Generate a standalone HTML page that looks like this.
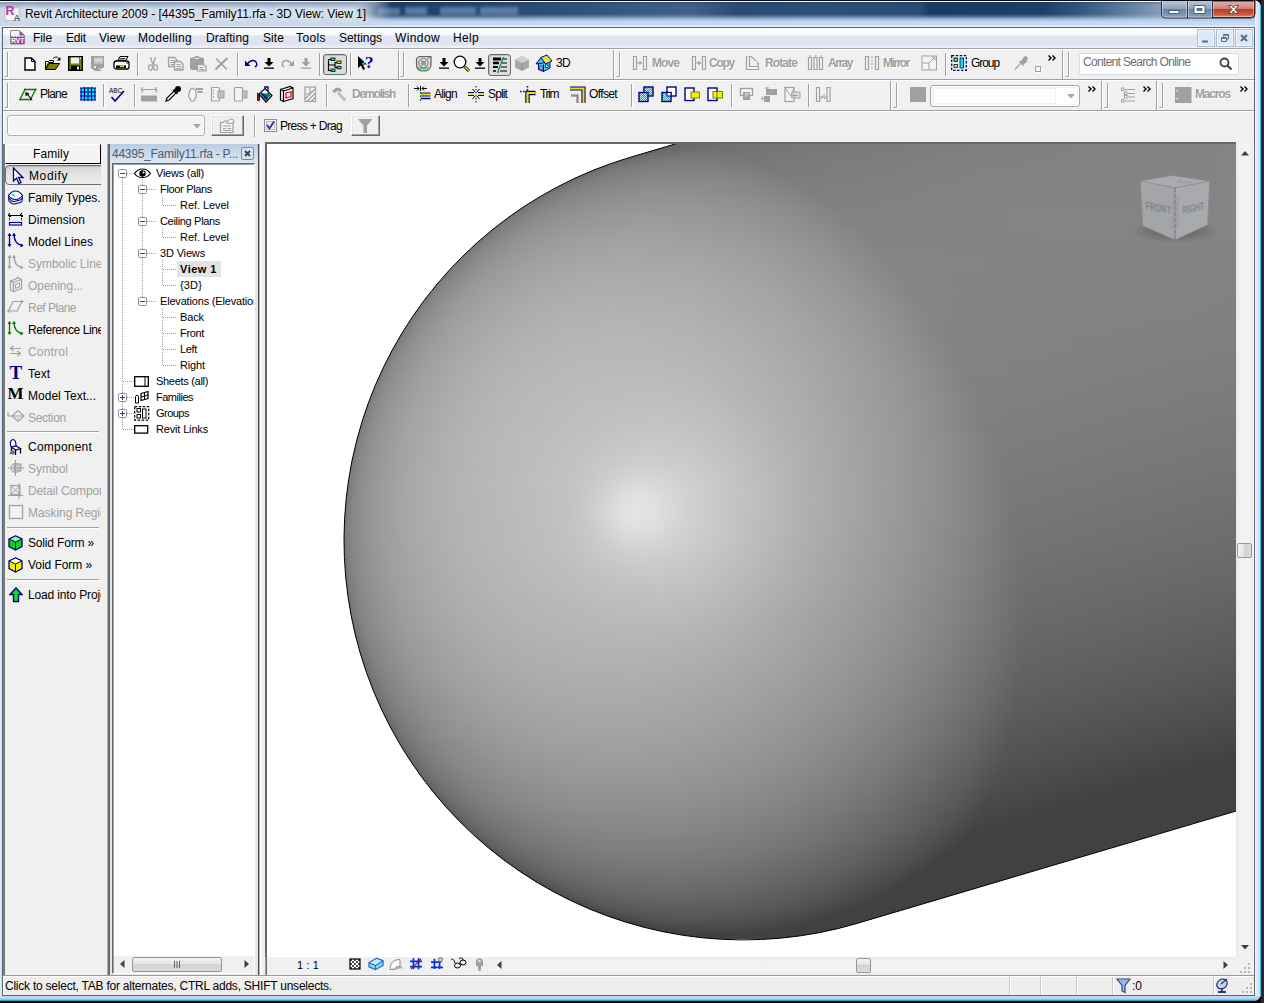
<!DOCTYPE html>
<html><head><meta charset="utf-8"><title>Revit Architecture 2009</title>
<style>
*{box-sizing:border-box;margin:0;padding:0}
html,body{width:1264px;height:1003px;overflow:hidden;background:#000}
body{font-family:"Liberation Sans",sans-serif;font-size:12px;color:#000;position:relative}
.a{position:absolute}
.t{white-space:nowrap}
#win{left:0;top:0;width:1261px;height:1001px;background:#c3d7f1;border-radius:0 8px 8px 0;overflow:hidden}
#outside{left:1261px;top:0;width:3px;height:1003px;background:#2a2a2a}
#title{left:0;top:0;width:1261px;height:27px;background:linear-gradient(180deg,#060a12 0,#060a12 1px,#fff 1px,#f0f4fa 2px,rgba(20,40,70,.25) 2px,rgba(20,40,70,0) 5px,rgba(195,217,243,0) 14px,rgba(170,195,225,.45) 17px,rgba(185,208,236,.8) 19px,rgba(195,217,243,1) 22px,#c5dbf5 25px,#e6effb 26px,#e6effb 27px),linear-gradient(90deg,#1e3e68 0,#1e3e68 373px,#22436c 450px,#2a4a74 520px,#33557d 600px,#41618a 690px,#2a4a74 738px,#2c4e78 814px,#2a4c76 920px,#163c66 930px,#1c4069 1042px,#34567e 1080px,#6a86a6 1137px,#8aa0ba 1162px,#9fb4cc 1261px)}
#titleglow{left:0;top:2px;width:400px;height:24px;background:linear-gradient(90deg,rgba(203,216,232,1) 0,rgba(203,216,232,1) 355px,rgba(203,216,232,.6) 372px,rgba(203,216,232,0) 392px)}
#titleglow2{left:0;top:2px;width:392px;height:7px;background:linear-gradient(180deg,rgba(120,140,172,.85),rgba(120,140,172,0));-webkit-mask-image:linear-gradient(90deg,#000 350px,transparent 390px)}
#titletext{left:25px;top:7px;font-size:12px;line-height:14px;white-space:nowrap;letter-spacing:-0.05px;text-shadow:0 0 6px #fff,0 0 10px #fff}
#client{left:2px;top:27px;width:1253px;height:969px;background:#f0f0f0;border:1px solid #5a6674;box-shadow:inset 1px 1px 0 #fff}
#canvasbox{left:265px;top:142px;width:971px;height:815px;background:#fff;border-top:2px solid #696969;border-left:2px solid #696969;overflow:hidden}
#shape{left:0;top:0;width:969px;height:813px}
#shape i{position:absolute;left:0;width:969px;height:3px;display:block}
</style></head><body>
<div id="win" class="a">
<div id="title" class="a"></div>
<div class="a" style="left:374px;top:6px;width:150px;height:10px;filter:blur(1.6px);opacity:.55"><div class="a" style="left:4px;top:2px;width:22px;height:7px;background:#86a6cc"></div><div class="a" style="left:31px;top:1px;width:22px;height:8px;background:#86a6cc"></div><div class="a" style="left:66px;top:1px;width:36px;height:8px;background:#86a6cc"></div><div class="a" style="left:106px;top:1px;width:38px;height:8px;background:#86a6cc"></div></div>
<div id="titleglow" class="a"></div>
<div id="titleglow2" class="a"></div>
<svg class="a" style="left:4px;top:4px" width="18" height="18" viewBox="0 0 18 18"><path d="M1 4h14v12.5H1z" fill="#f4f4f4" stroke="#b0b0b0" stroke-width=".6"/><text x="1.5" y="11" font-family="Liberation Sans,sans-serif" font-weight="bold" font-size="12.5" fill="#b43ca4">R</text><text x="10" y="17" font-family="Liberation Sans,sans-serif" font-size="8.5" fill="#000">A</text></svg>
<div id="titletext" class="a">Revit Architecture 2009 - [44395_Family11.rfa - 3D View: View 1]</div>
<div class="a" style="left:0;top:27px;width:3px;height:974px;background:linear-gradient(90deg,#e4eefb,#bdd3ef)"></div>
<div class="a" style="left:1255px;top:2px;width:6px;height:999px;background:linear-gradient(90deg,#fff 0,#e4eefb 1px,#d3e3f8 4px,#c9ddf5 5px,#3cc6ee 5px,#35b8e4 6px)"></div>
<div class="a" style="left:0;top:995px;width:1261px;height:6px;background:linear-gradient(180deg,#fff 0,#c3d8f2 1px,#b9d0ee 4px,#35c4ee 5px,#1d86b8 6px)"></div>
<div id="client" class="a"></div>
<div class="a" style="left:3px;top:28px;width:1251px;height:20px;background:linear-gradient(180deg,#fff 0,#f6f7fb 7px,#e1e5f2 8px,#dfe3f1 16px,#eef0f8 19px)"></div>
<div class="a" style="left:3px;top:48px;width:1251px;height:1px;background:#a0a0a0"></div>
<div class="a" style="left:3px;top:49px;width:1251px;height:1px;background:#fff"></div>
<svg class="a" style="left:10px;top:29px;" width="16" height="16" viewBox="0 0 16 16"><path d="M.5 1.5h9l5 5v8.5h-14z" fill="#f4f4f4" stroke="#8a8a8a"/><path d="M9.5 1.5l5 5h-5z" fill="#b040a0"/><rect x="1" y="8" width="13.5" height="7" fill="#b03fa2"/><path d="M1 8h13" stroke="#555" stroke-dasharray="2 1"/><text x="7.7" y="14" font-family="Liberation Sans,sans-serif" font-size="6.5" font-weight="bold" fill="#fff" text-anchor="middle">RVT</text></svg>
<div class="a t " style="left:33px;top:31px;font-size:12px;line-height:14px;letter-spacing:-0.09px;">File</div>
<div class="a t " style="left:66px;top:31px;font-size:12px;line-height:14px;letter-spacing:-0.17px;">Edit</div>
<div class="a t " style="left:99px;top:31px;font-size:12px;line-height:14px;letter-spacing:0.05px;">View</div>
<div class="a t " style="left:138px;top:31px;font-size:12px;line-height:14px;letter-spacing:0.29px;">Modelling</div>
<div class="a t " style="left:206px;top:31px;font-size:12px;line-height:14px;letter-spacing:0.12px;">Drafting</div>
<div class="a t " style="left:263px;top:31px;font-size:12px;line-height:14px;letter-spacing:0.08px;">Site</div>
<div class="a t " style="left:296px;top:31px;font-size:12px;line-height:14px;letter-spacing:0.40px;">Tools</div>
<div class="a t " style="left:339px;top:31px;font-size:12px;line-height:14px;letter-spacing:-0.04px;">Settings</div>
<div class="a t " style="left:395px;top:31px;font-size:12px;line-height:14px;letter-spacing:0.39px;">Window</div>
<div class="a t " style="left:453px;top:31px;font-size:12px;line-height:14px;letter-spacing:0.33px;">Help</div>
<svg class="a" style="left:1197px;top:29px;" width="18" height="18" viewBox="0 0 18 18"><rect x=".5" y=".5" width="17" height="17" fill="#dce9f7" stroke="#aebccb"/><rect x="1.5" y="1.5" width="15" height="15" fill="none" stroke="#eef5fc"/><path d="M5 12.5h6" stroke="#5d6b7c" stroke-width="2"/></svg>
<svg class="a" style="left:1216px;top:29px;" width="18" height="18" viewBox="0 0 18 18"><rect x=".5" y=".5" width="17" height="17" fill="#dce9f7" stroke="#aebccb"/><rect x="1.5" y="1.5" width="15" height="15" fill="none" stroke="#eef5fc"/><path d="M7.5 7.5V5.5h5v4.5h-1.5M7.5 6.3h5" fill="none" stroke="#5d6b7c" stroke-width="1"/><path d="M5.5 8.5h5v4h-5zM5.5 9.3h5" fill="none" stroke="#5d6b7c" stroke-width="1"/></svg>
<svg class="a" style="left:1235px;top:29px;" width="18" height="18" viewBox="0 0 18 18"><rect x=".5" y=".5" width="17" height="17" fill="#dce9f7" stroke="#aebccb"/><rect x="1.5" y="1.5" width="15" height="15" fill="none" stroke="#eef5fc"/><path d="M6 6l6 6M12 6l-6 6" stroke="#5d6b7c" stroke-width="2"/></svg>
<svg class="a" style="left:1161px;top:1px" width="95" height="18" viewBox="0 0 95 18">
<defs><linearGradient id="cg" x1="0" y1="0" x2="0" y2="1"><stop offset="0" stop-color="#b8c6d6"/><stop offset=".45" stop-color="#8fa4bc"/><stop offset=".5" stop-color="#6c86a3"/><stop offset="1" stop-color="#8aa2bd"/></linearGradient>
<linearGradient id="cr" x1="0" y1="0" x2="0" y2="1"><stop offset="0" stop-color="#e3b0a8"/><stop offset=".45" stop-color="#d1857a"/><stop offset=".5" stop-color="#bd3a22"/><stop offset=".8" stop-color="#c9573c"/><stop offset="1" stop-color="#dc9078"/></linearGradient></defs>
<path d="M0.5 0 V13 a4 4 0 0 0 4 4 H90 a4 4 0 0 0 4 -4 V0" fill="url(#cg)" stroke="#26323f"/>
<path d="M51.5 0 V16.5 H90 a3.5 3.5 0 0 0 3.5 -3.5 V0 z" fill="url(#cr)" stroke="#4a1a10"/>
<path d="M26.5 0 v17 M51.5 0 v17" stroke="#26323f"/>
<path d="M1.5 0 V13 a3 3 0 0 0 3 3 H25.5 V0 M27.5 0 V16 H50.5 V0" fill="none" stroke="rgba(255,255,255,.45)"/>
<path d="M52.5 0 V15.5 H90 a2.5 2.5 0 0 0 2.5 -2.5 V0" fill="none" stroke="rgba(255,255,255,.4)"/>
<rect x="8" y="9.5" width="10" height="3" fill="#fff" stroke="#3a4656" stroke-width=".8"/>
<path d="M33 4.5 h11 v8 H33 z M36 7.5 h5 v2 h-5 z" fill="#fff" fill-rule="evenodd" stroke="#3a4656" stroke-width=".8"/>
<path d="M67.5 4.5 h3 l2 2.5 2 -2.5 h3 l-3.5 4 3.500 4 h-3 l-2 -2.5 -2 2.5 h-3 l3.5 -4 z" fill="#fff" stroke="#46352f" stroke-width=".8"/>
</svg>
<div class="a" style="left:3px;top:79px;width:1251px;height:1px;background:#a0a0a0"></div>
<div class="a" style="left:3px;top:80px;width:1251px;height:1px;background:#fff"></div>
<div class="a" style="left:3px;top:110px;width:1251px;height:1px;background:#a0a0a0"></div>
<div class="a" style="left:3px;top:111px;width:1251px;height:1px;background:#fff"></div>
<svg class="a" style="left:4px;top:52px;" width="5" height="26" viewBox="0 0 5 26"><path d="M3.5 0v24.5h-3" fill="none" stroke="#a0a0a0"/><path d="M4.5 0v25.5h-4" fill="none" stroke="#fff"/></svg>
<svg class="a" style="left:24px;top:57px;" width="12" height="14" viewBox="0 0 12 14"><path d="M1 1h6.5l3.5 3.5v8.5h-10z" fill="#fff" stroke="#000" stroke-width="1.4"/><path d="M7.5 1v3.5h3.5" fill="none" stroke="#000"/></svg>
<svg class="a" style="left:44px;top:55px;" width="17" height="16" viewBox="0 0 17 16"><path d="M1.5 14.5v-8h3l1-1h4v2h-5z" fill="#ffff80" stroke="#000"/><path d="M1.5 14.5l3.5-6h10.5l-4 6z" fill="#808000" stroke="#000"/><path d="M9 3.5c2-2 5-2 6 .5" fill="none" stroke="#000"/><path d="M16.5 2v3.5h-3.5z" fill="#000"/></svg>
<svg class="a" style="left:68px;top:56px;" width="15" height="15" viewBox="0 0 15 15"><rect x=".7" y=".7" width="13.6" height="13.6" fill="#808000" stroke="#000" stroke-width="1.4"/><rect x="3" y="1.5" width="8" height="6" fill="#f0f0f0"/><rect x="3" y="9.5" width="9" height="4.5" fill="#000"/><rect x="9" y="10.5" width="2" height="3" fill="#e0e0e0"/><rect x="12" y="1.5" width="1" height="1.5" fill="#fff"/></svg>
<svg class="a" style="left:90px;top:55px;" width="17" height="17" viewBox="0 0 17 17"><path d="M1 1h13v11l-3 4h-6l-4-3z" fill="#a0a0a0"/><rect x="4" y="2.5" width="9" height="6" fill="#c8c8c8"/><path d="M5 4l2 2 2-2 2 2" stroke="#f0f0f0" fill="none"/><rect x="4" y="11" width="2" height="2" fill="#f0f0f0"/><path d="M9 13l2 2 2-2" stroke="#fff" fill="none"/></svg>
<svg class="a" style="left:113px;top:55px;" width="17" height="16" viewBox="0 0 17 16"><path d="M4.5 6l2.5-4.5h8l-2.5 4.5z" fill="#fff" stroke="#000"/><path d="M6.5 3.5h6M5.800 5h6" stroke="#000" stroke-width=".8"/><path d="M1 8.5c0-1.5 1-2.5 2.5-2.5h10c1.5 0 2.5 1 2.5 2.5v3.5c0 1-1 2-2 2h-11c-1 0-2-1-2-2z" fill="#fff" stroke="#000" stroke-width="1.3"/><rect x="3" y="10.5" width="10" height="2.5" fill="#000"/><rect x="7" y="10.800" width="4" height="1.4" fill="#e8e020"/><circle cx="14" cy="8" r=".8" fill="#000"/></svg>
<div class="a" style="left:137px;top:53px;width:1px;height:23px;background:#a0a0a0"></div><div class="a" style="left:138px;top:53px;width:1px;height:23px;background:#fff"></div>
<svg class="a" style="left:147px;top:56px;" width="12" height="15" viewBox="0 0 12 15"><path d="M3.5 1l2.5 8M8.5 1l-2.5 8" stroke="#a0a0a0" stroke-width="1.2" fill="none"/><ellipse cx="3.5" cy="11.5" rx="2" ry="2.6" fill="none" stroke="#a0a0a0" stroke-width="1.2"/><ellipse cx="8.5" cy="11.5" rx="2" ry="2.6" fill="none" stroke="#a0a0a0" stroke-width="1.2"/></svg>
<svg class="a" style="left:167px;top:56px;" width="17" height="15" viewBox="0 0 17 15"><path d="M1.5 1.5h6l2.5 2.5v6.5h-8.5z" fill="#f0f0f0" stroke="#a0a0a0" stroke-width="1.3"/><path d="M3.5 4.5h4M3.5 6.5h4M3.5 8.5h4" stroke="#a0a0a0"/><path d="M7.5 5.5h6l2.5 2.5v6h-8.5z" fill="#f0f0f0" stroke="#a0a0a0" stroke-width="1.3"/><path d="M9.5 8.5h4M9.5 10.5h5M9.5 12.5h5" stroke="#a0a0a0"/></svg>
<svg class="a" style="left:189px;top:55px;" width="18" height="17" viewBox="0 0 18 17"><path d="M1 4.5c0-1 1-2 2-2h2.5c0-1 1-1.5 2.5-1.5s2.5.5 2.5 1.5h2.5c1 0 2 1 2 2v8.5c0 1-1 2-2 2h-10c-1 0-2-1-2-2z" fill="#a0a0a0"/><path d="M6 3.5h4" stroke="#f0f0f0"/><path d="M8.5 9.5h6l2.5 2v4.5h-8.5z" fill="#f0f0f0" stroke="#a0a0a0" stroke-width="1.2"/><path d="M10.5 12.5h4M10.5 14.5h5" stroke="#a0a0a0"/></svg>
<svg class="a" style="left:214px;top:57px;" width="15" height="14" viewBox="0 0 15 14"><path d="M2 1.5l11 11" stroke="#a0a0a0" stroke-width="1.6"/><path d="M13.5 1l-9 8.5-3 3" stroke="#a0a0a0" stroke-width="2.2"/></svg>
<div class="a" style="left:237px;top:53px;width:1px;height:23px;background:#a0a0a0"></div><div class="a" style="left:238px;top:53px;width:1px;height:23px;background:#fff"></div>
<svg class="a" style="left:244px;top:58px;" width="14" height="11" viewBox="0 0 14 11"><path d="M1 2.5v5.5h5.5z" fill="#00008b"/><path d="M3.5 6c2-3.5 6-4.5 8-2.5s1.5 4.5-.5 5.5" fill="none" stroke="#00008b" stroke-width="1.5"/></svg>
<svg class="a" style="left:264px;top:58px;" width="10" height="11" viewBox="0 0 10 11"><path d="M3.5 0h3v4h3l-4.5 4.5-4.5-4.5h3z" fill="#000"/><rect x="0" y="9.5" width="10" height="1.3" fill="#000"/></svg>
<svg class="a" style="left:281px;top:58px;" width="14" height="11" viewBox="0 0 14 11"><g transform="translate(14,0) scale(-1,1)"><path d="M1 2.5v5.5h5.5z" fill="#a0a0a0"/><path d="M3.5 6c2-3.5 6-4.5 8-2.5s1.5 4.5-.5 5.5" fill="none" stroke="#a0a0a0" stroke-width="1.5"/></g></svg>
<svg class="a" style="left:301px;top:58px;" width="10" height="11" viewBox="0 0 10 11"><path d="M3.5 0h3v4h3l-4.5 4.5-4.5-4.5h3z" fill="#a0a0a0"/><rect x="0" y="9.5" width="10" height="1.3" fill="#a0a0a0"/></svg>
<div class="a" style="left:319px;top:53px;width:1px;height:23px;background:#a0a0a0"></div><div class="a" style="left:320px;top:53px;width:1px;height:23px;background:#fff"></div>
<div class="a" style="left:323px;top:54px;width:24px;height:21px;background:#dcdcdc;border:1px solid #6a6a6a;border-radius:3px;box-shadow:inset 1px 1px 0 #c0c0c0"></div>
<svg class="a" style="left:327px;top:57px;" width="16" height="16" viewBox="0 0 16 16"><path d="M4 2.5h-2.5v11h2.5M1.5 8h6.5M8 5.5v5M8 5.5h2M8 10.5h2" fill="none" stroke="#000" stroke-width="1.2"/><rect x="4" y="1" width="4" height="2.5" fill="#00e0e0" stroke="#000" stroke-width=".8"/><rect x="4" y="12" width="4" height="2.5" fill="#00e0e0" stroke="#000" stroke-width=".8"/><rect x="10" y="4" width="4" height="2.5" fill="#e8e000" stroke="#000" stroke-width=".8"/><rect x="10" y="9.3" width="4" height="2.5" fill="#00e0e0" stroke="#000" stroke-width=".8"/></svg>
<div class="a" style="left:350px;top:53px;width:1px;height:23px;background:#a0a0a0"></div><div class="a" style="left:351px;top:53px;width:1px;height:23px;background:#fff"></div>
<svg class="a" style="left:357px;top:55px;" width="18" height="18" viewBox="0 0 18 18"><path d="M1 1v12l3-2.5 2 4.5 2-1-2-4.5h4z" fill="#000"/><path d="M5 9l3-1.5" stroke="#00c0c0" stroke-width="1.5"/><text x="8" y="13" font-family="Liberation Serif,serif" font-weight="bold" font-size="17" fill="#00008b">?</text></svg>
<div class="a" style="left:398px;top:50px;width:1px;height:29px;background:#a0a0a0"></div><div class="a" style="left:399px;top:50px;width:1px;height:29px;background:#fff"></div>
<svg class="a" style="left:400px;top:52px;" width="5" height="26" viewBox="0 0 5 26"><path d="M3.5 0v24.5h-3" fill="none" stroke="#a0a0a0"/><path d="M4.5 0v25.5h-4" fill="none" stroke="#fff"/></svg>
<svg class="a" style="left:415px;top:55px;" width="18" height="17" viewBox="0 0 18 17"><path d="M1.5 5c0-2 2-3.5 4-3.5h10.5v8c0 4-3 6.5-7.5 6.5s-7-2.5-7-6.5z" fill="#d8d8d8" stroke="#606060" stroke-width="1.2"/><path d="M3 12.5c3-1.5 8-1.5 11 0-1.5 2.5-9.5 2.5-11 0z" fill="#50d070"/><circle cx="8.5" cy="8" r="4.5" fill="#e8e8e8" stroke="#707070"/><circle cx="8.5" cy="8" r="2" fill="#c8c8c8" stroke="#707070" stroke-width=".8"/><path d="M5.5 5l6 6M11.5 5l-6 6" stroke="#707070" stroke-width=".8"/><path d="M12 4l3.5-2.5" stroke="#707070"/></svg>
<svg class="a" style="left:439px;top:58px;" width="10" height="11" viewBox="0 0 10 11"><path d="M3.5 0h3v4h3l-4.5 4.5-4.5-4.5h3z" fill="#000"/><rect x="0" y="9.5" width="10" height="1.3" fill="#000"/></svg>
<svg class="a" style="left:453px;top:55px;" width="18" height="17" viewBox="0 0 18 17"><circle cx="7" cy="7" r="5.8" fill="#fff" stroke="#000" stroke-width="1.3"/><path d="M11.5 11.5l4.5 4.5" stroke="#000" stroke-width="3"/><path d="M11.8 11.8l4 4" stroke="#f0e020" stroke-width="1.5"/></svg>
<svg class="a" style="left:475px;top:58px;" width="10" height="11" viewBox="0 0 10 11"><path d="M3.5 0h3v4h3l-4.5 4.5-4.5-4.5h3z" fill="#000"/><rect x="0" y="9.5" width="10" height="1.3" fill="#000"/></svg>
<div class="a" style="left:488px;top:54px;width:23px;height:22px;background:#dcdcdc;border:1px solid #6a6a6a;border-radius:3px;box-shadow:inset 1px 1px 0 #c0c0c0"></div>
<svg class="a" style="left:492px;top:57px;" width="16" height="16" viewBox="0 0 16 16"><path d="M1 2h8" stroke="#000" stroke-width="3"/><path d="M1 6h6" stroke="#000" stroke-width="2.5"/><path d="M1 10h5" stroke="#000" stroke-width="2"/><path d="M1 14h3" stroke="#000" stroke-width="1.5"/><path d="M11 2h4M10 6h5M9 10h6M8 14h7" stroke="#000" stroke-width="1"/><path d="M11.5 0l-6 16" stroke="#008080" stroke-width="1.3"/></svg>
<svg class="a" style="left:514px;top:55px;" width="16" height="17" viewBox="0 0 16 17"><path d="M8 1l7 3.5v8l-7 3.5-7-3.5v-8z" fill="#a8a8a8"/><path d="M8 1l7 3.5-7 3.5-7-3.5z" fill="#d0d0d0"/><path d="M8 8v8" stroke="#909090"/></svg>
<svg class="a" style="left:535px;top:54px;" width="18" height="18" viewBox="0 0 18 18"><path d="M3.5 9.5v6l5 2 6.5-3.5v-5.5" fill="#40d0e8" stroke="#00008b"/><path d="M8.5 17.5v-7" stroke="#00008b"/><path d="M1 10l5-6.5 4.5 5z" fill="#40d0e8" stroke="#00008b"/><path d="M6 3.5l6-2.5 5 6-6.5 3z" fill="#f0e040" stroke="#00008b"/><rect x="5" y="12" width="2" height="4" fill="#fff" stroke="#00008b" stroke-width=".7"/><rect x="10.5" y="11" width="2.5" height="2.5" fill="#fff" stroke="#00008b" stroke-width=".7"/></svg>
<div class="a t " style="left:556px;top:56px;font-size:12px;line-height:14px;letter-spacing:-0.67px;">3D</div>
<div class="a" style="left:613px;top:50px;width:1px;height:29px;background:#a0a0a0"></div><div class="a" style="left:614px;top:50px;width:1px;height:29px;background:#fff"></div>
<svg class="a" style="left:616px;top:52px;" width="5" height="26" viewBox="0 0 5 26"><path d="M3.5 0v24.5h-3" fill="none" stroke="#a0a0a0"/><path d="M4.5 0v25.5h-4" fill="none" stroke="#fff"/></svg>
<svg class="a" style="left:632px;top:55px;" width="16" height="16" viewBox="0 0 16 16"><path d="M1.5 1.5h3v13h-3zM11.5 1.5h3v13h-3z" fill="#f4f4f4" stroke="#a0a0a0" stroke-width="1.2"/><path d="M5.5 8h4" stroke="#a0a0a0" stroke-width="1.3"/><path d="M7.5 5.5l2.5 2.5-2.5 2.5z" fill="#a0a0a0"/></svg>
<div class="a t " style="left:652px;top:56px;font-size:12px;line-height:14px;letter-spacing:-0.92px;color:#a0a0a0;font-weight:bold;text-shadow:1px 1px 0 #fff;">Move</div>
<svg class="a" style="left:691px;top:55px;" width="16" height="16" viewBox="0 0 16 16"><path d="M1.5 1.5h3v13h-3zM11.5 1.5h3v13h-3z" fill="#f4f4f4" stroke="#a0a0a0" stroke-width="1.2"/><path d="M5.5 8h4" stroke="#a0a0a0" stroke-width="1.3"/><path d="M7.5 5.5l2.5 2.5-2.5 2.5z" fill="#a0a0a0"/></svg>
<div class="a t " style="left:709px;top:56px;font-size:12px;line-height:14px;letter-spacing:-1.25px;color:#a0a0a0;font-weight:bold;text-shadow:1px 1px 0 #fff;">Copy</div>
<svg class="a" style="left:745px;top:55px;" width="16" height="16" viewBox="0 0 16 16"><path d="M1.5 1.5h5l3 3v1" fill="none" stroke="#a0a0a0" stroke-width="1.2"/><path d="M1.5 1.5v13h12v-3h-9v-10" fill="#f4f4f4" stroke="#a0a0a0" stroke-width="1.2"/><path d="M10 5c2 1 3 2.5 3 4" fill="none" stroke="#a0a0a0"/><path d="M11.5 8.5l1.5 2 1.5-2z" fill="#a0a0a0"/></svg>
<div class="a t " style="left:765px;top:56px;font-size:12px;line-height:14px;letter-spacing:-0.89px;color:#a0a0a0;font-weight:bold;text-shadow:1px 1px 0 #fff;">Rotate</div>
<svg class="a" style="left:807px;top:55px;" width="17" height="16" viewBox="0 0 17 16"><path d="M1.5 2.5h3v12h-3zM7 2.5h3v12h-3zM12.5 2.5h3v12h-3z" fill="#f4f4f4" stroke="#a0a0a0" stroke-width="1.2"/><path d="M2 1h2M7.5 1h2M13 1h2" stroke="#a0a0a0"/></svg>
<div class="a t " style="left:828px;top:56px;font-size:12px;line-height:14px;letter-spacing:-1.47px;color:#a0a0a0;font-weight:bold;text-shadow:1px 1px 0 #fff;">Array</div>
<svg class="a" style="left:864px;top:55px;" width="16" height="16" viewBox="0 0 16 16"><path d="M1.5 1.5h3v13h-3zM11.5 1.5h3v13h-3z" fill="#f4f4f4" stroke="#a0a0a0" stroke-width="1.2"/><path d="M8 1v14" stroke="#a0a0a0" stroke-dasharray="2 1.5"/></svg>
<div class="a t " style="left:883px;top:56px;font-size:12px;line-height:14px;letter-spacing:-1.45px;color:#a0a0a0;font-weight:bold;text-shadow:1px 1px 0 #fff;">Mirror</div>
<svg class="a" style="left:921px;top:55px;" width="17" height="16" viewBox="0 0 17 16"><rect x="1" y="1" width="14.5" height="14" fill="#f4f4f4" stroke="#a0a0a0"/><path d="M1 8h7v7" fill="none" stroke="#a0a0a0"/><path d="M8 8l6-6M10.5 2h3.5v3.5" fill="none" stroke="#a0a0a0"/></svg>
<div class="a" style="left:945px;top:53px;width:1px;height:23px;background:#a0a0a0"></div><div class="a" style="left:946px;top:53px;width:1px;height:23px;background:#fff"></div>
<svg class="a" style="left:951px;top:55px;" width="16" height="16" viewBox="0 0 16 16"><rect x=".7" y=".7" width="14.6" height="14.6" fill="none" stroke="#00008b" stroke-width="1.3" stroke-dasharray="2.5 1.5"/><rect x="3" y="3" width="3.5" height="3.5" fill="#20c020" stroke="#00008b" stroke-width=".8"/><rect x="4" y="4" width="1.5" height="1.5" fill="#f0f000"/><rect x="3" y="9.5" width="3.5" height="3" fill="#f0e000" stroke="#00008b" stroke-width=".8"/><rect x="9" y="3" width="3.5" height="10" fill="#20e0e0" stroke="#00008b" stroke-width=".8"/></svg>
<div class="a t " style="left:971px;top:56px;font-size:12px;line-height:14px;letter-spacing:-1.07px;">Group</div>
<svg class="a" style="left:1013px;top:55px;" width="16" height="16" viewBox="0 0 16 16"><path d="M2 14.5l5-5.5" stroke="#a0a0a0" stroke-width="1.2"/><path d="M5.5 6.5l4.5 4.5 1-2 3.5-2.5-4-4-2.5 3.5z" fill="#a0a0a0"/><circle cx="12.5" cy="3.5" r="2.3" fill="#a0a0a0"/></svg>
<svg class="a" style="left:1034px;top:65px;" width="8" height="8" viewBox="0 0 8 8"><rect x="1.5" y="1.5" width="5" height="5" fill="#f8f8f8" stroke="#a0a0a0"/><path d="M7.5 2.5v5h-5" fill="none" stroke="#fff"/></svg>
<svg class="a" style="left:1048px;top:55px;" width="9" height="6" viewBox="0 0 9 6"><path d="M.5.5l2.5 2.5-2.5 2.5M4.5.5l2.5 2.5-2.5 2.5" fill="none" stroke="#000" stroke-width="1.4"/></svg>
<div class="a" style="left:1062px;top:50px;width:1px;height:29px;background:#a0a0a0"></div><div class="a" style="left:1063px;top:50px;width:1px;height:29px;background:#fff"></div>
<svg class="a" style="left:1065px;top:52px;" width="5" height="26" viewBox="0 0 5 26"><path d="M3.5 0v24.5h-3" fill="none" stroke="#a0a0a0"/><path d="M4.5 0v25.5h-4" fill="none" stroke="#fff"/></svg>
<div class="a" style="left:1079px;top:53px;width:160px;height:22px;background:#fff;border:1px solid #d5dde8;border-radius:2px"></div>
<div class="a t " style="left:1083px;top:55px;font-size:12px;line-height:14px;letter-spacing:-0.68px;color:#6e6e6e;">Content Search Online</div>
<svg class="a" style="left:1218px;top:56px;" width="16" height="16" viewBox="0 0 16 16"><circle cx="6.5" cy="6.5" r="4" fill="none" stroke="#404040" stroke-width="1.8"/><path d="M9.5 9.5l4 4" stroke="#404040" stroke-width="2.2"/></svg>
<svg class="a" style="left:4px;top:83px;" width="5" height="26" viewBox="0 0 5 26"><path d="M3.5 0v24.5h-3" fill="none" stroke="#a0a0a0"/><path d="M4.5 0v25.5h-4" fill="none" stroke="#fff"/></svg>
<svg class="a" style="left:19px;top:86px;" width="18" height="17" viewBox="0 0 18 17"><path d="M6 3.5h10.5l-5 10h-10.5z" fill="none" stroke="#008000" stroke-width="1.3"/><circle cx="6" cy="3.5" r="1" fill="#008000"/><circle cx="16.5" cy="3.5" r="1" fill="#008000"/><circle cx="1.5" cy="13.5" r="1" fill="#008000"/><circle cx="11.5" cy="13.5" r="1" fill="#008000"/><path d="M7 6.5l6 7.5" stroke="#000" stroke-width="1.2"/><path d="M6.5 6v4.5l4-3z" fill="#000"/></svg>
<div class="a t " style="left:40px;top:87px;font-size:12px;line-height:14px;letter-spacing:-0.74px;">Plane</div>
<svg class="a" style="left:80px;top:87px;" width="16" height="14" viewBox="0 0 16 14"><rect x="1" y="1" width="14" height="12" fill="#00e0ff"/><path d="M1 1v12M4.5 0v14M8 0v14M11.5 0v14M15 1v12M0 1h16M0 5h16M0 9h16M0 13h16" stroke="#00008b" stroke-width="1.1"/></svg>
<div class="a" style="left:103px;top:84px;width:1px;height:23px;background:#a0a0a0"></div><div class="a" style="left:104px;top:84px;width:1px;height:23px;background:#fff"></div>
<svg class="a" style="left:109px;top:86px;" width="17" height="17" viewBox="0 0 17 17"><text x="0" y="7" font-family="Liberation Sans,sans-serif" font-size="6.5" fill="#000">ABC</text><path d="M2.5 11l3.5 4 9-10" fill="none" stroke="#00008b" stroke-width="1.600"/></svg>
<div class="a" style="left:134px;top:84px;width:1px;height:23px;background:#a0a0a0"></div><div class="a" style="left:135px;top:84px;width:1px;height:23px;background:#fff"></div>
<svg class="a" style="left:140px;top:86px;" width="18" height="17" viewBox="0 0 18 17"><path d="M2 1v6M16 1v6M1 3.5h16M1 2l2.5 3M15 2l2.5 3" stroke="#a0a0a0" fill="none"/><rect x="1" y="9.5" width="16" height="6" fill="#a0a0a0"/></svg>
<svg class="a" style="left:164px;top:85px;" width="18" height="18" viewBox="0 0 18 18"><path d="M2 16l1-3 7-7 2 2-7 7z" fill="#fff" stroke="#000" stroke-width="1.2"/><path d="M9.5 4.5l4 4" stroke="#000" stroke-width="2.4"/><circle cx="14" cy="4" r="3" fill="#000"/></svg>
<svg class="a" style="left:187px;top:86px;" width="17" height="17" viewBox="0 0 17 17"><path d="M5 2l3.5 2 1 6-2.5 5h-3l-2.5-5 1.5-6z" fill="#f4f4f4" stroke="#a0a0a0" stroke-width="1.2"/><path d="M9 3h7M10.5 6h5" stroke="#a0a0a0" stroke-width="1.8"/></svg>
<svg class="a" style="left:210px;top:86px;" width="16" height="17" viewBox="0 0 16 17"><rect x="1.5" y="1.5" width="8" height="13.5" rx="1" fill="#f4f4f4" stroke="#a0a0a0" stroke-width="1.2"/><rect x="8" y="5" width="6" height="7" fill="#c0c0c0" stroke="#a0a0a0"/><path d="M3.5 4v8" stroke="#a0a0a0" stroke-dasharray="1.5 1.5"/></svg>
<svg class="a" style="left:233px;top:86px;" width="16" height="17" viewBox="0 0 16 17"><rect x="1.5" y="1.5" width="8" height="13.5" rx="1" fill="#f4f4f4" stroke="#a0a0a0" stroke-width="1.2"/><rect x="9.5" y="5" width="4.5" height="7" fill="#c0c0c0" stroke="#a0a0a0"/></svg>
<svg class="a" style="left:256px;top:85px;" width="17" height="18" viewBox="0 0 17 18"><path d="M1.5 8v7.5h2v-6z" fill="#a00000" stroke="#800000"/><path d="M8 2h4v4" fill="none" stroke="#00008b" stroke-width="1.3"/><path d="M9 3.5l7 7-6 6.5-7-8z" fill="#fff" stroke="#000" stroke-width="1.2"/><path d="M4 9l5.5 6.5 5.5-5.5-2-2z" fill="#008080"/><path d="M5.5 8l6 6.5" stroke="#00008b" stroke-width="1.5"/></svg>
<svg class="a" style="left:279px;top:85px;" width="16" height="18" viewBox="0 0 16 18"><path d="M1.5 4.5l3 1.5v10.5l-3-1.5z" fill="#fff" stroke="#000" stroke-width="1.2"/><path d="M4.5 6l9.5-3v10.5l-9.5 3z" fill="#fff" stroke="#000" stroke-width="1.2"/><path d="M1.5 4.5l9.5-3 3 1.5" fill="none" stroke="#000" stroke-width="1.2"/><path d="M7 8l5-1.5v5l-5 1.5z" fill="none" stroke="#e00000" stroke-width="1.3"/></svg>
<svg class="a" style="left:304px;top:86px;" width="13" height="17" viewBox="0 0 13 17"><rect x="1" y="1" width="10.5" height="14.5" fill="#f4f4f4" stroke="#a0a0a0" stroke-width="1.2"/><path d="M6 1v7h-5M1 13l10-10M3 15.5l8.5-8.5M7 15.5l4.5-4.5" fill="none" stroke="#a0a0a0" stroke-width="1.2"/></svg>
<div class="a" style="left:326px;top:84px;width:1px;height:23px;background:#a0a0a0"></div><div class="a" style="left:327px;top:84px;width:1px;height:23px;background:#fff"></div>
<svg class="a" style="left:331px;top:86px;" width="16" height="16" viewBox="0 0 16 16"><path d="M1 5l4.5-3.5 4 1 1.5 2-2 1.5-2-1.5-3.5 2.5z" fill="#a0a0a0"/><path d="M7 6.5l7 8" stroke="#a0a0a0" stroke-width="2.6"/><path d="M7.3 6.800l6.5 7.5" stroke="#f0f0f0" stroke-width=".9"/></svg>
<div class="a t " style="left:352px;top:87px;font-size:12px;line-height:14px;letter-spacing:-1.38px;color:#a0a0a0;font-weight:bold;text-shadow:1px 1px 0 #fff;">Demolish</div>
<div class="a" style="left:408px;top:84px;width:1px;height:23px;background:#a0a0a0"></div><div class="a" style="left:409px;top:84px;width:1px;height:23px;background:#fff"></div>
<svg class="a" style="left:414px;top:85px;" width="17" height="18" viewBox="0 0 17 18"><path d="M6.5 1v5" stroke="#000"/><path d="M6.5 7v10" stroke="#008000" stroke-dasharray="2 1.5"/><path d="M0 3.5h5M8 3.5h5" stroke="#000"/><path d="M3 1.5l2 2-2 2M10 1.5l-2 2 2 2" fill="none" stroke="#000"/><path d="M7 9.5h9.5" stroke="#f0e000" stroke-width="2.6"/><path d="M7 8h9.5M7 11h9.5" stroke="#00008b"/><path d="M7 13.5h9.5" stroke="#00008b" stroke-width="1.5"/></svg>
<div class="a t " style="left:434px;top:87px;font-size:12px;line-height:14px;letter-spacing:-0.74px;">Align</div>
<svg class="a" style="left:468px;top:86px;" width="16" height="17" viewBox="0 0 16 17"><path d="M0 8h6M10 8h6" stroke="#f0e000" stroke-width="2.6"/><path d="M0 6.5h6M0 9.5h6M10 6.5h6M10 9.5h6" stroke="#00008b"/><path d="M8 0v17" stroke="#00008b" stroke-dasharray="1.5 1.5"/><path d="M4.5 3l2.5 3M11.5 3l-2.5 3M4.5 13l2.5-3M11.5 13l-2.5-3" stroke="#000"/></svg>
<div class="a t " style="left:488px;top:87px;font-size:12px;line-height:14px;letter-spacing:-0.87px;">Split</div>
<svg class="a" style="left:519px;top:86px;" width="17" height="17" viewBox="0 0 17 17"><path d="M1 5.5h7M8.5 0v5" stroke="#00008b" stroke-dasharray="1.5 1.5" stroke-width="1.5"/><path d="M16.5 7h-8v10" fill="none" stroke="#00008b" stroke-width="4.5"/><path d="M16.5 7h-8v10" fill="none" stroke="#f0e000" stroke-width="2.2"/></svg>
<div class="a t " style="left:540px;top:87px;font-size:12px;line-height:14px;letter-spacing:-1.39px;">Trim</div>
<svg class="a" style="left:570px;top:86px;" width="16" height="17" viewBox="0 0 16 17"><path d="M0 2.5h13.5v14.5" fill="none" stroke="#00008b" stroke-width="4.2"/><path d="M0 2.5h13.5v14.5" fill="none" stroke="#f0e000" stroke-width="2"/><path d="M1 9.5h6.5v7.5" fill="none" stroke="#909090" stroke-width="2.4"/></svg>
<div class="a t " style="left:589px;top:87px;font-size:12px;line-height:14px;letter-spacing:-0.63px;">Offset</div>
<div class="a" style="left:631px;top:84px;width:1px;height:23px;background:#a0a0a0"></div><div class="a" style="left:632px;top:84px;width:1px;height:23px;background:#fff"></div>
<svg class="a" style="left:638px;top:86px;" width="16" height="17" viewBox="0 0 16 17"><defs><pattern id="tp" width="2" height="2" patternUnits="userSpaceOnUse"><rect width="2" height="2" fill="#30a090"/><rect width="1" height="1" fill="#c0f0e8"/><rect x="1" y="1" width="1" height="1" fill="#c0f0e8"/></pattern></defs><rect x="6" y="1" width="9" height="9" fill="url(#tp)" stroke="#00008b" stroke-width="1.4"/><rect x="1" y="6.5" width="9" height="9" fill="url(#tp)" stroke="#00008b" stroke-width="1.4"/></svg>
<svg class="a" style="left:661px;top:86px;" width="16" height="17" viewBox="0 0 16 17"><rect x="6" y="1" width="9" height="9" fill="#fff" stroke="#00008b" stroke-width="1.4"/><rect x="1" y="6.5" width="9" height="9" fill="url(#tp)" stroke="#00008b" stroke-width="1.4"/><rect x="6" y="6.5" width="4" height="3.5" fill="#fff" stroke="#00008b"/></svg>
<svg class="a" style="left:684px;top:86px;" width="17" height="17" viewBox="0 0 17 17"><rect x="1" y="2" width="9" height="12.5" fill="#fff" stroke="#00008b" stroke-width="1.4"/><rect x="7" y="6" width="8.5" height="6" fill="#f0f000" stroke="#808000" stroke-width="1"/></svg>
<svg class="a" style="left:707px;top:86px;" width="17" height="17" viewBox="0 0 17 17"><rect x="1" y="2" width="9" height="12.5" fill="#fff" stroke="#00008b" stroke-width="1.4"/><rect x="6" y="5.5" width="9.5" height="6.5" fill="#f0f000" stroke="#808000" stroke-width="1"/><path d="M10 5.5v6.5" stroke="#00008b" stroke-dasharray="1 1"/></svg>
<div class="a" style="left:731px;top:84px;width:1px;height:23px;background:#a0a0a0"></div><div class="a" style="left:732px;top:84px;width:1px;height:23px;background:#fff"></div>
<svg class="a" style="left:739px;top:86px;" width="16" height="17" viewBox="0 0 16 17"><rect x="1.5" y="2.5" width="12" height="7" fill="#f4f4f4" stroke="#a0a0a0" stroke-width="1.3"/><rect x="4" y="6" width="7" height="8" fill="#a0a0a0"/><path d="M6 8h4M6 10h2" stroke="#f0f0f0"/></svg>
<svg class="a" style="left:761px;top:86px;" width="17" height="17" viewBox="0 0 17 17"><rect x="5" y="3" width="11" height="6" fill="#a0a0a0"/><rect x="3" y="10" width="6" height="6" fill="#a0a0a0"/><path d="M1 12.5h4M6 1v3M4 2h4M1 10.5v4" stroke="#a0a0a0"/></svg>
<svg class="a" style="left:784px;top:86px;" width="17" height="17" viewBox="0 0 17 17"><rect x="1" y="1.5" width="9" height="14" fill="#f4f4f4" stroke="#a0a0a0" stroke-width="1.2"/><path d="M1 1.5l6 9M10 1.5l-3 9" stroke="#a0a0a0"/><rect x="8" y="6" width="8" height="6" fill="#e0e0e0" stroke="#a0a0a0"/><path d="M9 9.5h5M9 9.5l2-2M9 9.5l2 2" stroke="#a0a0a0" fill="none"/></svg>
<div class="a" style="left:808px;top:84px;width:1px;height:23px;background:#a0a0a0"></div><div class="a" style="left:809px;top:84px;width:1px;height:23px;background:#fff"></div>
<svg class="a" style="left:815px;top:86px;" width="17" height="17" viewBox="0 0 17 17"><path d="M1.5 1.5h3v14h-3zM12 1.5h3v14h-3z" fill="#f4f4f4" stroke="#a0a0a0" stroke-width="1.2"/><path d="M5 11h7M6 13l4-5M9 13l2-2" stroke="#a0a0a0"/></svg>
<div class="a" style="left:890px;top:81px;width:1px;height:29px;background:#a0a0a0"></div><div class="a" style="left:891px;top:81px;width:1px;height:29px;background:#fff"></div>
<svg class="a" style="left:893px;top:83px;" width="5" height="26" viewBox="0 0 5 26"><path d="M3.5 0v24.5h-3" fill="none" stroke="#a0a0a0"/><path d="M4.5 0v25.5h-4" fill="none" stroke="#fff"/></svg>
<div class="a" style="left:910px;top:87px;width:16px;height:15px;background:#a0a0a0"></div>
<div class="a" style="left:930px;top:85px;width:150px;height:22px;background:#fff;border:1px solid #a7a7a7;border-radius:3px;box-shadow:inset 0 0 0 1px #fff, inset 0 0 0 2px #f4f4f4"></div>
<div class="a" style="left:933px;top:88px;width:123px;height:16px;background:#fff;border:1px solid #f0f0f0"></div>
<svg class="a" style="left:1067px;top:94px;" width="9" height="5" viewBox="0 0 9 5"><path d="M0 0h8l-4 4.5z" fill="#a8a8a8"/></svg>
<svg class="a" style="left:1088px;top:86px;" width="9" height="6" viewBox="0 0 9 6"><path d="M.5.5l2.5 2.5-2.5 2.5M4.5.5l2.5 2.5-2.5 2.5" fill="none" stroke="#000" stroke-width="1.4"/></svg>
<div class="a" style="left:1101px;top:81px;width:1px;height:29px;background:#a0a0a0"></div><div class="a" style="left:1102px;top:81px;width:1px;height:29px;background:#fff"></div>
<svg class="a" style="left:1104px;top:83px;" width="5" height="26" viewBox="0 0 5 26"><path d="M3.5 0v24.5h-3" fill="none" stroke="#a0a0a0"/><path d="M4.5 0v25.5h-4" fill="none" stroke="#fff"/></svg>
<svg class="a" style="left:1120px;top:86px;" width="16" height="17" viewBox="0 0 16 17"><path d="M5 3.5h10M8 7.5h7M8 11h7M5 15h10" stroke="#a0a0a0" stroke-width="1.2"/><rect x="1.5" y="2" width="2.5" height="2.5" fill="#fff" stroke="#a0a0a0"/><rect x="4.5" y="6" width="2.5" height="2.5" fill="#fff" stroke="#a0a0a0"/><rect x="4.5" y="9.5" width="2.5" height="2.5" fill="#fff" stroke="#a0a0a0"/><rect x="1.5" y="13.5" width="2.5" height="2.5" fill="#fff" stroke="#a0a0a0"/></svg>
<svg class="a" style="left:1143px;top:86px;" width="9" height="6" viewBox="0 0 9 6"><path d="M.5.5l2.5 2.5-2.5 2.5M4.5.5l2.5 2.5-2.5 2.5" fill="none" stroke="#000" stroke-width="1.4"/></svg>
<div class="a" style="left:1156px;top:81px;width:1px;height:29px;background:#a0a0a0"></div><div class="a" style="left:1157px;top:81px;width:1px;height:29px;background:#fff"></div>
<svg class="a" style="left:1159px;top:83px;" width="5" height="26" viewBox="0 0 5 26"><path d="M3.5 0v24.5h-3" fill="none" stroke="#a0a0a0"/><path d="M4.5 0v25.5h-4" fill="none" stroke="#fff"/></svg>
<svg class="a" style="left:1175px;top:87px;" width="17" height="16" viewBox="0 0 17 16"><rect x="0" y="0" width="16.5" height="16" fill="#a0a0a0"/><rect x="1.5" y="3" width="1.5" height="1.5" fill="#f0f0f0"/><rect x="1.5" y="11" width="1.5" height="1.5" fill="#f0f0f0"/></svg>
<div class="a t " style="left:1195px;top:87px;font-size:12px;line-height:14px;letter-spacing:-1.17px;color:#a0a0a0;font-weight:bold;text-shadow:1px 1px 0 #fff;">Macros</div>
<svg class="a" style="left:1240px;top:86px;" width="9" height="6" viewBox="0 0 9 6"><path d="M.5.5l2.5 2.5-2.5 2.5M4.5.5l2.5 2.5-2.5 2.5" fill="none" stroke="#000" stroke-width="1.4"/></svg>
<div class="a" style="left:7px;top:115px;width:198px;height:21px;background:#f4f4f4;border:1px solid #abb2b9;border-radius:3px;box-shadow:inset 0 0 0 1px #fff"></div>
<svg class="a" style="left:193px;top:124px;" width="9" height="5" viewBox="0 0 9 5"><path d="M0 0h8l-4 4.5z" fill="#a8a8a8"/></svg>
<div class="a" style="left:211px;top:115px;width:33px;height:21px;background:#f0f0f0;border-top:1px solid #fff;border-left:1px solid #fff;border-right:1px solid #696969;border-bottom:1px solid #696969;box-shadow:inset -1px -1px 0 #a0a0a0,inset 1px 1px 0 #e3e3e3"></div>
<svg class="a" style="left:219px;top:117px;" width="17" height="17" viewBox="0 0 17 17"><path d="M1.5 5.5h3l1-1.5h4l1 1.5h3.5v10h-12.5z" fill="#f4f4f4" stroke="#a0a0a0" stroke-width="1.2"/><path d="M4 9h8M4 11.5h3M8.5 11.5h3.5M4 13.5h8" stroke="#a0a0a0"/><path d="M7 6l4-4 3 .5 1 2.5-3 1.5z" fill="#f4f4f4" stroke="#a0a0a0"/></svg>
<div class="a" style="left:254px;top:115px;width:1px;height:22px;background:#a0a0a0"></div><div class="a" style="left:255px;top:115px;width:1px;height:22px;background:#fff"></div>
<div class="a" style="left:264px;top:119px;width:13px;height:13px;background:linear-gradient(135deg,#dcdcd8,#fff);border:1px solid #8e8f8f;box-shadow:inset 0 0 0 1px #f4f4f4, inset 0 0 0 2px #b8bcc0"></div>
<svg class="a" style="left:266px;top:121px;" width="9" height="9" viewBox="0 0 9 9"><path d="M1 4l2.5 3.5 4.5-7" fill="none" stroke="#2a3a9a" stroke-width="1.8"/></svg>
<div class="a t " style="left:280px;top:119px;font-size:12px;line-height:14px;letter-spacing:-0.70px;">Press + Drag</div>
<div class="a" style="left:351px;top:115px;width:29px;height:21px;background:#f0f0f0;border-top:1px solid #fff;border-left:1px solid #fff;border-right:1px solid #696969;border-bottom:1px solid #696969;box-shadow:inset -1px -1px 0 #a0a0a0,inset 1px 1px 0 #e3e3e3"></div>
<svg class="a" style="left:357px;top:118px;" width="17" height="16" viewBox="0 0 17 16"><path d="M1 1h14.5l-5.5 6.5v7.5h-3.5v-7.5z" fill="#a0a0a0"/></svg>
<div class="a" style="left:3px;top:144px;width:2px;height:832px;background:#7a7a7a"></div>
<div class="a" style="left:5px;top:144px;width:96px;height:830px;overflow:hidden">
<div class="a" style="left:0px;top:0px;width:96px;height:20px;background:#f4f4f4;border-top:1px solid #fff;border-left:1px solid #fff;border-right:1px solid #000;border-bottom:1px solid #000"></div>
<div class="a t " style="left:28px;top:3px;font-size:12px;line-height:14px;letter-spacing:0.11px;">Family</div>
<div class="a" style="left:0px;top:21px;width:100px;height:20px;background:linear-gradient(180deg,#d4d4d4,#e2e2e2 40%,#ececec);border:1px solid #6e6e6e;border-radius:4px 0 0 4px;box-shadow:inset 0 1px 0 #bdbdbd"></div>
<svg class="a" style="left:7px;top:23px;" width="13" height="18" viewBox="0 0 13 18"><path d="M1.5 1v13l3-3 2.5 5.5 2-1-2.5-5h4.5z" fill="#fff" stroke="#00008b" stroke-width="1.3"/></svg>
<div class="a t " style="left:24px;top:25px;font-size:12px;line-height:14px;letter-spacing:0.61px;">Modify</div>
<svg class="a" style="left:2px;top:46px;" width="17" height="16" viewBox="0 0 17 16"><path d="M1.5 5.5c2-3 4-4.5 7-4.5s5 1.5 7 4.5c-2 3-4 4-7 4s-5-1-7-4z" fill="#fff" stroke="#00008b" stroke-width="1.2"/><path d="M4.5 4l3.5 2" stroke="#00e0e0" stroke-width="1.5"/><path d="M1.5 8c2 1.5 3 3.5 5 3.5s3-1 4.5-1 2.5.5 4.5-2.5M1.5 10.5c2 1.5 3 3.5 5 3.5s3-1 4.5-1 2.5.5 4.5-2.5" fill="none" stroke="#00008b" stroke-width="1.2"/><path d="M1.5 5.5v5M15.5 5.5v5" stroke="#00008b" stroke-width=".8"/></svg>
<div class="a t " style="left:23px;top:47px;font-size:12px;line-height:14px;letter-spacing:-0.10px;">Family Types...</div>
<svg class="a" style="left:2px;top:68px;" width="18" height="15" viewBox="0 0 18 15"><path d="M2.5 1v8M14.5 1v8" stroke="#000" stroke-dasharray="1.5 1"/><path d="M1 3.5h15M1 2l3 3M13 2l3 3" stroke="#000" fill="none"/><rect x="2.5" y="10.5" width="12" height="2.5" fill="#fff" stroke="#00008b" stroke-width="1.2"/></svg>
<div class="a t " style="left:23px;top:69px;font-size:12px;line-height:14px;letter-spacing:0.03px;">Dimension</div>
<svg class="a" style="left:2px;top:88px;" width="18" height="17" viewBox="0 0 18 17"><path d="M2.5 1.5v13" stroke="#00008b" stroke-width="1.3"/><path d="M.5 4l2-3 2 3zM.5 12l2 3 2-3z" fill="#00008b"/><path d="M7 1.5c0 7 3 11.5 9 12" fill="none" stroke="#00008b" stroke-width="1.3"/><path d="M5 4l2-3 2 3zM13.5 11.5l3 2-3 2z" fill="#00008b"/></svg>
<div class="a t " style="left:23px;top:91px;font-size:12px;line-height:14px;letter-spacing:0.03px;">Model Lines</div>
<svg class="a" style="left:2px;top:110px;" width="18" height="17" viewBox="0 0 18 17"><path d="M2.5 1.5v13" stroke="#a0a0a0" stroke-width="1.3"/><path d="M.5 4l2-3 2 3zM.5 12l2 3 2-3z" fill="#a0a0a0"/><path d="M7 1.5c0 7 3 11.5 9 12" fill="none" stroke="#a0a0a0" stroke-width="1.3"/><path d="M5 4l2-3 2 3zM13.5 11.5l3 2-3 2z" fill="#a0a0a0"/></svg>
<div class="a t " style="left:23px;top:113px;font-size:12px;line-height:14px;letter-spacing:-0.02px;color:#a0a0a0;">Symbolic Lines</div>
<svg class="a" style="left:4px;top:132px;" width="14" height="17" viewBox="0 0 14 17"><path d="M1.5 5l3 1.5v9l-3-1.5z" fill="#f4f4f4" stroke="#a0a0a0" stroke-width="1.2"/><path d="M4.5 6.5l8-3v9l-8 3zM1.5 5l8-3 3 1.5" fill="#f4f4f4" stroke="#a0a0a0" stroke-width="1.2"/><path d="M6.5 8.5l4-1.5v4l-4 1.5z" fill="none" stroke="#a0a0a0"/><path d="M8 2l1-1.5" stroke="#a0a0a0"/></svg>
<div class="a t " style="left:23px;top:135px;font-size:12px;line-height:14px;letter-spacing:-0.03px;color:#a0a0a0;">Opening...</div>
<svg class="a" style="left:2px;top:155px;" width="18" height="14" viewBox="0 0 18 14"><path d="M6 2.5h9l-5 9.5h-8.5z" fill="none" stroke="#a0a0a0" stroke-width="1.2"/><path d="M14 1l2.5 1.5-2.5 1.5M3 10.5l-2.5 1.5 2.5 1.5" fill="none" stroke="#a0a0a0"/></svg>
<div class="a t " style="left:23px;top:157px;font-size:12px;line-height:14px;letter-spacing:-0.52px;color:#a0a0a0;">Ref Plane</div>
<svg class="a" style="left:2px;top:176px;" width="18" height="17" viewBox="0 0 18 17"><path d="M2.5 1.5v13" stroke="#008000" stroke-width="1.3"/><path d="M.5 4l2-3 2 3zM.5 12l2 3 2-3z" fill="#008000"/><path d="M7 1.5c0 7 3 11.5 9 12" fill="none" stroke="#008000" stroke-width="1.3"/><path d="M5 4l2-3 2 3zM13.5 11.5l3 2-3 2z" fill="#008000"/></svg>
<div class="a t " style="left:23px;top:179px;font-size:12px;line-height:14px;letter-spacing:-0.40px;">Reference Lines</div>
<svg class="a" style="left:4px;top:201px;" width="13" height="12" viewBox="0 0 13 12"><path d="M2 3.5h10M1 8.5h10" stroke="#a0a0a0" stroke-width="1.2"/><path d="M4.5 1l-3 2.5 3 2.5M8.5 6l3 2.5-3 2.5" fill="none" stroke="#a0a0a0" stroke-width="1.2"/></svg>
<div class="a t " style="left:23px;top:201px;font-size:12px;line-height:14px;letter-spacing:0.19px;color:#a0a0a0;">Control</div>
<div class="a t" style="left:4.5px;top:219px;font-family:'Liberation Serif',serif;font-weight:bold;font-size:19px;line-height:20px;color:#00008b">T</div>
<div class="a t " style="left:23px;top:223px;font-size:12px;line-height:14px;letter-spacing:0.00px;">Text</div>
<div class="a t" style="left:2.5px;top:240px;font-family:'Liberation Serif',serif;font-weight:bold;font-size:17px;line-height:20px;color:#000">M</div>
<div class="a t " style="left:23px;top:245px;font-size:12px;line-height:14px;letter-spacing:0.02px;">Model Text...</div>
<svg class="a" style="left:2px;top:265px;" width="18" height="14" viewBox="0 0 18 14"><path d="M1 3.5v3.5h4" fill="none" stroke="#a0a0a0" stroke-width="1.2"/><path d="M5 7l6-5.5 6 5.5-6 5.5z" fill="none" stroke="#a0a0a0" stroke-width="1.2"/><path d="M5 7h12" stroke="#a0a0a0"/><circle cx="11" cy="9.5" r=".8" fill="#a0a0a0"/></svg>
<div class="a t " style="left:23px;top:267px;font-size:12px;line-height:14px;letter-spacing:-0.29px;color:#a0a0a0;">Section</div>
<div class="a" style="left:2px;top:287px;width:92px;height:1px;background:#a0a0a0"></div><div class="a" style="left:2px;top:288px;width:92px;height:1px;background:#fff"></div>
<svg class="a" style="left:3px;top:294px;" width="14" height="18" viewBox="0 0 14 18"><path d="M3.5 9c-2-3-1.5-7 1.5-7.5 2.5 0 3 3 3 6.5z" fill="#fff" stroke="#00008b" stroke-width="1.2"/><path d="M3.5 9l4.5-1 4.5 2.5-5 1.5z" fill="#fff" stroke="#00008b" stroke-width="1.2"/><path d="M3.5 9.5v6M7.5 12v5M12.5 10.5v5" stroke="#000" stroke-width="1.3"/><path d="M1 16l3-4 3 1.5-1 3z" fill="#707070"/></svg>
<div class="a t " style="left:23px;top:296px;font-size:12px;line-height:14px;letter-spacing:0.22px;">Component</div>
<svg class="a" style="left:3px;top:316px;" width="16" height="17" viewBox="0 0 16 17"><circle cx="7.5" cy="8" r="4.5" fill="none" stroke="#a0a0a0" stroke-width="1.2"/><rect x="6" y="4" width="7" height="7" fill="#c8c8c8" stroke="#a0a0a0"/><path d="M7.5 0v16M0 8h16" stroke="#a0a0a0"/></svg>
<div class="a t " style="left:23px;top:318px;font-size:12px;line-height:14px;letter-spacing:-0.00px;color:#a0a0a0;">Symbol</div>
<svg class="a" style="left:2px;top:338px;" width="18" height="18" viewBox="0 0 18 18"><rect x="4" y="3.5" width="9" height="9" fill="none" stroke="#a0a0a0" stroke-width="1.2"/><path d="M4 3.5l9 9M13 3.5l-9 9M1 13.5h15M12 1v16" stroke="#a0a0a0"/></svg>
<div class="a t " style="left:23px;top:340px;font-size:12px;line-height:14px;letter-spacing:-0.14px;color:#a0a0a0;">Detail Component</div>
<svg class="a" style="left:3px;top:360px;" width="16" height="16" viewBox="0 0 16 16"><rect x="1.5" y="1.5" width="13" height="13" fill="#f4f4f4" stroke="#a0a0a0" stroke-width="1.3"/></svg>
<div class="a t " style="left:23px;top:362px;font-size:12px;line-height:14px;letter-spacing:-0.06px;color:#a0a0a0;">Masking Region</div>
<div class="a" style="left:2px;top:383px;width:92px;height:1px;background:#a0a0a0"></div><div class="a" style="left:2px;top:384px;width:92px;height:1px;background:#fff"></div>
<svg class="a" style="left:3px;top:391px;" width="16" height="16" viewBox="0 0 16 16"><path d="M1 4l6.5-3 6.5 3v7.5l-6.5 3.5-6.5-3.5z" fill="#10d020" stroke="#00008b" stroke-width="1.3"/><path d="M1 4l6.5 3 6.5-3-6.5-3z" fill="#a0f0a0" stroke="#00008b"/><path d="M7.5 7v8" stroke="#00008b"/></svg>
<div class="a t " style="left:23px;top:392px;font-size:12px;line-height:14px;letter-spacing:-0.17px;">Solid Form »</div>
<svg class="a" style="left:3px;top:413px;" width="16" height="16" viewBox="0 0 16 16"><path d="M1 4l6.5-3 6.5 3v7.5l-6.5 3.5-6.5-3.5z" fill="#f0f000" stroke="#00008b" stroke-width="1.3"/><path d="M1 4l6.5 3 6.5-3-6.5-3z" fill="#ffff90" stroke="#00008b"/><path d="M7.5 7v8" stroke="#00008b"/></svg>
<div class="a t " style="left:23px;top:414px;font-size:12px;line-height:14px;letter-spacing:-0.06px;">Void Form »</div>
<div class="a" style="left:2px;top:435px;width:92px;height:1px;background:#a0a0a0"></div><div class="a" style="left:2px;top:436px;width:92px;height:1px;background:#fff"></div>
<svg class="a" style="left:4px;top:443px;" width="14" height="16" viewBox="0 0 14 16"><path d="M7 1l6 6.5h-3.5v7h-5v-7h-3.5z" fill="#10e020" stroke="#00008b" stroke-width="1.4"/></svg>
<div class="a t " style="left:23px;top:444px;font-size:12px;line-height:14px;letter-spacing:-0.15px;">Load into Projects</div>
</div>
<div class="a" style="left:107px;top:144px;width:1px;height:832px;background:#b0b0b0"></div>
<div class="a" style="left:108px;top:144px;width:2px;height:832px;background:#6a6a6a"></div>
<div class="a" style="left:110px;top:144px;width:148px;height:20px;background:linear-gradient(180deg,#b9cbe2,#cfdcec 50%,#dfe8f3)"></div>
<div class="a t " style="left:112px;top:147px;font-size:12px;line-height:14px;letter-spacing:-0.25px;color:#4d5b6e;">44395_Family11.rfa - P...</div>
<svg class="a" style="left:241px;top:147px;" width="14" height="14" viewBox="0 0 14 14"><rect x=".5" y=".5" width="12" height="12" rx="1.5" fill="#d8e2f0" stroke="#7c88a4"/><path d="M4 4l5 5M9 4l-5 5" stroke="#3c4456" stroke-width="2"/></svg>
<div class="a" style="left:258px;top:144px;width:1px;height:832px;background:#4a4a4a"></div>
<div class="a" style="left:259px;top:144px;width:1px;height:832px;background:#b8b8b8"></div>
<div class="a" style="left:260px;top:144px;width:2px;height:832px;background:#fff"></div>
<div class="a" style="left:110px;top:164px;width:148px;height:812px;background:#dfe8f3"></div>
<div class="a" style="left:112px;top:163px;width:143px;height:811px;background:#fff;border-top:1px solid #696969;border-left:1px solid #696969;border-right:1px solid #fff;border-bottom:1px solid #fff"></div>
<div class="a" style="left:113px;top:164px;width:1px;height:809px;background:#a0a0a0"></div>
<div class="a" style="left:113px;top:164px;width:141px;height:1px;background:#a0a0a0"></div>
<div class="a" style="left:122px;top:178px;width:1px;height:252px;background:repeating-linear-gradient(180deg,#a0a0a0 0 1px,transparent 1px 2px)"></div>
<div class="a" style="left:123px;top:381px;width:11px;height:1px;background:repeating-linear-gradient(90deg,#a0a0a0 0 1px,transparent 1px 2px)"></div>
<div class="a" style="left:123px;top:429px;width:11px;height:1px;background:repeating-linear-gradient(90deg,#a0a0a0 0 1px,transparent 1px 2px)"></div>
<div class="a" style="left:127px;top:173px;width:7px;height:1px;background:repeating-linear-gradient(90deg,#a0a0a0 0 1px,transparent 1px 2px)"></div>
<div class="a" style="left:127px;top:397px;width:7px;height:1px;background:repeating-linear-gradient(90deg,#a0a0a0 0 1px,transparent 1px 2px)"></div>
<div class="a" style="left:127px;top:413px;width:7px;height:1px;background:repeating-linear-gradient(90deg,#a0a0a0 0 1px,transparent 1px 2px)"></div>
<div class="a" style="left:142px;top:180px;width:1px;height:121px;background:repeating-linear-gradient(180deg,#a0a0a0 0 1px,transparent 1px 2px)"></div>
<div class="a" style="left:147px;top:189px;width:10px;height:1px;background:repeating-linear-gradient(90deg,#a0a0a0 0 1px,transparent 1px 2px)"></div>
<div class="a" style="left:147px;top:221px;width:10px;height:1px;background:repeating-linear-gradient(90deg,#a0a0a0 0 1px,transparent 1px 2px)"></div>
<div class="a" style="left:147px;top:253px;width:10px;height:1px;background:repeating-linear-gradient(90deg,#a0a0a0 0 1px,transparent 1px 2px)"></div>
<div class="a" style="left:147px;top:301px;width:10px;height:1px;background:repeating-linear-gradient(90deg,#a0a0a0 0 1px,transparent 1px 2px)"></div>
<div class="a" style="left:162px;top:196px;width:1px;height:10px;background:repeating-linear-gradient(180deg,#a0a0a0 0 1px,transparent 1px 2px)"></div>
<div class="a" style="left:162px;top:228px;width:1px;height:10px;background:repeating-linear-gradient(180deg,#a0a0a0 0 1px,transparent 1px 2px)"></div>
<div class="a" style="left:162px;top:260px;width:1px;height:26px;background:repeating-linear-gradient(180deg,#a0a0a0 0 1px,transparent 1px 2px)"></div>
<div class="a" style="left:162px;top:308px;width:1px;height:58px;background:repeating-linear-gradient(180deg,#a0a0a0 0 1px,transparent 1px 2px)"></div>
<div class="a" style="left:163px;top:205px;width:13px;height:1px;background:repeating-linear-gradient(90deg,#a0a0a0 0 1px,transparent 1px 2px)"></div>
<div class="a" style="left:163px;top:237px;width:13px;height:1px;background:repeating-linear-gradient(90deg,#a0a0a0 0 1px,transparent 1px 2px)"></div>
<div class="a" style="left:163px;top:269px;width:13px;height:1px;background:repeating-linear-gradient(90deg,#a0a0a0 0 1px,transparent 1px 2px)"></div>
<div class="a" style="left:163px;top:285px;width:13px;height:1px;background:repeating-linear-gradient(90deg,#a0a0a0 0 1px,transparent 1px 2px)"></div>
<div class="a" style="left:163px;top:317px;width:13px;height:1px;background:repeating-linear-gradient(90deg,#a0a0a0 0 1px,transparent 1px 2px)"></div>
<div class="a" style="left:163px;top:333px;width:13px;height:1px;background:repeating-linear-gradient(90deg,#a0a0a0 0 1px,transparent 1px 2px)"></div>
<div class="a" style="left:163px;top:349px;width:13px;height:1px;background:repeating-linear-gradient(90deg,#a0a0a0 0 1px,transparent 1px 2px)"></div>
<div class="a" style="left:163px;top:365px;width:13px;height:1px;background:repeating-linear-gradient(90deg,#a0a0a0 0 1px,transparent 1px 2px)"></div>
<svg class="a" style="left:118px;top:169px;" width="9" height="9" viewBox="0 0 9 9"><rect x=".5" y=".5" width="8" height="8" rx="1" fill="#fcfcfc" stroke="#919191"/><path d="M2 4.5h5" stroke="#304090"/></svg>
<svg class="a" style="left:118px;top:393px;" width="9" height="9" viewBox="0 0 9 9"><rect x=".5" y=".5" width="8" height="8" rx="1" fill="#fcfcfc" stroke="#919191"/><path d="M2 4.5h5" stroke="#304090"/><path d="M4.5 2v5" stroke="#304090"/></svg>
<svg class="a" style="left:118px;top:409px;" width="9" height="9" viewBox="0 0 9 9"><rect x=".5" y=".5" width="8" height="8" rx="1" fill="#fcfcfc" stroke="#919191"/><path d="M2 4.5h5" stroke="#304090"/><path d="M4.5 2v5" stroke="#304090"/></svg>
<svg class="a" style="left:138px;top:185px;" width="9" height="9" viewBox="0 0 9 9"><rect x=".5" y=".5" width="8" height="8" rx="1" fill="#fcfcfc" stroke="#919191"/><path d="M2 4.5h5" stroke="#304090"/></svg>
<svg class="a" style="left:138px;top:217px;" width="9" height="9" viewBox="0 0 9 9"><rect x=".5" y=".5" width="8" height="8" rx="1" fill="#fcfcfc" stroke="#919191"/><path d="M2 4.5h5" stroke="#304090"/></svg>
<svg class="a" style="left:138px;top:249px;" width="9" height="9" viewBox="0 0 9 9"><rect x=".5" y=".5" width="8" height="8" rx="1" fill="#fcfcfc" stroke="#919191"/><path d="M2 4.5h5" stroke="#304090"/></svg>
<svg class="a" style="left:138px;top:297px;" width="9" height="9" viewBox="0 0 9 9"><rect x=".5" y=".5" width="8" height="8" rx="1" fill="#fcfcfc" stroke="#919191"/><path d="M2 4.5h5" stroke="#304090"/></svg>
<svg class="a" style="left:134px;top:168px;" width="17" height="11" viewBox="0 0 17 11"><path d="M.5 5.5c4-6 12-6 16 0-4 5.5-12 5.5-16 0z" fill="#fff" stroke="#000" stroke-width="1.2"/><circle cx="8.5" cy="5.5" r="3.2" fill="#000"/><circle cx="9.5" cy="4.5" r="1" fill="#fff"/></svg>
<svg class="a" style="left:134px;top:376px;" width="16" height="11" viewBox="0 0 16 11"><rect x=".7" y=".7" width="13.6" height="9.6" fill="#fff" stroke="#000" stroke-width="1.3"/><path d="M11 .7v9.6" stroke="#000"/></svg>
<svg class="a" style="left:134px;top:390px;" width="16" height="14" viewBox="0 0 16 14"><path d="M1.5 6.5c0-1.5 3-1.5 3 0v6.5h-3z" fill="#fff" stroke="#000"/><path d="M7 3.5l7-2v7l-7 2z" fill="#fff" stroke="#000" stroke-width="1.2"/><path d="M10.5 2.5v7M7 7l7-2" stroke="#000"/></svg>
<svg class="a" style="left:134px;top:406px;" width="16" height="15" viewBox="0 0 16 15"><rect x=".7" y=".7" width="14" height="13.4" fill="#fff" stroke="#000" stroke-width="1.2" stroke-dasharray="2.5 1.5"/><rect x="3" y="2.5" width="3.5" height="3.5" fill="#fff" stroke="#000"/><rect x="3" y="8.5" width="3.5" height="3.5" fill="#fff" stroke="#000"/><rect x="8.5" y="3" width="3.5" height="9" fill="#fff" stroke="#000"/></svg>
<svg class="a" style="left:134px;top:425px;" width="15" height="9" viewBox="0 0 15 9"><rect x=".7" y=".7" width="13" height="7.4" fill="#fff" stroke="#000" stroke-width="1.3"/></svg>
<div class="a t " style="left:156px;top:167px;font-size:11px;line-height:13px;letter-spacing:-0.23px;">Views (all)</div>
<div class="a t " style="left:160px;top:183px;font-size:11px;line-height:13px;letter-spacing:-0.33px;">Floor Plans</div>
<div class="a t " style="left:180px;top:199px;font-size:11px;line-height:13px;letter-spacing:-0.06px;">Ref. Level</div>
<div class="a t " style="left:160px;top:215px;font-size:11px;line-height:13px;letter-spacing:-0.32px;">Ceiling Plans</div>
<div class="a t " style="left:180px;top:231px;font-size:11px;line-height:13px;letter-spacing:-0.06px;">Ref. Level</div>
<div class="a t " style="left:160px;top:247px;font-size:11px;line-height:13px;letter-spacing:-0.16px;">3D Views</div>
<div class="a" style="left:177px;top:261px;width:44px;height:16px;background:#e3e3e3"></div>
<div class="a t " style="left:180px;top:263px;font-size:11px;line-height:13px;letter-spacing:0.49px;font-weight:bold;">View 1</div>
<div class="a t " style="left:180px;top:279px;font-size:11px;line-height:13px;letter-spacing:0.15px;">{3D}</div>
<div class="a" style="left:160px;top:293px;width:94px;height:16px;overflow:hidden"><div class="a t " style="left:0px;top:2px;font-size:11px;line-height:13px;letter-spacing:-0.18px;">Elevations (Elevation 1)</div></div>
<div class="a t " style="left:180px;top:311px;font-size:11px;line-height:13px;letter-spacing:-0.12px;">Back</div>
<div class="a t " style="left:180px;top:327px;font-size:11px;line-height:13px;letter-spacing:-0.34px;">Front</div>
<div class="a t " style="left:180px;top:343px;font-size:11px;line-height:13px;letter-spacing:-0.34px;">Left</div>
<div class="a t " style="left:180px;top:359px;font-size:11px;line-height:13px;letter-spacing:-0.14px;">Right</div>
<div class="a t " style="left:156px;top:375px;font-size:11px;line-height:13px;letter-spacing:-0.30px;">Sheets (all)</div>
<div class="a t " style="left:156px;top:391px;font-size:11px;line-height:13px;letter-spacing:-0.49px;">Families</div>
<div class="a t " style="left:156px;top:407px;font-size:11px;line-height:13px;letter-spacing:-0.52px;">Groups</div>
<div class="a t " style="left:156px;top:423px;font-size:11px;line-height:13px;letter-spacing:-0.16px;">Revit Links</div>
<div class="a" style="left:114px;top:956px;width:140px;height:17px;background:#f0f0f0"></div>
<svg class="a" style="left:120px;top:960px;" width="5" height="9" viewBox="0 0 5 9"><path d="M4.5 0v8l-4.5-4z" fill="#404040"/></svg>
<svg class="a" style="left:244px;top:960px;" width="5" height="9" viewBox="0 0 5 9"><path d="M.5 0v8l4.5-4z" fill="#404040"/></svg>
<div class="a" style="left:132px;top:957px;width:90px;height:15px;background:linear-gradient(180deg,#f2f2f2,#e6e6e6 45%,#d4d4d4 50%,#dadada);border:1px solid #989898;border-radius:2px"></div>
<svg class="a" style="left:173px;top:961px;" width="8" height="7" viewBox="0 0 8 7"><path d="M1.5 0v7M4 0v7M6.5 0v7" stroke="#606060"/></svg>
<div id="canvasbox" class="a">
<div id="shape" class="a" style="clip-path:path('M1513.43 -327.74 L362.93 13.38 A399.5 399.5 0 0 0 93.48 509.97 A399.5 399.5 0 0 0 590.07 779.42 L1740.56 438.30 Z')">
<i style="top:0px;background:linear-gradient(90deg,#646464 404px,#676767 409px,#6a6a6a 419px,#707070 451px,#757575 500px,#797979 565px,#808080 741px,#848484 969px)"></i>
<i style="top:3px;background:linear-gradient(90deg,#636363 393px,#666666 397px,#696969 405px,#6f6f6f 435px,#747474 483px,#797979 549px,#808080 730px,#848484 969px)"></i>
<i style="top:6px;background:linear-gradient(90deg,#636363 383px,#666666 386px,#6b6b6b 397px,#707070 416px,#797979 544px,#808080 728px,#848484 969px)"></i>
<i style="top:9px;background:linear-gradient(90deg,#636363 373px,#676767 376px,#6a6a6a 379px,#6f6f6f 389px,#727272 404px,#747474 423px,#747474 458px,#7a7a7a 554px,#7f7f7f 683px,#848484 969px)"></i>
<i style="top:12px;background:linear-gradient(90deg,#656565 363px,#686868 365px,#6c6c6c 369px,#717171 380px,#757575 397px,#777777 419px,#787878 443px,#767676 471px,#7b7b7b 561px,#7f7f7f 676px,#828282 813px,#848484 969px)"></i>
<i style="top:15px;background:linear-gradient(90deg,#646464 353px,#696969 355px,#6c6c6c 358px,#737373 371px,#787878 390px,#7a7a7a 414px,#7a7a7a 446px,#777777 481px,#7c7c7c 573px,#808080 686px,#848484 969px)"></i>
<i style="top:18px;background:linear-gradient(90deg,#686868 345px,#6d6d6d 348px,#707070 352px,#767676 366px,#7b7b7b 386px,#7d7d7d 411px,#7d7d7d 449px,#797979 489px,#7d7d7d 582px,#808080 694px,#848484 969px)"></i>
<i style="top:21px;background:linear-gradient(90deg,#676767 336px,#6b6b6b 338px,#707070 342px,#747474 348px,#777777 357px,#7d7d7d 379px,#7f7f7f 407px,#7f7f7f 451px,#7a7a7a 497px,#818181 700px,#848484 969px)"></i>
<i style="top:24px;background:linear-gradient(90deg,#6a6a6a 329px,#6f6f6f 332px,#737373 337px,#7a7a7a 353px,#7f7f7f 376px,#828282 405px,#818181 453px,#7a7a7a 504px,#818181 707px,#848484 969px)"></i>
<i style="top:27px;background:linear-gradient(90deg,#686868 321px,#6d6d6d 323px,#737373 328px,#777777 335px,#7b7b7b 344px,#818181 369px,#848484 401px,#828282 454px,#7b7b7b 511px,#818181 712px,#848484 969px)"></i>
<i style="top:30px;background:linear-gradient(90deg,#696969 314px,#6e6e6e 316px,#737373 321px,#787878 328px,#7c7c7c 338px,#828282 364px,#858585 397px,#868686 425px,#848484 455px,#818181 486px,#7c7c7c 517px,#828282 717px,#848484 969px)"></i>
<i style="top:33px;background:linear-gradient(90deg,#6c6c6c 308px,#717171 311px,#767676 317px,#7f7f7f 335px,#848484 362px,#878787 396px,#888888 426px,#868686 458px,#828282 490px,#7d7d7d 523px,#828282 722px,#848484 969px)"></i>
<i style="top:36px;background:linear-gradient(90deg,#6d6d6d 302px,#737373 306px,#787878 312px,#808080 331px,#868686 359px,#898989 394px,#898989 426px,#878787 459px,#838383 493px,#7d7d7d 529px,#828282 727px,#848484 969px)"></i>
<i style="top:39px;background:linear-gradient(90deg,#6e6e6e 296px,#747474 300px,#797979 306px,#7e7e7e 315px,#828282 326px,#888888 355px,#8b8b8b 392px,#8b8b8b 425px,#898989 461px,#848484 497px,#7e7e7e 534px,#828282 731px,#848484 969px)"></i>
<i style="top:42px;background:linear-gradient(90deg,#6e6e6e 290px,#747474 294px,#7a7a7a 300px,#7f7f7f 309px,#838383 321px,#898989 351px,#8d8d8d 389px,#8d8d8d 424px,#8a8a8a 462px,#858585 500px,#7e7e7e 539px,#838383 734px,#848484 969px)"></i>
<i style="top:45px;background:linear-gradient(90deg,#6d6d6d 284px,#707070 285px,#737373 287px,#797979 293px,#7f7f7f 302px,#848484 314px,#8b8b8b 346px,#8e8e8e 386px,#8e8e8e 423px,#8b8b8b 463px,#868686 503px,#7f7f7f 544px,#838383 738px,#848484 969px)"></i>
<i style="top:48px;background:linear-gradient(90deg,#6e6e6e 279px,#737373 281px,#767676 283px,#7b7b7b 289px,#818181 299px,#858585 311px,#8c8c8c 344px,#909090 385px,#8f8f8f 424px,#8c8c8c 466px,#878787 508px,#7f7f7f 548px,#838383 741px,#848484 969px)"></i>
<i style="top:51px;background:linear-gradient(90deg,#6f6f6f 274px,#767676 278px,#7c7c7c 285px,#828282 295px,#878787 308px,#8e8e8e 342px,#919191 384px,#919191 424px,#8e8e8e 467px,#888888 510px,#808080 553px,#838383 744px,#848484 969px)"></i>
<i style="top:54px;background:linear-gradient(90deg,#707070 269px,#777777 273px,#7d7d7d 280px,#838383 290px,#888888 304px,#8f8f8f 339px,#929292 382px,#929292 424px,#8f8f8f 469px,#898989 513px,#808080 557px,#838383 747px,#848484 969px)"></i>
<i style="top:57px;background:linear-gradient(90deg,#707070 264px,#747474 266px,#777777 268px,#7e7e7e 275px,#838383 285px,#898989 299px,#909090 335px,#949494 380px,#939393 424px,#909090 470px,#898989 516px,#808080 561px,#838383 750px,#848484 969px)"></i>
<i style="top:60px;background:linear-gradient(90deg,#6f6f6f 259px,#727272 260px,#767676 262px,#7d7d7d 269px,#848484 280px,#898989 294px,#8e8e8e 311px,#919191 331px,#959595 377px,#959595 422px,#919191 470px,#8a8a8a 519px,#818181 565px,#838383 753px,#848484 969px)"></i>
<i style="top:63px;background:linear-gradient(90deg,#717171 255px,#797979 259px,#808080 267px,#868686 278px,#8b8b8b 293px,#939393 330px,#969696 377px,#969696 424px,#929292 473px,#8b8b8b 522px,#818181 569px,#848484 756px,#848484 969px)"></i>
<i style="top:66px;background:linear-gradient(90deg,#707070 250px,#737373 251px,#787878 254px,#7f7f7f 261px,#868686 272px,#8b8b8b 286px,#909090 304px,#949494 325px,#989898 374px,#979797 422px,#939393 473px,#8c8c8c 524px,#818181 573px,#848484 758px,#848484 969px)"></i>
<i style="top:69px;background:linear-gradient(90deg,#717171 246px,#767676 248px,#797979 250px,#818181 258px,#878787 269px,#8d8d8d 284px,#919191 302px,#959595 323px,#999999 373px,#989898 422px,#949494 474px,#8c8c8c 526px,#828282 577px,#848484 761px,#848484 969px)"></i>
<i style="top:72px;background:linear-gradient(90deg,#727272 242px,#777777 244px,#7b7b7b 247px,#828282 255px,#898989 267px,#8e8e8e 282px,#939393 301px,#969696 322px,#9a9a9a 372px,#999999 423px,#959595 476px,#8d8d8d 529px,#828282 580px,#848484 764px,#848484 969px)"></i>
<i style="top:75px;background:linear-gradient(90deg,#737373 238px,#777777 240px,#7c7c7c 243px,#838383 251px,#898989 263px,#8f8f8f 279px,#949494 298px,#979797 320px,#9b9b9b 371px,#9a9a9a 423px,#969696 477px,#8e8e8e 531px,#828282 584px,#848484 766px,#848484 969px)"></i>
<i style="top:78px;background:linear-gradient(90deg,#737373 234px,#787878 236px,#7c7c7c 239px,#838383 247px,#8a8a8a 259px,#909090 275px,#949494 294px,#989898 317px,#9c9c9c 370px,#9b9b9b 423px,#969696 479px,#8e8e8e 535px,#828282 587px,#848484 768px,#848484 969px)"></i>
<i style="top:81px;background:linear-gradient(90deg,#737373 230px,#787878 232px,#7b7b7b 234px,#838383 243px,#8b8b8b 256px,#919191 272px,#969696 292px,#999999 315px,#9d9d9d 368px,#9c9c9c 422px,#979797 479px,#8f8f8f 535px,#828282 591px,#848484 770px,#848484 969px)"></i>
<i style="top:84px;background:linear-gradient(90deg,#727272 226px,#767676 227px,#7b7b7b 230px,#838383 238px,#8a8a8a 250px,#919191 267px,#969696 287px,#9a9a9a 311px,#9e9e9e 366px,#9d9d9d 421px,#989898 480px,#8f8f8f 538px,#838383 594px,#848484 772px,#848484 969px)"></i>
<i style="top:87px;background:linear-gradient(90deg,#707070 222px,#757575 223px,#797979 225px,#828282 233px,#8a8a8a 245px,#919191 261px,#969696 281px,#9a9a9a 305px,#9d9d9d 332px,#9f9f9f 362px,#9e9e9e 419px,#999999 480px,#909090 540px,#838383 597px,#848484 774px,#848484 969px)"></i>
<i style="top:90px;background:linear-gradient(90deg,#747474 219px,#797979 221px,#7d7d7d 224px,#868686 233px,#8d8d8d 246px,#939393 263px,#989898 284px,#9c9c9c 308px,#a0a0a0 364px,#9f9f9f 422px,#9a9a9a 483px,#909090 543px,#838383 600px,#848484 776px,#848484 969px)"></i>
<i style="top:93px;background:linear-gradient(90deg,#727272 215px,#767676 216px,#7c7c7c 219px,#848484 227px,#8c8c8c 240px,#939393 257px,#989898 278px,#9d9d9d 303px,#a0a0a0 331px,#a1a1a1 361px,#a0a0a0 420px,#9a9a9a 483px,#919191 545px,#838383 603px,#848484 969px)"></i>
<i style="top:96px;background:linear-gradient(90deg,#747474 212px,#797979 214px,#7e7e7e 217px,#868686 226px,#8e8e8e 239px,#949494 257px,#9a9a9a 278px,#9e9e9e 303px,#a1a1a1 331px,#a2a2a2 362px,#a1a1a1 422px,#9b9b9b 485px,#919191 548px,#838383 606px,#838383 969px)"></i>
<i style="top:99px;background:linear-gradient(90deg,#767676 209px,#7a7a7a 211px,#7f7f7f 214px,#888888 224px,#8f8f8f 238px,#969696 256px,#9b9b9b 278px,#9f9f9f 303px,#a3a3a3 362px,#a1a1a1 423px,#9b9b9b 487px,#919191 550px,#838383 609px,#838383 969px)"></i>
<i style="top:102px;background:linear-gradient(90deg,#737373 205px,#777777 206px,#7d7d7d 209px,#868686 218px,#8e8e8e 231px,#959595 249px,#9b9b9b 271px,#9f9f9f 297px,#a2a2a2 326px,#a4a4a4 358px,#a2a2a2 420px,#9c9c9c 486px,#929292 551px,#838383 612px,#838383 969px)"></i>
<i style="top:105px;background:linear-gradient(90deg,#747474 202px,#7a7a7a 204px,#7f7f7f 207px,#878787 216px,#8f8f8f 230px,#969696 248px,#9c9c9c 271px,#a0a0a0 297px,#a3a3a3 326px,#a4a4a4 358px,#a3a3a3 421px,#9d9d9d 488px,#929292 553px,#848484 615px,#838383 969px)"></i>
<i style="top:108px;background:linear-gradient(90deg,#757575 199px,#7b7b7b 201px,#7f7f7f 204px,#888888 213px,#909090 227px,#979797 246px,#9d9d9d 269px,#a1a1a1 295px,#a4a4a4 325px,#a5a5a5 357px,#a4a4a4 421px,#9e9e9e 488px,#939393 554px,#848484 618px,#838383 969px)"></i>
<i style="top:111px;background:linear-gradient(90deg,#757575 196px,#7b7b7b 198px,#808080 201px,#898989 211px,#919191 225px,#989898 244px,#9d9d9d 267px,#a2a2a2 294px,#a5a5a5 324px,#a6a6a6 357px,#a5a5a5 422px,#9e9e9e 490px,#939393 556px,#848484 621px,#838383 969px)"></i>
<i style="top:114px;background:linear-gradient(90deg,#767676 193px,#7b7b7b 195px,#808080 198px,#898989 208px,#929292 223px,#999999 242px,#9e9e9e 266px,#a3a3a3 293px,#a6a6a6 323px,#a7a7a7 356px,#a5a5a5 422px,#9f9f9f 491px,#939393 559px,#848484 623px,#838383 969px)"></i>
<i style="top:117px;background:linear-gradient(90deg,#767676 190px,#7b7b7b 192px,#808080 195px,#8a8a8a 205px,#929292 220px,#999999 239px,#9f9f9f 263px,#a3a3a3 290px,#a6a6a6 321px,#a8a8a8 355px,#a6a6a6 422px,#9f9f9f 492px,#949494 561px,#848484 626px,#838383 969px)"></i>
<i style="top:120px;background:linear-gradient(90deg,#757575 187px,#7b7b7b 189px,#808080 192px,#898989 201px,#929292 216px,#999999 236px,#9f9f9f 260px,#a4a4a4 288px,#a7a7a7 319px,#a8a8a8 353px,#a7a7a7 421px,#a0a0a0 492px,#949494 563px,#848484 628px,#838383 969px)"></i>
<i style="top:123px;background:linear-gradient(90deg,#747474 184px,#797979 185px,#7f7f7f 188px,#848484 192px,#898989 198px,#929292 213px,#999999 232px,#a0a0a0 256px,#a4a4a4 284px,#a8a8a8 316px,#a9a9a9 351px,#a7a7a7 420px,#a0a0a0 493px,#949494 564px,#848484 631px,#838383 969px)"></i>
<i style="top:126px;background:linear-gradient(90deg,#787878 182px,#7d7d7d 184px,#838383 188px,#8c8c8c 199px,#959595 215px,#9c9c9c 235px,#a1a1a1 260px,#a6a6a6 288px,#a9a9a9 320px,#aaaaaa 354px,#a8a8a8 423px,#a1a1a1 496px,#949494 567px,#848484 633px,#838383 969px)"></i>
<i style="top:129px;background:linear-gradient(90deg,#777777 179px,#7c7c7c 181px,#818181 184px,#878787 189px,#8c8c8c 195px,#949494 211px,#9c9c9c 231px,#a2a2a2 256px,#a6a6a6 285px,#a9a9a9 317px,#aaaaaa 352px,#a9a9a9 422px,#a1a1a1 496px,#959595 568px,#848484 636px,#828282 969px)"></i>
<i style="top:132px;background:linear-gradient(90deg,#757575 176px,#7c7c7c 178px,#818181 181px,#8b8b8b 191px,#949494 206px,#9b9b9b 226px,#a2a2a2 251px,#a6a6a6 280px,#aaaaaa 313px,#ababab 349px,#a9a9a9 421px,#a2a2a2 496px,#959595 570px,#848484 638px,#828282 969px)"></i>
<i style="top:135px;background:linear-gradient(90deg,#787878 174px,#7d7d7d 176px,#838383 180px,#8d8d8d 191px,#969696 207px,#9d9d9d 228px,#a3a3a3 253px,#a8a8a8 283px,#ababab 316px,#acacac 351px,#aaaaaa 423px,#a2a2a2 498px,#969696 571px,#848484 641px,#828282 969px)"></i>
<i style="top:138px;background:linear-gradient(90deg,#777777 171px,#7d7d7d 173px,#828282 176px,#878787 181px,#8c8c8c 187px,#959595 203px,#9d9d9d 224px,#a3a3a3 249px,#a8a8a8 279px,#ababab 312px,#acacac 349px,#aaaaaa 422px,#a3a3a3 498px,#969696 573px,#848484 643px,#828282 969px)"></i>
<i style="top:141px;background:linear-gradient(90deg,#797979 169px,#7e7e7e 171px,#848484 175px,#8e8e8e 186px,#979797 203px,#9e9e9e 224px,#a4a4a4 250px,#a9a9a9 280px,#acacac 314px,#adadad 350px,#ababab 423px,#a3a3a3 500px,#969696 576px,#848484 645px,#828282 969px)"></i>
<i style="top:144px;background:linear-gradient(90deg,#777777 166px,#7d7d7d 168px,#828282 171px,#888888 176px,#8d8d8d 182px,#969696 198px,#9e9e9e 219px,#a4a4a4 245px,#a9a9a9 276px,#acacac 310px,#aeaeae 347px,#acacac 421px,#a4a4a4 499px,#979797 575px,#848484 648px,#828282 969px)"></i>
<i style="top:147px;background:linear-gradient(90deg,#797979 164px,#7e7e7e 166px,#848484 170px,#8e8e8e 181px,#979797 198px,#9f9f9f 220px,#a5a5a5 246px,#aaaaaa 277px,#adadad 311px,#aeaeae 348px,#acacac 423px,#a4a4a4 501px,#969696 578px,#848484 650px,#828282 969px)"></i>
<i style="top:150px;background:linear-gradient(90deg,#757575 161px,#7a7a7a 162px,#808080 165px,#878787 170px,#8c8c8c 176px,#969696 192px,#9e9e9e 213px,#a5a5a5 240px,#aaaaaa 271px,#adadad 306px,#afafaf 344px,#adadad 420px,#a5a5a5 500px,#979797 579px,#848484 652px,#828282 969px)"></i>
<i style="top:153px;background:linear-gradient(90deg,#777777 159px,#7d7d7d 161px,#838383 164px,#888888 169px,#8d8d8d 175px,#979797 192px,#9f9f9f 214px,#a6a6a6 241px,#ababab 272px,#aeaeae 307px,#afafaf 346px,#adadad 423px,#a5a5a5 503px,#979797 582px,#848484 654px,#818181 969px)"></i>
<i style="top:156px;background:linear-gradient(90deg,#797979 157px,#7e7e7e 159px,#848484 163px,#8f8f8f 174px,#989898 191px,#a0a0a0 214px,#a7a7a7 241px,#acacac 273px,#afafaf 308px,#b0b0b0 346px,#aeaeae 423px,#a5a5a5 504px,#979797 583px,#8e8e8e 620px,#848484 656px,#818181 969px)"></i>
<i style="top:159px;background:linear-gradient(90deg,#7a7a7a 155px,#7f7f7f 157px,#858585 161px,#909090 173px,#999999 190px,#a1a1a1 213px,#a7a7a7 240px,#acacac 272px,#afafaf 308px,#b0b0b0 347px,#aeaeae 425px,#a5a5a5 506px,#979797 586px,#8e8e8e 623px,#848484 658px,#818181 969px)"></i>
<i style="top:162px;background:linear-gradient(90deg,#757575 152px,#7a7a7a 153px,#818181 156px,#888888 161px,#8d8d8d 167px,#979797 183px,#9f9f9f 205px,#a7a7a7 233px,#acacac 265px,#afafaf 301px,#b1b1b1 341px,#afafaf 420px,#a6a6a6 503px,#989898 585px,#8e8e8e 624px,#848484 660px,#818181 969px)"></i>
<i style="top:165px;background:linear-gradient(90deg,#767676 150px,#7b7b7b 151px,#7e7e7e 152px,#838383 155px,#898989 160px,#8e8e8e 166px,#989898 183px,#a0a0a0 205px,#a7a7a7 233px,#adadad 265px,#b0b0b0 302px,#b1b1b1 342px,#b1b1b1 381px,#afafaf 422px,#a6a6a6 505px,#989898 587px,#8e8e8e 626px,#848484 662px,#818181 969px)"></i>
<i style="top:168px;background:linear-gradient(90deg,#777777 148px,#7e7e7e 150px,#838383 153px,#898989 158px,#8e8e8e 164px,#989898 181px,#a1a1a1 204px,#a8a8a8 232px,#adadad 265px,#b1b1b1 302px,#b2b2b2 342px,#b2b2b2 381px,#b0b0b0 422px,#a7a7a7 506px,#989898 589px,#8e8e8e 628px,#848484 664px,#818181 969px)"></i>
<i style="top:171px;background:linear-gradient(90deg,#787878 146px,#7e7e7e 148px,#838383 151px,#898989 156px,#8f8f8f 163px,#999999 180px,#a2a2a2 203px,#a8a8a8 231px,#aeaeae 264px,#b1b1b1 301px,#b2b2b2 342px,#b2b2b2 382px,#b0b0b0 423px,#a7a7a7 507px,#a0a0a0 550px,#989898 591px,#8e8e8e 630px,#848484 666px,#818181 969px)"></i>
<i style="top:174px;background:linear-gradient(90deg,#787878 144px,#7e7e7e 146px,#848484 149px,#8a8a8a 154px,#8f8f8f 161px,#9a9a9a 179px,#a2a2a2 202px,#a9a9a9 231px,#aeaeae 264px,#b2b2b2 301px,#b3b3b3 342px,#b3b3b3 382px,#b0b0b0 423px,#a7a7a7 508px,#a0a0a0 551px,#989898 592px,#8e8e8e 631px,#848484 668px,#808080 969px)"></i>
<i style="top:177px;background:linear-gradient(90deg,#787878 142px,#7e7e7e 144px,#848484 147px,#8a8a8a 152px,#909090 159px,#9a9a9a 177px,#a2a2a2 200px,#a9a9a9 229px,#afafaf 263px,#b2b2b2 301px,#b3b3b3 342px,#b3b3b3 382px,#b1b1b1 423px,#a8a8a8 508px,#a1a1a1 551px,#989898 593px,#8f8f8f 632px,#848484 670px,#808080 969px)"></i>
<i style="top:180px;background:linear-gradient(90deg,#777777 140px,#7c7c7c 141px,#7e7e7e 142px,#848484 145px,#8a8a8a 150px,#909090 157px,#9a9a9a 175px,#a3a3a3 198px,#aaaaaa 227px,#afafaf 261px,#b2b2b2 299px,#b4b4b4 341px,#b3b3b3 382px,#b1b1b1 423px,#a8a8a8 508px,#a1a1a1 552px,#989898 594px,#8f8f8f 633px,#848484 672px,#808080 969px)"></i>
<i style="top:183px;background:linear-gradient(90deg,#767676 138px,#7b7b7b 139px,#7e7e7e 140px,#848484 143px,#8a8a8a 148px,#8f8f8f 154px,#9a9a9a 172px,#a3a3a3 196px,#aaaaaa 225px,#afafaf 259px,#b3b3b3 298px,#b4b4b4 340px,#b4b4b4 381px,#b2b2b2 423px,#aeaeae 465px,#a8a8a8 509px,#a1a1a1 553px,#999999 595px,#8f8f8f 634px,#838383 674px,#808080 969px)"></i>
<i style="top:186px;background:linear-gradient(90deg,#757575 136px,#7b7b7b 137px,#828282 140px,#898989 145px,#8e8e8e 151px,#999999 168px,#a2a2a2 192px,#aaaaaa 221px,#afafaf 256px,#b3b3b3 295px,#b5b5b5 338px,#b4b4b4 379px,#b2b2b2 421px,#afafaf 464px,#a9a9a9 508px,#a1a1a1 553px,#999999 596px,#8f8f8f 635px,#838383 676px,#808080 969px)"></i>
<i style="top:189px;background:linear-gradient(90deg,#7a7a7a 135px,#808080 137px,#868686 141px,#8d8d8d 147px,#929292 154px,#9c9c9c 173px,#a5a5a5 198px,#acacac 228px,#b1b1b1 263px,#b4b4b4 302px,#b5b5b5 345px,#b5b5b5 386px,#b2b2b2 427px,#aeaeae 469px,#a9a9a9 513px,#a1a1a1 557px,#989898 600px,#8e8e8e 640px,#838383 677px,#808080 969px)"></i>
<i style="top:192px;background:linear-gradient(90deg,#7a7a7a 133px,#7f7f7f 135px,#868686 139px,#8c8c8c 145px,#929292 152px,#9c9c9c 171px,#a5a5a5 196px,#acacac 226px,#b1b1b1 261px,#b4b4b4 301px,#b6b6b6 344px,#b5b5b5 386px,#b3b3b3 427px,#afafaf 469px,#a9a9a9 513px,#a1a1a1 558px,#989898 601px,#8e8e8e 641px,#838383 679px,#7f7f7f 969px)"></i>
<i style="top:195px;background:linear-gradient(90deg,#787878 131px,#7f7f7f 133px,#868686 137px,#8b8b8b 142px,#919191 149px,#9c9c9c 168px,#a5a5a5 193px,#acacac 223px,#b1b1b1 259px,#b5b5b5 299px,#b6b6b6 343px,#b6b6b6 385px,#b3b3b3 426px,#afafaf 468px,#a9a9a9 512px,#a2a2a2 558px,#999999 601px,#8f8f8f 641px,#838383 681px,#7f7f7f 969px)"></i>
<i style="top:198px;background:linear-gradient(90deg,#767676 129px,#7b7b7b 130px,#7e7e7e 131px,#848484 134px,#8a8a8a 139px,#909090 146px,#9b9b9b 164px,#a4a4a4 189px,#acacac 219px,#b1b1b1 255px,#b5b5b5 295px,#b6b6b6 340px,#b6b6b6 382px,#b4b4b4 424px,#b0b0b0 466px,#aaaaaa 511px,#a2a2a2 557px,#999999 601px,#8f8f8f 642px,#838383 683px,#7f7f7f 969px)"></i>
<i style="top:201px;background:linear-gradient(90deg,#7a7a7a 128px,#828282 131px,#888888 135px,#8e8e8e 141px,#939393 148px,#9e9e9e 168px,#a6a6a6 193px,#adadad 224px,#b2b2b2 260px,#b6b6b6 301px,#b7b7b7 346px,#b6b6b6 387px,#b4b4b4 428px,#b0b0b0 470px,#aaaaaa 515px,#a2a2a2 561px,#999999 605px,#8e8e8e 646px,#838383 684px,#7f7f7f 969px)"></i>
<i style="top:204px;background:linear-gradient(90deg,#797979 126px,#7f7f7f 128px,#868686 132px,#8d8d8d 138px,#929292 145px,#9d9d9d 164px,#a6a6a6 190px,#adadad 221px,#b3b3b3 258px,#b6b6b6 299px,#b7b7b7 345px,#b7b7b7 387px,#b4b4b4 428px,#b0b0b0 470px,#aaaaaa 515px,#a2a2a2 562px,#999999 606px,#8e8e8e 647px,#838383 686px,#7f7f7f 969px)"></i>
<i style="top:207px;background:linear-gradient(90deg,#767676 124px,#7b7b7b 125px,#838383 128px,#898989 133px,#909090 140px,#9b9b9b 159px,#a5a5a5 185px,#adadad 216px,#b3b3b3 253px,#b6b6b6 295px,#b8b8b8 341px,#b7b7b7 383px,#b5b5b5 424px,#b1b1b1 466px,#ababab 512px,#a3a3a3 560px,#999999 605px,#8f8f8f 646px,#838383 688px,#7f7f7f 969px)"></i>
<i style="top:210px;background:linear-gradient(90deg,#7a7a7a 123px,#7d7d7d 124px,#828282 126px,#888888 130px,#8e8e8e 136px,#939393 143px,#9e9e9e 163px,#a7a7a7 190px,#aeaeae 222px,#b4b4b4 259px,#b7b7b7 301px,#b8b8b8 348px,#b7b7b7 390px,#b5b5b5 430px,#b1b1b1 471px,#aaaaaa 517px,#a2a2a2 565px,#999999 609px,#8e8e8e 650px,#838383 689px,#7e7e7e 969px)"></i>
<i style="top:213px;background:linear-gradient(90deg,#777777 121px,#7c7c7c 122px,#7f7f7f 123px,#858585 126px,#8c8c8c 132px,#929292 139px,#9d9d9d 159px,#a7a7a7 185px,#aeaeae 217px,#b3b3b3 254px,#b7b7b7 297px,#b8b8b8 345px,#b8b8b8 387px,#b6b6b6 427px,#b2b2b2 468px,#ababab 514px,#a3a3a3 563px,#999999 608px,#8f8f8f 650px,#828282 691px,#7e7e7e 969px)"></i>
<i style="top:216px;background:linear-gradient(90deg,#7a7a7a 120px,#828282 123px,#888888 127px,#8e8e8e 133px,#949494 141px,#9f9f9f 162px,#a8a8a8 189px,#afafaf 221px,#b4b4b4 259px,#b8b8b8 303px,#b9b9b9 351px,#b8b8b8 392px,#b6b6b6 431px,#b2b2b2 472px,#ababab 518px,#a2a2a2 566px,#999999 611px,#8e8e8e 653px,#828282 692px,#7e7e7e 969px)"></i>
<i style="top:219px;background:linear-gradient(90deg,#777777 118px,#7c7c7c 119px,#7f7f7f 120px,#868686 124px,#8d8d8d 130px,#939393 137px,#9e9e9e 157px,#a7a7a7 184px,#afafaf 217px,#b4b4b4 255px,#b8b8b8 299px,#b9b9b9 349px,#b9b9b9 390px,#b6b6b6 429px,#b2b2b2 470px,#acacac 516px,#a3a3a3 565px,#999999 611px,#8f8f8f 653px,#828282 694px,#7e7e7e 969px)"></i>
<i style="top:222px;background:linear-gradient(90deg,#7a7a7a 117px,#7e7e7e 118px,#828282 120px,#888888 124px,#8e8e8e 130px,#949494 138px,#9f9f9f 159px,#a9a9a9 187px,#b0b0b0 220px,#b5b5b5 259px,#b8b8b8 304px,#bababa 354px,#b9b9b9 395px,#b7b7b7 433px,#b2b2b2 473px,#ababab 520px,#a2a2a2 569px,#999999 614px,#8e8e8e 656px,#828282 695px,#7d7d7d 969px)"></i>
<i style="top:225px;background:linear-gradient(90deg,#767676 115px,#7c7c7c 116px,#7f7f7f 117px,#858585 120px,#8c8c8c 126px,#929292 133px,#9e9e9e 153px,#a8a8a8 181px,#afafaf 214px,#b5b5b5 253px,#b9b9b9 299px,#bababa 351px,#bababa 391px,#b7b7b7 429px,#b3b3b3 469px,#acacac 516px,#a3a3a3 567px,#999999 614px,#8e8e8e 656px,#828282 697px,#7d7d7d 969px)"></i>
<i style="top:228px;background:linear-gradient(90deg,#797979 114px,#808080 116px,#888888 121px,#8e8e8e 127px,#959595 135px,#a0a0a0 157px,#a9a9a9 185px,#b1b1b1 219px,#b6b6b6 258px,#b9b9b9 305px,#bbbbbb 357px,#bababa 397px,#b7b7b7 434px,#b3b3b3 474px,#acacac 521px,#a2a2a2 572px,#999999 617px,#8e8e8e 659px,#828282 698px,#7d7d7d 969px)"></i>
<i style="top:231px;background:linear-gradient(90deg,#7b7b7b 113px,#838383 116px,#888888 120px,#909090 127px,#959595 135px,#a1a1a1 157px,#aaaaaa 186px,#b1b1b1 220px,#b6b6b6 260px,#bababa 308px,#bbbbbb 361px,#bababa 399px,#b8b8b8 436px,#acacac 523px,#a2a2a2 573px,#999999 618px,#8e8e8e 659px,#828282 700px,#7d7d7d 969px)"></i>
<i style="top:234px;background:linear-gradient(90deg,#777777 111px,#7c7c7c 112px,#7f7f7f 113px,#868686 117px,#8d8d8d 123px,#949494 131px,#9f9f9f 152px,#a9a9a9 181px,#b1b1b1 216px,#b6b6b6 256px,#bababa 305px,#bbbbbb 359px,#bbbbbb 398px,#b8b8b8 434px,#b4b4b4 473px,#acacac 520px,#a3a3a3 573px,#999999 619px,#8e8e8e 662px,#818181 701px,#7d7d7d 969px)"></i>
<i style="top:237px;background:linear-gradient(90deg,#797979 110px,#808080 112px,#888888 117px,#8e8e8e 123px,#959595 131px,#a0a0a0 153px,#aaaaaa 183px,#b2b2b2 218px,#b7b7b7 258px,#bababa 309px,#bcbcbc 364px,#bbbbbb 401px,#b9b9b9 437px,#acacac 524px,#a2a2a2 576px,#999999 621px,#8e8e8e 662px,#818181 703px,#7c7c7c 969px)"></i>
<i style="top:240px;background:linear-gradient(90deg,#7b7b7b 109px,#828282 112px,#8a8a8a 117px,#919191 124px,#969696 132px,#a2a2a2 155px,#ababab 185px,#b2b2b2 220px,#b7b7b7 261px,#bbbbbb 313px,#bcbcbc 368px,#bbbbbb 404px,#b9b9b9 439px,#acacac 527px,#989898 624px,#8d8d8d 665px,#818181 704px,#7c7c7c 969px)"></i>
<i style="top:243px;background:linear-gradient(90deg,#7c7c7c 108px,#838383 111px,#8a8a8a 116px,#919191 123px,#979797 132px,#a2a2a2 155px,#acacac 185px,#b3b3b3 220px,#b8b8b8 262px,#bbbbbb 316px,#bdbdbd 371px,#bcbcbc 407px,#b9b9b9 441px,#acacac 530px,#989898 626px,#8d8d8d 667px,#818181 705px,#7c7c7c 969px)"></i>
<i style="top:246px;background:linear-gradient(90deg,#787878 106px,#7c7c7c 107px,#7f7f7f 108px,#868686 112px,#8d8d8d 118px,#959595 127px,#a1a1a1 150px,#ababab 180px,#b2b2b2 215px,#b8b8b8 257px,#bbbbbb 312px,#bdbdbd 369px,#bdbdbd 404px,#bababa 438px,#adadad 525px,#989898 625px,#8d8d8d 666px,#818181 707px,#7c7c7c 969px)"></i>
<i style="top:249px;background:linear-gradient(90deg,#797979 105px,#808080 107px,#888888 112px,#8f8f8f 119px,#969696 127px,#a1a1a1 150px,#ababab 181px,#b3b3b3 216px,#b8b8b8 258px,#bcbcbc 316px,#bebebe 373px,#bdbdbd 407px,#bababa 441px,#acacac 529px,#989898 628px,#8d8d8d 669px,#818181 708px,#7b7b7b 969px)"></i>
<i style="top:252px;background:linear-gradient(90deg,#7a7a7a 104px,#7d7d7d 105px,#828282 107px,#888888 111px,#909090 118px,#969696 127px,#a2a2a2 150px,#acacac 181px,#b3b3b3 217px,#b8b8b8 259px,#bcbcbc 320px,#bebebe 376px,#bdbdbd 410px,#bababa 443px,#acacac 532px,#979797 630px,#8c8c8c 671px,#808080 709px,#7b7b7b 969px)"></i>
<i style="top:255px;background:linear-gradient(90deg,#7a7a7a 103px,#7e7e7e 104px,#828282 106px,#8a8a8a 111px,#919191 118px,#979797 127px,#a3a3a3 151px,#acacac 182px,#b4b4b4 218px,#b9b9b9 260px,#bdbdbd 324px,#bfbfbf 378px,#bebebe 411px,#bbbbbb 444px,#acacac 533px,#979797 631px,#8d8d8d 671px,#808080 711px,#7b7b7b 969px)"></i>
<i style="top:258px;background:linear-gradient(90deg,#7b7b7b 102px,#838383 105px,#8a8a8a 110px,#919191 117px,#979797 126px,#a3a3a3 150px,#adadad 181px,#b4b4b4 217px,#b9b9b9 259px,#bebebe 327px,#bfbfbf 380px,#bebebe 413px,#bbbbbb 445px,#acacac 535px,#979797 633px,#8c8c8c 673px,#808080 712px,#7b7b7b 969px)"></i>
<i style="top:261px;background:linear-gradient(90deg,#7b7b7b 101px,#838383 104px,#8a8a8a 109px,#919191 116px,#979797 125px,#a3a3a3 149px,#adadad 181px,#b4b4b4 217px,#b9b9b9 259px,#bebebe 331px,#c0c0c0 382px,#bfbfbf 414px,#bcbcbc 446px,#acacac 538px,#979797 635px,#8c8c8c 676px,#808080 713px,#7b7b7b 969px)"></i>
<i style="top:264px;background:linear-gradient(90deg,#7b7b7b 100px,#838383 103px,#8a8a8a 108px,#919191 115px,#989898 125px,#a3a3a3 149px,#adadad 181px,#b4b4b4 216px,#b9b9b9 258px,#bfbfbf 334px,#c0c0c0 384px,#bfbfbf 415px,#bcbcbc 447px,#ababab 541px,#969696 637px,#8c8c8c 677px,#808080 714px,#7a7a7a 969px)"></i>
<i style="top:267px;background:linear-gradient(90deg,#7b7b7b 99px,#838383 102px,#8a8a8a 107px,#919191 114px,#989898 124px,#a4a4a4 148px,#adadad 180px,#b4b4b4 215px,#b9b9b9 257px,#bfbfbf 337px,#c1c1c1 385px,#c0c0c0 416px,#bdbdbd 447px,#ababab 541px,#969696 638px,#8c8c8c 677px,#7f7f7f 716px,#7a7a7a 969px)"></i>
<i style="top:270px;background:linear-gradient(90deg,#7b7b7b 98px,#838383 101px,#8a8a8a 106px,#919191 113px,#989898 123px,#a4a4a4 147px,#adadad 179px,#b4b4b4 214px,#b9b9b9 256px,#c0c0c0 341px,#c2c2c2 387px,#c0c0c0 418px,#bdbdbd 450px,#aaaaaa 550px,#969696 642px,#8b8b8b 680px,#7f7f7f 717px,#7a7a7a 969px)"></i>
<i style="top:273px;background:linear-gradient(90deg,#7b7b7b 97px,#838383 100px,#8a8a8a 105px,#919191 112px,#989898 122px,#a4a4a4 146px,#adadad 178px,#b4b4b4 213px,#b9b9b9 254px,#c0c0c0 344px,#c2c2c2 388px,#c1c1c1 419px,#bdbdbd 451px,#a9a9a9 556px,#959595 645px,#8b8b8b 682px,#7f7f7f 718px,#797979 969px)"></i>
<i style="top:276px;background:linear-gradient(90deg,#7b7b7b 96px,#838383 99px,#8a8a8a 104px,#919191 111px,#989898 121px,#a4a4a4 145px,#adadad 177px,#b4b4b4 211px,#b9b9b9 252px,#c1c1c1 347px,#c3c3c3 389px,#c1c1c1 420px,#bebebe 452px,#a8a8a8 563px,#949494 649px,#7f7f7f 719px,#797979 969px)"></i>
<i style="top:279px;background:linear-gradient(90deg,#7b7b7b 95px,#838383 98px,#8a8a8a 103px,#919191 110px,#989898 120px,#a4a4a4 144px,#adadad 176px,#b4b4b4 210px,#b9b9b9 250px,#c2c2c2 349px,#c3c3c3 389px,#c0c0c0 437px,#b6b6b6 495px,#989898 633px,#8c8c8c 678px,#7f7f7f 720px,#797979 969px)"></i>
<i style="top:282px;background:linear-gradient(90deg,#7a7a7a 94px,#7e7e7e 95px,#828282 97px,#8a8a8a 102px,#919191 109px,#979797 118px,#a3a3a3 142px,#adadad 174px,#b4b4b4 207px,#b9b9b9 247px,#c2c2c2 352px,#c4c4c4 390px,#c1c1c1 435px,#b7b7b7 490px,#989898 634px,#8c8c8c 679px,#7e7e7e 721px,#797979 969px)"></i>
<i style="top:285px;background:linear-gradient(90deg,#797979 93px,#7d7d7d 94px,#828282 96px,#888888 100px,#909090 107px,#979797 116px,#a3a3a3 140px,#adadad 172px,#b4b4b4 205px,#b9b9b9 244px,#c3c3c3 354px,#c5c5c5 390px,#c2c2c2 434px,#b9b9b9 485px,#989898 634px,#8c8c8c 679px,#7e7e7e 723px,#787878 969px)"></i>
<i style="top:288px;background:linear-gradient(90deg,#797979 92px,#7f7f7f 94px,#888888 99px,#909090 106px,#969696 115px,#a3a3a3 139px,#adadad 170px,#b4b4b4 203px,#b9b9b9 241px,#c4c4c4 356px,#c5c5c5 390px,#c3c3c3 432px,#bababa 481px,#989898 636px,#8c8c8c 680px,#7e7e7e 724px,#787878 969px)"></i>
<i style="top:291px;background:linear-gradient(90deg,#777777 91px,#7c7c7c 92px,#7f7f7f 93px,#888888 98px,#8e8e8e 104px,#969696 113px,#a2a2a2 137px,#acacac 168px,#b3b3b3 200px,#b9b9b9 237px,#c5c5c5 357px,#c6c6c6 389px,#c4c4c4 430px,#bbbbbb 477px,#989898 637px,#8c8c8c 681px,#7e7e7e 725px,#787878 969px)"></i>
<i style="top:294px;background:linear-gradient(90deg,#757575 90px,#7b7b7b 91px,#7e7e7e 92px,#868686 96px,#8d8d8d 102px,#949494 110px,#9a9a9a 120px,#a1a1a1 133px,#acacac 164px,#b3b3b3 195px,#b8b8b8 232px,#c5c5c5 358px,#c7c7c7 388px,#c4c4c4 429px,#bcbcbc 474px,#979797 639px,#8b8b8b 683px,#7d7d7d 726px,#787878 969px)"></i>
<i style="top:297px;background:linear-gradient(90deg,#7a7a7a 90px,#828282 93px,#8a8a8a 98px,#919191 105px,#979797 114px,#a3a3a3 137px,#adadad 168px,#b3b3b3 198px,#b8b8b8 232px,#c6c6c6 360px,#c8c8c8 389px,#c5c5c5 429px,#bdbdbd 472px,#979797 641px,#8b8b8b 685px,#7d7d7d 727px,#777777 969px)"></i>
<i style="top:300px;background:linear-gradient(90deg,#797979 89px,#7d7d7d 90px,#828282 92px,#888888 96px,#909090 103px,#969696 111px,#a2a2a2 134px,#acacac 165px,#b3b3b3 194px,#b8b8b8 228px,#c7c7c7 361px,#c9c9c9 388px,#c6c6c6 427px,#bebebe 470px,#969696 643px,#8b8b8b 686px,#7d7d7d 728px,#777777 969px)"></i>
<i style="top:303px;background:linear-gradient(90deg,#777777 88px,#7c7c7c 89px,#7f7f7f 90px,#868686 94px,#8d8d8d 100px,#959595 109px,#a1a1a1 132px,#acacac 162px,#b2b2b2 190px,#b7b7b7 223px,#c1c1c1 308px,#c8c8c8 361px,#c9c9c9 386px,#c7c7c7 425px,#bfbfbf 467px,#969696 644px,#8a8a8a 687px,#7d7d7d 729px,#777777 969px)"></i>
<i style="top:306px;background:linear-gradient(90deg,#7b7b7b 88px,#828282 91px,#8a8a8a 96px,#919191 103px,#979797 111px,#a2a2a2 134px,#acacac 164px,#b2b2b2 191px,#b7b7b7 221px,#c1c1c1 307px,#c9c9c9 362px,#cacaca 386px,#c8c8c8 425px,#c0c0c0 466px,#969696 646px,#8a8a8a 688px,#7d7d7d 730px,#767676 969px)"></i>
<i style="top:309px;background:linear-gradient(90deg,#797979 87px,#7d7d7d 88px,#828282 90px,#888888 94px,#8f8f8f 101px,#969696 109px,#a1a1a1 131px,#acacac 161px,#b2b2b2 187px,#b7b7b7 216px,#c1c1c1 307px,#cacaca 363px,#cbcbcb 384px,#c8c8c8 423px,#c1c1c1 464px,#959595 648px,#8a8a8a 690px,#7c7c7c 731px,#767676 969px)"></i>
<i style="top:312px;background:linear-gradient(90deg,#777777 86px,#7c7c7c 87px,#7f7f7f 88px,#868686 92px,#8d8d8d 98px,#949494 106px,#a0a0a0 128px,#ababab 157px,#b1b1b1 182px,#b6b6b6 211px,#c1c1c1 303px,#cbcbcb 360px,#cdcdcd 382px,#c9c9c9 421px,#c2c2c2 463px,#afafaf 537px,#959595 650px,#898989 691px,#7c7c7c 732px,#767676 969px)"></i>
<i style="top:315px;background:linear-gradient(90deg,#7a7a7a 86px,#828282 89px,#888888 93px,#909090 100px,#969696 108px,#a2a2a2 130px,#ababab 158px,#b6b6b6 208px,#c1c1c1 303px,#cccccc 360px,#cecece 382px,#cacaca 420px,#c2c2c2 462px,#afafaf 537px,#949494 652px,#898989 694px,#7c7c7c 732px,#767676 969px)"></i>
<i style="top:318px;background:linear-gradient(90deg,#787878 85px,#7c7c7c 86px,#818181 88px,#888888 92px,#8e8e8e 98px,#959595 106px,#a0a0a0 127px,#aaaaaa 155px,#b5b5b5 203px,#c1c1c1 303px,#cdcdcd 359px,#cfcfcf 380px,#cbcbcb 417px,#c3c3c3 461px,#afafaf 538px,#949494 654px,#888888 695px,#7c7c7c 733px,#757575 969px)"></i>
<i style="top:321px;background:linear-gradient(90deg,#757575 84px,#7b7b7b 85px,#7e7e7e 86px,#848484 89px,#8c8c8c 95px,#929292 102px,#9e9e9e 122px,#a9a9a9 150px,#b4b4b4 197px,#c2c2c2 304px,#c5c5c5 324px,#cecece 359px,#d0d0d0 378px,#cdcdcd 411px,#c4c4c4 460px,#afafaf 538px,#939393 656px,#888888 697px,#7b7b7b 734px,#757575 969px)"></i>
<i style="top:324px;background:linear-gradient(90deg,#797979 84px,#7d7d7d 85px,#818181 87px,#888888 91px,#8e8e8e 97px,#949494 104px,#9f9f9f 124px,#aaaaaa 151px,#b0b0b0 176px,#b5b5b5 205px,#c2c2c2 307px,#d0d0d0 359px,#d2d2d2 378px,#cfcfcf 405px,#c4c4c4 460px,#afafaf 539px,#939393 658px,#878787 698px,#7b7b7b 735px,#757575 969px)"></i>
<i style="top:327px;background:linear-gradient(90deg,#767676 83px,#7b7b7b 84px,#7e7e7e 85px,#848484 88px,#8c8c8c 94px,#929292 101px,#9e9e9e 121px,#a8a8a8 147px,#afafaf 173px,#b5b5b5 202px,#c2c2c2 307px,#c7c7c7 325px,#d1d1d1 358px,#d4d4d4 376px,#d1d1d1 398px,#c5c5c5 460px,#afafaf 539px,#929292 660px,#878787 699px,#7b7b7b 736px,#747474 969px)"></i>
<i style="top:330px;background:linear-gradient(90deg,#797979 83px,#7d7d7d 84px,#818181 86px,#888888 90px,#8e8e8e 96px,#949494 103px,#9f9f9f 123px,#a9a9a9 148px,#b0b0b0 173px,#b5b5b5 202px,#c3c3c3 306px,#c7c7c7 325px,#d3d3d3 358px,#d5d5d5 376px,#d3d3d3 395px,#c5c5c5 460px,#afafaf 540px,#929292 661px,#878787 699px,#7a7a7a 737px,#747474 969px)"></i>
<i style="top:333px;background:linear-gradient(90deg,#767676 82px,#7b7b7b 83px,#7e7e7e 84px,#848484 87px,#8a8a8a 92px,#919191 99px,#9d9d9d 118px,#a7a7a7 143px,#afafaf 169px,#b4b4b4 198px,#c3c3c3 306px,#c8c8c8 325px,#d4d4d4 358px,#d7d7d7 375px,#d5d5d5 391px,#c7c7c7 452px,#afafaf 541px,#969696 647px,#898989 693px,#7a7a7a 738px,#747474 969px)"></i>
<i style="top:336px;background:linear-gradient(90deg,#797979 82px,#7f7f7f 84px,#868686 88px,#8d8d8d 94px,#939393 101px,#9e9e9e 120px,#a8a8a8 144px,#afafaf 169px,#b5b5b5 198px,#c3c3c3 305px,#c8c8c8 324px,#d6d6d6 357px,#d9d9d9 374px,#d7d7d7 389px,#c7c7c7 452px,#afafaf 541px,#949494 653px,#888888 697px,#7a7a7a 738px,#737373 969px)"></i>
<i style="top:339px;background:linear-gradient(90deg,#747474 81px,#7a7a7a 82px,#7d7d7d 83px,#838383 86px,#8a8a8a 91px,#909090 97px,#9c9c9c 115px,#a6a6a6 139px,#aeaeae 165px,#b4b4b4 195px,#c3c3c3 305px,#c9c9c9 324px,#d7d7d7 357px,#dadada 374px,#d8d8d8 390px,#c4c4c4 465px,#afafaf 540px,#939393 658px,#878787 700px,#7a7a7a 739px,#737373 969px)"></i>
<i style="top:342px;background:linear-gradient(90deg,#787878 81px,#7e7e7e 83px,#848484 86px,#8b8b8b 91px,#919191 98px,#9d9d9d 116px,#a7a7a7 140px,#aeaeae 165px,#b4b4b4 195px,#c3c3c3 304px,#c9c9c9 324px,#d9d9d9 357px,#dcdcdc 373px,#dadada 388px,#d0d0d0 418px,#c5c5c5 464px,#afafaf 542px,#929292 662px,#868686 702px,#797979 740px,#737373 969px)"></i>
<i style="top:345px;background:linear-gradient(90deg,#797979 81px,#7f7f7f 83px,#868686 87px,#8c8c8c 92px,#929292 99px,#9d9d9d 117px,#a7a7a7 140px,#aeaeae 165px,#b4b4b4 194px,#bfbfbf 283px,#c3c3c3 304px,#cacaca 324px,#dbdbdb 357px,#dddddd 365px,#dedede 373px,#dbdbdb 387px,#d0d0d0 420px,#c5c5c5 465px,#b0b0b0 538px,#919191 667px,#868686 704px,#797979 741px,#727272 969px)"></i>
<i style="top:348px;background:linear-gradient(90deg,#767676 80px,#7b7b7b 81px,#7e7e7e 82px,#838383 85px,#8a8a8a 90px,#909090 96px,#9b9b9b 113px,#a5a5a5 136px,#adadad 162px,#b4b4b4 192px,#bfbfbf 283px,#c3c3c3 304px,#cacaca 324px,#dcdcdc 357px,#dfdfdf 372px,#dddddd 385px,#d1d1d1 421px,#b0b0b0 536px,#8f8f8f 671px,#858585 707px,#797979 741px,#727272 969px)"></i>
<i style="top:351px;background:linear-gradient(90deg,#787878 80px,#7e7e7e 82px,#858585 86px,#8b8b8b 91px,#919191 97px,#9c9c9c 114px,#a5a5a5 136px,#adadad 161px,#b3b3b3 191px,#bfbfbf 282px,#c3c3c3 304px,#cbcbcb 324px,#dddddd 356px,#e0e0e0 364px,#e1e1e1 372px,#dfdfdf 384px,#d1d1d1 422px,#b1b1b1 533px,#8e8e8e 675px,#797979 742px,#727272 969px)"></i>
<i style="top:354px;background:linear-gradient(90deg,#797979 80px,#7f7f7f 82px,#868686 86px,#919191 97px,#9c9c9c 114px,#a5a5a5 136px,#adadad 161px,#b3b3b3 191px,#bfbfbf 282px,#c3c3c3 303px,#cacaca 323px,#dedede 357px,#e1e1e1 365px,#e2e2e2 372px,#dfdfdf 386px,#d0d0d0 424px,#b4b4b4 524px,#919191 665px,#858585 705px,#787878 743px,#717171 969px)"></i>
<i style="top:357px;background:linear-gradient(90deg,#757575 79px,#7a7a7a 80px,#7d7d7d 81px,#838383 84px,#898989 88px,#8f8f8f 94px,#9a9a9a 111px,#a4a4a4 133px,#acacac 159px,#b3b3b3 189px,#bfbfbf 282px,#c3c3c3 303px,#cbcbcb 323px,#dfdfdf 356px,#e2e2e2 364px,#e3e3e3 372px,#e0e0e0 385px,#d0d0d0 424px,#b4b4b4 522px,#919191 666px,#858585 706px,#787878 743px,#717171 969px)"></i>
<i style="top:360px;background:linear-gradient(90deg,#777777 79px,#7e7e7e 81px,#838383 84px,#8a8a8a 89px,#909090 95px,#9a9a9a 111px,#a4a4a4 133px,#acacac 159px,#b3b3b3 189px,#bfbfbf 281px,#c3c3c3 303px,#cbcbcb 323px,#e0e0e0 356px,#e2e2e2 364px,#e3e3e3 372px,#e1e1e1 385px,#d1d1d1 424px,#b4b4b4 521px,#919191 666px,#848484 707px,#787878 744px,#717171 969px)"></i>
<i style="top:363px;background:linear-gradient(90deg,#787878 79px,#7e7e7e 81px,#858585 85px,#919191 96px,#9b9b9b 112px,#a4a4a4 133px,#acacac 159px,#b3b3b3 189px,#bfbfbf 281px,#c3c3c3 303px,#cbcbcb 323px,#e0e0e0 356px,#e3e3e3 364px,#e4e4e4 371px,#e1e1e1 385px,#d0d0d0 425px,#b4b4b4 521px,#909090 667px,#848484 707px,#777777 745px,#707070 969px)"></i>
<i style="top:366px;background:linear-gradient(90deg,#797979 79px,#7f7f7f 81px,#858585 85px,#919191 96px,#9b9b9b 112px,#a4a4a4 133px,#acacac 159px,#b3b3b3 189px,#bfbfbf 281px,#c3c3c3 303px,#cbcbcb 323px,#e0e0e0 356px,#e3e3e3 364px,#e4e4e4 371px,#e1e1e1 385px,#d0d0d0 425px,#b4b4b4 521px,#909090 667px,#848484 708px,#777777 745px,#707070 969px)"></i>
<i style="top:369px;background:linear-gradient(90deg,#747474 78px,#797979 79px,#818181 82px,#888888 87px,#8e8e8e 93px,#999999 109px,#a3a3a3 131px,#acacac 157px,#b3b3b3 188px,#bfbfbf 281px,#c3c3c3 303px,#cbcbcb 323px,#e0e0e0 356px,#e3e3e3 364px,#e4e4e4 371px,#e1e1e1 385px,#d0d0d0 425px,#b4b4b4 521px,#909090 668px,#848484 709px,#777777 746px,#707070 969px)"></i>
<i style="top:372px;background:linear-gradient(90deg,#757575 78px,#7a7a7a 79px,#7d7d7d 80px,#838383 83px,#898989 88px,#8f8f8f 94px,#9a9a9a 110px,#a4a4a4 132px,#acacac 158px,#b2b2b2 188px,#bfbfbf 281px,#c3c3c3 303px,#cbcbcb 323px,#e0e0e0 356px,#e2e2e2 364px,#e3e3e3 371px,#e0e0e0 385px,#d0d0d0 424px,#b4b4b4 521px,#909090 667px,#848484 708px,#767676 747px,#6f6f6f 969px)"></i>
<i style="top:375px;background:linear-gradient(90deg,#767676 78px,#7d7d7d 80px,#838383 83px,#898989 88px,#8f8f8f 94px,#9a9a9a 110px,#a4a4a4 132px,#acacac 158px,#b2b2b2 188px,#bfbfbf 281px,#c3c3c3 303px,#cbcbcb 323px,#dfdfdf 356px,#e2e2e2 364px,#e2e2e2 371px,#e0e0e0 385px,#d0d0d0 424px,#b4b4b4 522px,#909090 668px,#838383 709px,#767676 747px,#6f6f6f 969px)"></i>
<i style="top:378px;background:linear-gradient(90deg,#777777 78px,#7d7d7d 80px,#848484 84px,#909090 95px,#9a9a9a 111px,#a4a4a4 133px,#acacac 159px,#b2b2b2 189px,#bebebe 281px,#c3c3c3 303px,#cacaca 323px,#dedede 356px,#e1e1e1 364px,#e1e1e1 372px,#dfdfdf 385px,#d0d0d0 424px,#b3b3b3 523px,#8f8f8f 668px,#838383 709px,#767676 748px,#6e6e6e 969px)"></i>
<i style="top:381px;background:linear-gradient(90deg,#777777 78px,#7d7d7d 80px,#848484 84px,#909090 95px,#9b9b9b 112px,#a4a4a4 134px,#acacac 160px,#b3b3b3 190px,#bebebe 281px,#c2c2c2 303px,#cacaca 323px,#dddddd 356px,#dfdfdf 364px,#e0e0e0 372px,#dedede 384px,#d0d0d0 421px,#b0b0b0 532px,#8d8d8d 678px,#828282 714px,#767676 748px,#6e6e6e 969px)"></i>
<i style="top:384px;background:linear-gradient(90deg,#787878 78px,#7d7d7d 80px,#848484 84px,#8a8a8a 89px,#919191 96px,#9b9b9b 113px,#a4a4a4 135px,#acacac 161px,#b3b3b3 191px,#bebebe 281px,#c2c2c2 303px,#c9c9c9 323px,#dbdbdb 356px,#dedede 364px,#dfdfdf 372px,#dddddd 385px,#d0d0d0 420px,#b0b0b0 535px,#8d8d8d 675px,#828282 713px,#757575 749px,#6e6e6e 969px)"></i>
<i style="top:387px;background:linear-gradient(90deg,#787878 78px,#7d7d7d 80px,#848484 84px,#8a8a8a 89px,#919191 96px,#9c9c9c 114px,#a5a5a5 137px,#acacac 162px,#b3b3b3 192px,#bebebe 281px,#c2c2c2 303px,#c9c9c9 323px,#dadada 356px,#dcdcdc 364px,#dddddd 372px,#dbdbdb 386px,#d0d0d0 419px,#c4c4c4 464px,#afafaf 538px,#8e8e8e 672px,#828282 712px,#757575 749px,#6d6d6d 969px)"></i>
<i style="top:390px;background:linear-gradient(90deg,#787878 78px,#7f7f7f 81px,#868686 85px,#919191 97px,#9c9c9c 115px,#a5a5a5 138px,#adadad 164px,#b3b3b3 193px,#bebebe 282px,#c2c2c2 303px,#c8c8c8 323px,#d8d8d8 356px,#dbdbdb 365px,#dbdbdb 373px,#d9d9d9 387px,#d0d0d0 417px,#c4c4c4 463px,#aeaeae 541px,#8f8f8f 668px,#828282 711px,#757575 750px,#6d6d6d 969px)"></i>
<i style="top:393px;background:linear-gradient(90deg,#787878 78px,#7f7f7f 81px,#868686 85px,#919191 97px,#9c9c9c 115px,#a5a5a5 139px,#adadad 165px,#b3b3b3 194px,#c1c1c1 303px,#c8c8c8 323px,#d7d7d7 356px,#dadada 373px,#d7d7d7 389px,#acacac 545px,#909090 664px,#838383 709px,#747474 750px,#6d6d6d 969px)"></i>
<i style="top:396px;background:linear-gradient(90deg,#787878 78px,#7f7f7f 81px,#858585 85px,#8c8c8c 91px,#929292 98px,#9d9d9d 117px,#a6a6a6 141px,#adadad 166px,#b3b3b3 195px,#c1c1c1 303px,#c7c7c7 323px,#d5d5d5 356px,#d7d7d7 365px,#d8d8d8 374px,#d5d5d5 391px,#c4c4c4 462px,#adadad 543px,#919191 660px,#838383 707px,#747474 751px,#6c6c6c 969px)"></i>
<i style="top:399px;background:linear-gradient(90deg,#777777 78px,#7f7f7f 81px,#858585 85px,#8c8c8c 91px,#919191 98px,#9c9c9c 117px,#a6a6a6 142px,#adadad 167px,#b3b3b3 196px,#c1c1c1 303px,#c6c6c6 323px,#d3d3d3 356px,#d6d6d6 374px,#d4d4d4 390px,#c6c6c6 451px,#adadad 541px,#929292 656px,#838383 706px,#747474 751px,#6c6c6c 969px)"></i>
<i style="top:402px;background:linear-gradient(90deg,#777777 78px,#7f7f7f 81px,#858585 85px,#8c8c8c 91px,#919191 98px,#9d9d9d 118px,#a7a7a7 144px,#adadad 169px,#b3b3b3 198px,#c1c1c1 304px,#c6c6c6 323px,#d2d2d2 357px,#d4d4d4 375px,#d2d2d2 392px,#c6c6c6 450px,#adadad 541px,#939393 652px,#848484 704px,#737373 752px,#6b6b6b 969px)"></i>
<i style="top:405px;background:linear-gradient(90deg,#777777 78px,#7f7f7f 81px,#858585 85px,#8b8b8b 91px,#929292 99px,#9d9d9d 119px,#a7a7a7 145px,#adadad 170px,#b3b3b3 199px,#c0c0c0 304px,#c5c5c5 323px,#d0d0d0 357px,#d2d2d2 376px,#d0d0d0 395px,#c5c5c5 450px,#acacac 541px,#939393 648px,#848484 703px,#737373 752px,#6b6b6b 969px)"></i>
<i style="top:408px;background:linear-gradient(90deg,#767676 78px,#7e7e7e 81px,#848484 85px,#8b8b8b 91px,#929292 99px,#9d9d9d 119px,#a7a7a7 146px,#adadad 171px,#b3b3b3 200px,#c0c0c0 304px,#c4c4c4 323px,#cecece 357px,#d1d1d1 377px,#cecece 398px,#c5c5c5 449px,#acacac 541px,#949494 644px,#848484 701px,#727272 753px,#6b6b6b 969px)"></i>
<i style="top:411px;background:linear-gradient(90deg,#757575 78px,#797979 79px,#7e7e7e 81px,#848484 85px,#8b8b8b 91px,#919191 99px,#9d9d9d 120px,#a7a7a7 147px,#adadad 172px,#b3b3b3 201px,#c0c0c0 305px,#cdcdcd 357px,#cfcfcf 378px,#cccccc 403px,#c4c4c4 449px,#acacac 541px,#959595 641px,#848484 700px,#727272 753px,#6a6a6a 969px)"></i>
<i style="top:414px;background:linear-gradient(90deg,#757575 78px,#787878 79px,#7d7d7d 81px,#848484 85px,#8a8a8a 91px,#919191 99px,#9d9d9d 120px,#a7a7a7 148px,#b2b2b2 196px,#bfbfbf 301px,#cccccc 358px,#cdcdcd 379px,#c9c9c9 418px,#c0c0c0 462px,#acacac 538px,#8e8e8e 665px,#818181 711px,#727272 753px,#6a6a6a 969px)"></i>
<i style="top:417px;background:linear-gradient(90deg,#737373 78px,#7b7b7b 80px,#838383 85px,#8a8a8a 91px,#919191 99px,#9d9d9d 121px,#a7a7a7 149px,#adadad 173px,#b2b2b2 200px,#bebebe 300px,#cacaca 358px,#cccccc 380px,#c8c8c8 420px,#c0c0c0 463px,#acacac 537px,#8e8e8e 664px,#818181 710px,#717171 754px,#696969 969px)"></i>
<i style="top:420px;background:linear-gradient(90deg,#727272 78px,#777777 79px,#7a7a7a 80px,#828282 84px,#898989 90px,#909090 98px,#9c9c9c 120px,#a7a7a7 150px,#adadad 175px,#b3b3b3 204px,#bebebe 299px,#c9c9c9 359px,#cbcbcb 382px,#c7c7c7 422px,#bfbfbf 464px,#acacac 536px,#8f8f8f 663px,#808080 711px,#717171 754px,#696969 969px)"></i>
<i style="top:423px;background:linear-gradient(90deg,#6f6f6f 78px,#767676 79px,#7c7c7c 81px,#808080 83px,#878787 89px,#8f8f8f 97px,#959595 107px,#9c9c9c 119px,#a7a7a7 149px,#adadad 176px,#b3b3b3 207px,#bebebe 304px,#c8c8c8 361px,#c9c9c9 383px,#c7c7c7 415px,#c1c1c1 449px,#ababab 541px,#979797 629px,#858585 696px,#717171 754px,#686868 969px)"></i>
<i style="top:426px;background:linear-gradient(90deg,#757575 79px,#7d7d7d 82px,#858585 87px,#8c8c8c 94px,#929292 102px,#9e9e9e 125px,#a8a8a8 156px,#aeaeae 183px,#b3b3b3 213px,#bebebe 304px,#c7c7c7 361px,#c8c8c8 386px,#c6c6c6 418px,#c0c0c0 451px,#ababab 540px,#979797 628px,#858585 695px,#707070 755px,#686868 969px)"></i>
<i style="top:429px;background:linear-gradient(90deg,#747474 79px,#787878 80px,#7c7c7c 82px,#838383 86px,#8a8a8a 93px,#919191 102px,#9e9e9e 125px,#a8a8a8 156px,#aeaeae 184px,#b4b4b4 216px,#bdbdbd 304px,#c6c6c6 361px,#c7c7c7 387px,#c5c5c5 418px,#c0c0c0 451px,#979797 626px,#858585 695px,#707070 755px,#686868 969px)"></i>
<i style="top:432px;background:linear-gradient(90deg,#727272 79px,#777777 80px,#797979 81px,#828282 86px,#898989 92px,#909090 101px,#979797 112px,#9d9d9d 125px,#a8a8a8 156px,#afafaf 186px,#b4b4b4 220px,#bdbdbd 304px,#c4c4c4 360px,#c6c6c6 389px,#c4c4c4 420px,#bfbfbf 452px,#979797 625px,#848484 695px,#707070 755px,#676767 969px)"></i>
<i style="top:435px;background:linear-gradient(90deg,#757575 80px,#7d7d7d 83px,#848484 88px,#8b8b8b 95px,#939393 105px,#9f9f9f 129px,#a9a9a9 161px,#afafaf 191px,#b4b4b4 225px,#c3c3c3 360px,#c5c5c5 391px,#c3c3c3 421px,#bebebe 453px,#979797 624px,#858585 694px,#6f6f6f 756px,#676767 969px)"></i>
<i style="top:438px;background:linear-gradient(90deg,#747474 80px,#777777 81px,#7c7c7c 83px,#848484 88px,#8b8b8b 95px,#929292 104px,#9e9e9e 129px,#a8a8a8 161px,#afafaf 192px,#b4b4b4 228px,#c2c2c2 359px,#c4c4c4 392px,#c2c2c2 422px,#bdbdbd 454px,#979797 623px,#848484 694px,#6f6f6f 756px,#666666 969px)"></i>
<i style="top:441px;background:linear-gradient(90deg,#727272 80px,#767676 81px,#797979 82px,#828282 87px,#898989 94px,#919191 103px,#979797 114px,#9d9d9d 128px,#a8a8a8 160px,#afafaf 192px,#b4b4b4 230px,#c1c1c1 358px,#c3c3c3 392px,#c1c1c1 422px,#bcbcbc 454px,#979797 621px,#848484 693px,#6e6e6e 756px,#666666 969px)"></i>
<i style="top:444px;background:linear-gradient(90deg,#757575 81px,#7c7c7c 84px,#858585 90px,#8c8c8c 97px,#939393 107px,#9f9f9f 132px,#a9a9a9 165px,#b0b0b0 198px,#b5b5b5 236px,#c1c1c1 357px,#c2c2c2 394px,#c0c0c0 424px,#bbbbbb 456px,#979797 620px,#848484 693px,#6e6e6e 756px,#656565 969px)"></i>
<i style="top:447px;background:linear-gradient(90deg,#737373 81px,#777777 82px,#7b7b7b 84px,#838383 89px,#8a8a8a 96px,#919191 105px,#9e9e9e 130px,#a8a8a8 163px,#afafaf 197px,#b4b4b4 237px,#c0c0c0 356px,#c1c1c1 393px,#bfbfbf 424px,#bababa 456px,#989898 617px,#848484 691px,#6e6e6e 757px,#656565 969px)"></i>
<i style="top:450px;background:linear-gradient(90deg,#707070 81px,#757575 82px,#787878 83px,#808080 87px,#888888 94px,#8f8f8f 103px,#969696 114px,#9c9c9c 128px,#a7a7a7 161px,#afafaf 196px,#b4b4b4 237px,#bfbfbf 353px,#c0c0c0 392px,#bebebe 423px,#bababa 456px,#989898 614px,#848484 690px,#6d6d6d 757px,#646464 969px)"></i>
<i style="top:453px;background:linear-gradient(90deg,#737373 82px,#777777 83px,#7b7b7b 85px,#838383 90px,#8a8a8a 97px,#919191 107px,#9e9e9e 133px,#a8a8a8 166px,#afafaf 201px,#b4b4b4 243px,#bebebe 353px,#bfbfbf 394px,#bdbdbd 425px,#b9b9b9 458px,#989898 614px,#848484 690px,#797979 724px,#6d6d6d 757px,#646464 969px)"></i>
<i style="top:456px;background:linear-gradient(90deg,#707070 82px,#757575 83px,#787878 84px,#818181 89px,#888888 96px,#8f8f8f 105px,#969696 116px,#9c9c9c 130px,#a7a7a7 164px,#afafaf 200px,#b4b4b4 242px,#bdbdbd 350px,#bfbfbf 392px,#bdbdbd 424px,#b8b8b8 458px,#989898 611px,#848484 689px,#797979 724px,#6d6d6d 757px,#636363 969px)"></i>
<i style="top:459px;background:linear-gradient(90deg,#737373 83px,#7b7b7b 86px,#828282 91px,#8a8a8a 99px,#919191 109px,#9e9e9e 135px,#a8a8a8 168px,#afafaf 204px,#b4b4b4 248px,#bcbcbc 350px,#bebebe 393px,#bcbcbc 425px,#b7b7b7 459px,#989898 611px,#838383 690px,#787878 725px,#6c6c6c 757px,#636363 969px)"></i>
<i style="top:462px;background:linear-gradient(90deg,#707070 83px,#757575 84px,#787878 85px,#808080 90px,#888888 97px,#909090 107px,#9c9c9c 132px,#a7a7a7 166px,#aeaeae 203px,#b4b4b4 247px,#bcbcbc 347px,#bdbdbd 392px,#bbbbbb 424px,#b6b6b6 459px,#989898 608px,#848484 688px,#787878 724px,#6c6c6c 757px,#626262 969px)"></i>
<i style="top:465px;background:linear-gradient(90deg,#727272 84px,#7a7a7a 87px,#828282 92px,#8a8a8a 100px,#919191 110px,#9d9d9d 136px,#a8a8a8 170px,#afafaf 207px,#b4b4b4 252px,#bbbbbb 346px,#bcbcbc 392px,#bababa 425px,#b5b5b5 460px,#989898 607px,#838383 688px,#787878 724px,#6b6b6b 757px,#626262 969px)"></i>
<i style="top:468px;background:linear-gradient(90deg,#6f6f6f 84px,#747474 85px,#777777 86px,#808080 91px,#878787 98px,#8f8f8f 108px,#9c9c9c 133px,#a6a6a6 167px,#aeaeae 205px,#b3b3b3 250px,#bababa 342px,#bbbbbb 390px,#bababa 424px,#b5b5b5 460px,#989898 604px,#8e8e8e 647px,#838383 687px,#777777 724px,#6b6b6b 757px,#626262 969px)"></i>
<i style="top:471px;background:linear-gradient(90deg,#717171 85px,#757575 86px,#7a7a7a 88px,#818181 93px,#898989 101px,#909090 111px,#9d9d9d 137px,#a7a7a7 171px,#aeaeae 209px,#b4b4b4 255px,#b9b9b9 342px,#bbbbbb 391px,#b9b9b9 425px,#b4b4b4 462px,#989898 603px,#848484 685px,#787878 721px,#6a6a6a 758px,#616161 969px)"></i>
<i style="top:474px;background:linear-gradient(90deg,#6d6d6d 85px,#737373 86px,#767676 87px,#7e7e7e 91px,#868686 98px,#8d8d8d 107px,#949494 118px,#9a9a9a 132px,#a5a5a5 166px,#adadad 205px,#b3b3b3 251px,#b9b9b9 336px,#bababa 388px,#b8b8b8 423px,#b3b3b3 461px,#999999 599px,#8f8f8f 643px,#848484 684px,#787878 721px,#6a6a6a 758px,#606060 969px)"></i>
<i style="top:477px;background:linear-gradient(90deg,#707070 86px,#747474 87px,#797979 89px,#818181 94px,#888888 101px,#8f8f8f 111px,#9c9c9c 137px,#a6a6a6 170px,#adadad 209px,#b3b3b3 255px,#b8b8b8 336px,#b9b9b9 388px,#b7b7b7 424px,#b2b2b2 462px,#999999 598px,#8e8e8e 643px,#838383 684px,#777777 721px,#6a6a6a 758px,#606060 969px)"></i>
<i style="top:480px;background:linear-gradient(90deg,#717171 87px,#797979 90px,#828282 96px,#898989 103px,#909090 113px,#9c9c9c 139px,#a6a6a6 173px,#adadad 212px,#b3b3b3 259px,#b8b8b8 337px,#b8b8b8 389px,#b6b6b6 425px,#b1b1b1 464px,#989898 598px,#8e8e8e 643px,#838383 684px,#777777 721px,#696969 758px,#5f5f5f 969px)"></i>
<i style="top:483px;background:linear-gradient(90deg,#6d6d6d 87px,#727272 88px,#757575 89px,#7e7e7e 94px,#868686 101px,#8d8d8d 110px,#949494 121px,#9a9a9a 135px,#a5a5a5 169px,#acacac 208px,#b2b2b2 255px,#b7b7b7 329px,#b8b8b8 385px,#b6b6b6 422px,#b1b1b1 462px,#999999 594px,#8e8e8e 640px,#838383 682px,#777777 720px,#696969 758px,#5f5f5f 969px)"></i>
<i style="top:486px;background:linear-gradient(90deg,#6f6f6f 88px,#737373 89px,#787878 91px,#808080 96px,#878787 103px,#8e8e8e 113px,#9b9b9b 139px,#a5a5a5 172px,#acacac 211px,#b2b2b2 258px,#b6b6b6 330px,#b7b7b7 386px,#b5b5b5 424px,#b0b0b0 464px,#a6a6a6 526px,#999999 594px,#8e8e8e 640px,#838383 682px,#777777 720px,#686868 758px,#5e5e5e 969px)"></i>
<i style="top:489px;background:linear-gradient(90deg,#707070 89px,#787878 92px,#808080 97px,#888888 105px,#8f8f8f 115px,#9b9b9b 141px,#a5a5a5 175px,#acacac 214px,#b2b2b2 261px,#b6b6b6 331px,#b6b6b6 386px,#b4b4b4 424px,#afafaf 465px,#a5a5a5 527px,#989898 593px,#8e8e8e 639px,#838383 681px,#767676 719px,#686868 758px,#5e5e5e 969px)"></i>
<i style="top:492px;background:linear-gradient(90deg,#6a6a6a 89px,#717171 90px,#747474 91px,#7c7c7c 95px,#838383 101px,#8b8b8b 110px,#929292 121px,#989898 135px,#a3a3a3 168px,#ababab 207px,#b1b1b1 254px,#b5b5b5 321px,#b6b6b6 380px,#b4b4b4 420px,#afafaf 461px,#a6a6a6 521px,#999999 588px,#8e8e8e 636px,#828282 680px,#757575 721px,#686868 757px,#5d5d5d 969px)"></i>
<i style="top:495px;background:linear-gradient(90deg,#6d6d6d 90px,#727272 91px,#757575 92px,#7d7d7d 97px,#858585 104px,#8c8c8c 113px,#929292 124px,#999999 138px,#a3a3a3 172px,#ababab 211px,#b1b1b1 258px,#b4b4b4 323px,#b5b5b5 381px,#b3b3b3 421px,#aeaeae 463px,#a5a5a5 524px,#989898 589px,#8e8e8e 636px,#828282 680px,#757575 721px,#676767 757px,#5d5d5d 969px)"></i>
<i style="top:498px;background:linear-gradient(90deg,#6e6e6e 91px,#727272 92px,#777777 94px,#7f7f7f 99px,#868686 106px,#8d8d8d 115px,#999999 140px,#a3a3a3 174px,#ababab 214px,#b0b0b0 260px,#b4b4b4 323px,#b4b4b4 381px,#b2b2b2 422px,#aeaeae 464px,#a4a4a4 524px,#989898 588px,#8d8d8d 636px,#828282 680px,#747474 721px,#676767 757px,#5c5c5c 969px)"></i>
<i style="top:501px;background:linear-gradient(90deg,#6f6f6f 92px,#737373 93px,#777777 95px,#7f7f7f 100px,#868686 107px,#8d8d8d 117px,#999999 143px,#a3a3a3 176px,#ababab 216px,#b0b0b0 262px,#b3b3b3 324px,#b4b4b4 381px,#b2b2b2 422px,#adadad 466px,#a3a3a3 526px,#989898 588px,#8d8d8d 636px,#818181 680px,#747474 721px,#666666 757px,#5c5c5c 969px)"></i>
<i style="top:504px;background:linear-gradient(90deg,#6f6f6f 93px,#777777 96px,#7f7f7f 101px,#868686 109px,#8d8d8d 119px,#9a9a9a 145px,#a3a3a3 178px,#ababab 218px,#b0b0b0 264px,#b3b3b3 324px,#b3b3b3 381px,#b1b1b1 423px,#acacac 467px,#a3a3a3 527px,#979797 588px,#8d8d8d 635px,#818181 679px,#747474 720px,#666666 757px,#5b5b5b 969px)"></i>
<i style="top:507px;background:linear-gradient(90deg,#707070 94px,#777777 97px,#808080 103px,#868686 110px,#8d8d8d 120px,#999999 146px,#a3a3a3 179px,#aaaaaa 219px,#afafaf 265px,#b2b2b2 324px,#b3b3b3 380px,#b0b0b0 422px,#acacac 467px,#a3a3a3 526px,#979797 586px,#8d8d8d 634px,#818181 678px,#747474 719px,#656565 757px,#5b5b5b 969px)"></i>
<i style="top:510px;background:linear-gradient(90deg,#6a6a6a 94px,#707070 95px,#737373 96px,#7a7a7a 100px,#828282 106px,#898989 115px,#909090 126px,#969696 139px,#a1a1a1 172px,#a9a9a9 211px,#aeaeae 257px,#b1b1b1 315px,#b2b2b2 374px,#b0b0b0 418px,#ababab 463px,#a3a3a3 521px,#989898 582px,#8d8d8d 631px,#818181 676px,#747474 717px,#656565 757px,#5a5a5a 969px)"></i>
<i style="top:513px;background:linear-gradient(90deg,#6b6b6b 95px,#707070 96px,#737373 97px,#7a7a7a 101px,#828282 108px,#8a8a8a 117px,#969696 141px,#a1a1a1 174px,#a8a8a8 213px,#aeaeae 259px,#b1b1b1 316px,#b1b1b1 374px,#afafaf 418px,#ababab 464px,#a2a2a2 522px,#979797 582px,#8d8d8d 631px,#818181 676px,#737373 717px,#646464 757px,#595959 969px)"></i>
<i style="top:516px;background:linear-gradient(90deg,#6b6b6b 96px,#707070 97px,#737373 98px,#7b7b7b 103px,#828282 109px,#898989 118px,#969696 142px,#a0a0a0 175px,#a8a8a8 214px,#adadad 260px,#b1b1b1 316px,#b1b1b1 373px,#afafaf 418px,#aaaaaa 464px,#a2a2a2 522px,#979797 581px,#8c8c8c 630px,#808080 676px,#737373 718px,#646464 756px,#595959 969px)"></i>
<i style="top:519px;background:linear-gradient(90deg,#6b6b6b 97px,#707070 98px,#737373 99px,#7b7b7b 104px,#828282 110px,#898989 119px,#959595 143px,#a0a0a0 176px,#a8a8a8 215px,#adadad 261px,#b0b0b0 316px,#b0b0b0 373px,#aeaeae 418px,#aaaaaa 465px,#a1a1a1 523px,#979797 581px,#8c8c8c 630px,#808080 676px,#727272 718px,#636363 756px,#585858 969px)"></i>
<i style="top:522px;background:linear-gradient(90deg,#6b6b6b 98px,#6f6f6f 99px,#727272 100px,#7b7b7b 105px,#828282 111px,#898989 120px,#959595 144px,#a0a0a0 177px,#a7a7a7 216px,#adadad 261px,#afafaf 315px,#b0b0b0 372px,#aeaeae 418px,#a9a9a9 465px,#a1a1a1 522px,#969696 580px,#8c8c8c 629px,#7f7f7f 675px,#727272 717px,#636363 756px,#585858 969px)"></i>
<i style="top:525px;background:linear-gradient(90deg,#6a6a6a 99px,#6f6f6f 100px,#727272 101px,#7b7b7b 106px,#818181 112px,#888888 121px,#959595 145px,#9f9f9f 177px,#a7a7a7 216px,#acacac 261px,#afafaf 314px,#afafaf 371px,#adadad 417px,#a8a8a8 465px,#a0a0a0 522px,#969696 579px,#8b8b8b 628px,#7f7f7f 674px,#727272 716px,#636363 756px,#575757 969px)"></i>
<i style="top:528px;background:linear-gradient(90deg,#696969 100px,#6f6f6f 101px,#717171 102px,#797979 106px,#818181 113px,#888888 122px,#949494 146px,#9e9e9e 177px,#a6a6a6 216px,#acacac 261px,#aeaeae 314px,#afafaf 370px,#acacac 417px,#a8a8a8 466px,#a0a0a0 522px,#969696 579px,#8b8b8b 629px,#7e7e7e 675px,#717171 717px,#626262 755px,#565656 969px)"></i>
<i style="top:531px;background:linear-gradient(90deg,#686868 101px,#6e6e6e 102px,#717171 103px,#787878 107px,#7f7f7f 113px,#878787 122px,#8e8e8e 133px,#949494 146px,#9e9e9e 177px,#a5a5a5 215px,#ababab 260px,#aeaeae 313px,#aeaeae 369px,#acacac 417px,#a7a7a7 466px,#9f9f9f 522px,#959595 578px,#8a8a8a 628px,#7e7e7e 674px,#717171 716px,#626262 755px,#565656 969px)"></i>
<i style="top:534px;background:linear-gradient(90deg,#666666 102px,#6d6d6d 103px,#737373 105px,#767676 107px,#7e7e7e 113px,#858585 121px,#8b8b8b 131px,#929292 144px,#9c9c9c 175px,#a5a5a5 213px,#aaaaaa 258px,#adadad 310px,#aeaeae 366px,#ababab 415px,#a7a7a7 464px,#9f9f9f 520px,#959595 576px,#8a8a8a 626px,#7e7e7e 673px,#707070 715px,#616161 755px,#555555 969px)"></i>
<i style="top:537px;background:linear-gradient(90deg,#6d6d6d 104px,#747474 107px,#7b7b7b 112px,#828282 119px,#898989 129px,#959595 154px,#9f9f9f 186px,#a6a6a6 225px,#ababab 269px,#adadad 320px,#adadad 374px,#aaaaaa 422px,#a5a5a5 471px,#9e9e9e 526px,#949494 580px,#898989 629px,#7d7d7d 675px,#6f6f6f 717px,#616161 754px,#555555 969px)"></i>
<i style="top:540px;background:linear-gradient(90deg,#6c6c6c 105px,#6f6f6f 106px,#747474 108px,#7b7b7b 113px,#828282 120px,#888888 129px,#949494 153px,#9e9e9e 185px,#a5a5a5 223px,#aaaaaa 268px,#acacac 319px,#acacac 373px,#aaaaaa 421px,#a5a5a5 471px,#9d9d9d 526px,#949494 580px,#898989 629px,#7d7d7d 674px,#6f6f6f 716px,#606060 754px,#545454 969px)"></i>
<i style="top:543px;background:linear-gradient(90deg,#6a6a6a 106px,#6e6e6e 107px,#737373 109px,#797979 113px,#808080 120px,#878787 129px,#939393 153px,#9d9d9d 185px,#a4a4a4 223px,#a9a9a9 268px,#acacac 318px,#acacac 372px,#a9a9a9 421px,#a4a4a4 471px,#9d9d9d 525px,#939393 579px,#888888 628px,#7c7c7c 673px,#6f6f6f 714px,#606060 754px,#535353 969px)"></i>
<i style="top:546px;background:linear-gradient(90deg,#696969 107px,#6d6d6d 108px,#707070 109px,#797979 114px,#808080 121px,#868686 129px,#929292 153px,#9c9c9c 184px,#a4a4a4 222px,#a9a9a9 266px,#ababab 316px,#ababab 370px,#a9a9a9 419px,#a4a4a4 470px,#9d9d9d 524px,#939393 578px,#888888 627px,#7c7c7c 673px,#6e6e6e 715px,#5f5f5f 753px,#535353 969px)"></i>
<i style="top:549px;background:linear-gradient(90deg,#666666 108px,#6c6c6c 109px,#6f6f6f 110px,#777777 114px,#7d7d7d 120px,#848484 128px,#8a8a8a 138px,#909090 151px,#9b9b9b 182px,#a3a3a3 220px,#a8a8a8 264px,#ababab 314px,#ababab 368px,#a8a8a8 417px,#a4a4a4 468px,#9c9c9c 522px,#939393 576px,#888888 626px,#7b7b7b 672px,#6e6e6e 714px,#5f5f5f 753px,#525252 969px)"></i>
<i style="top:552px;background:linear-gradient(90deg,#6b6b6b 110px,#737373 113px,#7a7a7a 118px,#808080 125px,#878787 134px,#929292 158px,#9c9c9c 190px,#a3a3a3 228px,#a8a8a8 272px,#aaaaaa 321px,#aaaaaa 374px,#a7a7a7 423px,#a2a2a2 473px,#9b9b9b 526px,#929292 579px,#878787 628px,#7b7b7b 673px,#6d6d6d 715px,#5e5e5e 752px,#515151 969px)"></i>
<i style="top:555px;background:linear-gradient(90deg,#696969 111px,#6d6d6d 112px,#727272 114px,#787878 118px,#7f7f7f 125px,#868686 134px,#919191 158px,#9b9b9b 189px,#a2a2a2 227px,#a7a7a7 270px,#aaaaaa 319px,#a9a9a9 372px,#a7a7a7 421px,#a2a2a2 472px,#9b9b9b 525px,#919191 578px,#868686 627px,#7a7a7a 672px,#6d6d6d 714px,#5e5e5e 752px,#515151 969px)"></i>
<i style="top:558px;background:linear-gradient(90deg,#676767 112px,#6c6c6c 113px,#6e6e6e 114px,#767676 118px,#7d7d7d 124px,#848484 133px,#909090 156px,#9a9a9a 187px,#a1a1a1 224px,#a6a6a6 268px,#a9a9a9 317px,#a9a9a9 370px,#a6a6a6 420px,#a2a2a2 471px,#9a9a9a 524px,#919191 577px,#868686 626px,#7a7a7a 672px,#6c6c6c 714px,#5d5d5d 751px,#505050 969px)"></i>
<i style="top:561px;background:linear-gradient(90deg,#6a6a6a 114px,#727272 117px,#797979 122px,#7f7f7f 129px,#868686 138px,#919191 162px,#9a9a9a 193px,#a2a2a2 231px,#a6a6a6 274px,#a8a8a8 323px,#a8a8a8 375px,#a5a5a5 424px,#a1a1a1 475px,#999999 528px,#909090 579px,#858585 627px,#797979 672px,#6c6c6c 713px,#5d5d5d 751px,#4f4f4f 969px)"></i>
<i style="top:564px;background:linear-gradient(90deg,#686868 115px,#6e6e6e 117px,#777777 122px,#7e7e7e 129px,#848484 138px,#909090 161px,#999999 192px,#a1a1a1 230px,#a6a6a6 273px,#a8a8a8 321px,#a8a8a8 373px,#a5a5a5 423px,#a0a0a0 474px,#999999 527px,#909090 578px,#858585 627px,#787878 672px,#6b6b6b 713px,#5c5c5c 750px,#4e4e4e 969px)"></i>
<i style="top:567px;background:linear-gradient(90deg,#646464 116px,#6a6a6a 117px,#6f6f6f 119px,#737373 121px,#7a7a7a 127px,#818181 135px,#8d8d8d 157px,#979797 187px,#9f9f9f 224px,#a4a4a4 267px,#a7a7a7 316px,#a7a7a7 369px,#a5a5a5 419px,#a0a0a0 470px,#999999 523px,#909090 575px,#858585 624px,#787878 670px,#6b6b6b 711px,#5c5c5c 750px,#4e4e4e 969px)"></i>
<i style="top:570px;background:linear-gradient(90deg,#686868 118px,#6b6b6b 119px,#707070 121px,#767676 125px,#7d7d7d 132px,#848484 141px,#8f8f8f 164px,#999999 195px,#a0a0a0 233px,#a4a4a4 276px,#a7a7a7 324px,#a6a6a6 376px,#a4a4a4 425px,#9f9f9f 476px,#979797 528px,#8e8e8e 579px,#848484 627px,#777777 672px,#6a6a6a 713px,#5b5b5b 749px,#4d4d4d 969px)"></i>
<i style="top:573px;background:linear-gradient(90deg,#646464 119px,#6a6a6a 120px,#6c6c6c 121px,#747474 125px,#7b7b7b 131px,#818181 139px,#8d8d8d 162px,#979797 192px,#9e9e9e 229px,#a3a3a3 272px,#a6a6a6 320px,#a6a6a6 372px,#a3a3a3 422px,#9e9e9e 473px,#979797 525px,#8e8e8e 576px,#838383 625px,#777777 670px,#6a6a6a 711px,#5a5a5a 749px,#4c4c4c 969px)"></i>
<i style="top:576px;background:linear-gradient(90deg,#676767 121px,#6b6b6b 122px,#6f6f6f 124px,#757575 128px,#7c7c7c 135px,#838383 144px,#8e8e8e 167px,#989898 198px,#9f9f9f 235px,#a3a3a3 278px,#a5a5a5 326px,#a5a5a5 377px,#a2a2a2 426px,#9d9d9d 477px,#969696 529px,#8d8d8d 579px,#828282 627px,#767676 671px,#696969 711px,#5a5a5a 748px,#4b4b4b 969px)"></i>
<i style="top:579px;background:linear-gradient(90deg,#636363 122px,#696969 123px,#6c6c6c 124px,#717171 127px,#797979 133px,#7f7f7f 141px,#8b8b8b 163px,#959595 193px,#9d9d9d 230px,#a2a2a2 273px,#a5a5a5 321px,#a4a4a4 373px,#a2a2a2 423px,#9d9d9d 474px,#969696 526px,#8d8d8d 577px,#828282 625px,#767676 670px,#686868 711px,#595959 747px,#4b4b4b 969px)"></i>
<i style="top:582px;background:linear-gradient(90deg,#666666 124px,#6c6c6c 126px,#747474 131px,#7c7c7c 138px,#818181 146px,#8d8d8d 169px,#969696 200px,#9d9d9d 237px,#a2a2a2 280px,#a4a4a4 327px,#a4a4a4 378px,#a1a1a1 427px,#9c9c9c 478px,#959595 529px,#8c8c8c 579px,#818181 626px,#757575 670px,#686868 710px,#595959 747px,#4a4a4a 969px)"></i>
<i style="top:585px;background:linear-gradient(90deg,#676767 126px,#6f6f6f 129px,#767676 134px,#7c7c7c 141px,#828282 150px,#8d8d8d 173px,#969696 204px,#9d9d9d 241px,#a2a2a2 283px,#a4a4a4 330px,#a3a3a3 381px,#a0a0a0 430px,#9b9b9b 480px,#949494 531px,#8b8b8b 580px,#808080 627px,#747474 671px,#676767 710px,#585858 746px,#494949 969px)"></i>
<i style="top:588px;background:linear-gradient(90deg,#646464 127px,#686868 128px,#6b6b6b 129px,#727272 133px,#797979 139px,#808080 148px,#8b8b8b 170px,#959595 200px,#9c9c9c 237px,#a1a1a1 279px,#a3a3a3 327px,#a2a2a2 378px,#a0a0a0 427px,#9b9b9b 478px,#949494 529px,#8b8b8b 578px,#808080 626px,#747474 670px,#666666 710px,#585858 745px,#484848 969px)"></i>
<i style="top:591px;background:linear-gradient(90deg,#656565 129px,#696969 130px,#6d6d6d 132px,#737373 136px,#7a7a7a 143px,#818181 152px,#8c8c8c 175px,#959595 205px,#9c9c9c 242px,#a0a0a0 284px,#a2a2a2 331px,#a2a2a2 382px,#9f9f9f 431px,#9a9a9a 481px,#939393 531px,#8a8a8a 580px,#7f7f7f 626px,#737373 669px,#666666 708px,#575757 745px,#474747 969px)"></i>
<i style="top:594px;background:linear-gradient(90deg,#666666 131px,#6e6e6e 134px,#747474 139px,#7b7b7b 146px,#818181 154px,#8b8b8b 177px,#959595 208px,#9b9b9b 245px,#a0a0a0 287px,#a2a2a2 334px,#a1a1a1 384px,#9e9e9e 433px,#999999 482px,#929292 532px,#898989 580px,#7f7f7f 626px,#737373 669px,#656565 708px,#575757 744px,#474747 969px)"></i>
<i style="top:597px;background:linear-gradient(90deg,#616161 132px,#676767 133px,#6a6a6a 134px,#717171 138px,#777777 144px,#7e7e7e 152px,#898989 174px,#929292 203px,#9a9a9a 240px,#9f9f9f 282px,#a1a1a1 329px,#a0a0a0 380px,#9e9e9e 429px,#999999 479px,#929292 529px,#898989 578px,#7e7e7e 625px,#727272 668px,#656565 707px,#565656 743px,#464646 969px)"></i>
<i style="top:600px;background:linear-gradient(90deg,#636363 134px,#6a6a6a 136px,#717171 140px,#777777 146px,#7e7e7e 155px,#898989 178px,#939393 208px,#9a9a9a 244px,#9e9e9e 286px,#a0a0a0 333px,#a0a0a0 383px,#9d9d9d 432px,#989898 481px,#919191 531px,#888888 579px,#7d7d7d 626px,#717171 669px,#646464 708px,#555555 742px,#454545 969px)"></i>
<i style="top:603px;background:linear-gradient(90deg,#646464 136px,#676767 137px,#6c6c6c 139px,#727272 143px,#797979 150px,#7e7e7e 158px,#898989 181px,#929292 211px,#999999 247px,#9e9e9e 289px,#9f9f9f 336px,#9f9f9f 386px,#9c9c9c 434px,#979797 483px,#909090 532px,#878787 580px,#7c7c7c 626px,#717171 668px,#636363 707px,#555555 741px,#444444 969px)"></i>
<i style="top:606px;background:linear-gradient(90deg,#646464 138px,#676767 139px,#6c6c6c 141px,#717171 145px,#787878 152px,#7f7f7f 161px,#898989 184px,#929292 214px,#999999 250px,#9d9d9d 292px,#9f9f9f 338px,#9e9e9e 388px,#9b9b9b 436px,#969696 485px,#8f8f8f 534px,#868686 581px,#7c7c7c 626px,#707070 668px,#636363 705px,#545454 741px,#434343 969px)"></i>
<i style="top:609px;background:linear-gradient(90deg,#646464 140px,#6b6b6b 143px,#727272 148px,#797979 155px,#7e7e7e 163px,#898989 186px,#929292 216px,#989898 252px,#9c9c9c 294px,#9e9e9e 340px,#9d9d9d 390px,#9a9a9a 438px,#959595 486px,#8e8e8e 534px,#858585 581px,#7b7b7b 626px,#6f6f6f 668px,#626262 705px,#545454 740px,#4b4b4b 864px,#424242 969px)"></i>
<i style="top:612px;background:linear-gradient(90deg,#646464 142px,#6b6b6b 145px,#727272 150px,#787878 157px,#7e7e7e 166px,#898989 189px,#919191 219px,#989898 255px,#9c9c9c 297px,#9d9d9d 343px,#9c9c9c 392px,#999999 439px,#949494 487px,#8d8d8d 535px,#848484 582px,#7a7a7a 627px,#6e6e6e 668px,#626262 704px,#535353 739px,#4a4a4a 864px,#414141 969px)"></i>
<i style="top:615px;background:linear-gradient(90deg,#646464 144px,#6b6b6b 147px,#717171 152px,#787878 159px,#7d7d7d 167px,#888888 190px,#909090 220px,#979797 256px,#9b9b9b 297px,#9c9c9c 343px,#9c9c9c 392px,#999999 439px,#949494 487px,#8d8d8d 535px,#848484 582px,#797979 626px,#6e6e6e 667px,#616161 704px,#535353 738px,#414141 969px)"></i>
<i style="top:618px;background:linear-gradient(90deg,#636363 146px,#6a6a6a 149px,#717171 154px,#777777 161px,#7d7d7d 169px,#878787 192px,#909090 222px,#969696 258px,#9a9a9a 299px,#9c9c9c 344px,#9b9b9b 392px,#989898 439px,#939393 487px,#8c8c8c 535px,#838383 581px,#797979 625px,#6d6d6d 666px,#606060 703px,#525252 737px,#414141 949px,#414141 969px)"></i>
<i style="top:621px;background:linear-gradient(90deg,#636363 148px,#6a6a6a 151px,#717171 156px,#777777 163px,#7c7c7c 171px,#878787 194px,#8f8f8f 223px,#959595 258px,#999999 299px,#9b9b9b 344px,#9a9a9a 392px,#979797 439px,#929292 487px,#8b8b8b 535px,#828282 581px,#787878 625px,#6c6c6c 666px,#606060 702px,#515151 736px,#414141 939px,#414141 969px)"></i>
<i style="top:624px;background:linear-gradient(90deg,#626262 150px,#696969 153px,#6f6f6f 157px,#767676 164px,#7b7b7b 172px,#868686 195px,#8e8e8e 224px,#949494 259px,#999999 300px,#9a9a9a 344px,#999999 392px,#969696 439px,#929292 486px,#8b8b8b 534px,#828282 580px,#777777 624px,#6c6c6c 665px,#5f5f5f 701px,#515151 735px,#414141 929px,#414141 969px)"></i>
<i style="top:627px;background:linear-gradient(90deg,#616161 152px,#696969 155px,#6e6e6e 159px,#757575 166px,#7a7a7a 174px,#858585 196px,#8d8d8d 225px,#949494 260px,#989898 300px,#999999 344px,#999999 391px,#969696 438px,#919191 485px,#8a8a8a 533px,#818181 579px,#777777 623px,#6b6b6b 664px,#5e5e5e 700px,#505050 734px,#414141 918px,#414141 969px)"></i>
<i style="top:630px;background:linear-gradient(90deg,#606060 154px,#666666 156px,#6e6e6e 161px,#747474 167px,#797979 175px,#848484 197px,#8c8c8c 225px,#939393 259px,#979797 299px,#989898 343px,#989898 390px,#959595 437px,#909090 484px,#898989 532px,#818181 578px,#767676 622px,#6b6b6b 663px,#5e5e5e 699px,#4f4f4f 733px,#414141 908px,#414141 969px)"></i>
<i style="top:633px;background:linear-gradient(90deg,#5e5e5e 156px,#656565 158px,#6c6c6c 162px,#727272 168px,#787878 176px,#828282 197px,#8b8b8b 225px,#919191 259px,#969696 298px,#989898 342px,#979797 389px,#949494 436px,#909090 483px,#898989 531px,#808080 577px,#767676 621px,#6a6a6a 662px,#5d5d5d 699px,#4f4f4f 731px,#414141 898px,#414141 969px)"></i>
<i style="top:636px;background:linear-gradient(90deg,#5b5b5b 158px,#616161 159px,#646464 160px,#696969 163px,#707070 169px,#767676 176px,#818181 196px,#898989 223px,#909090 257px,#959595 296px,#979797 339px,#969696 386px,#949494 433px,#8f8f8f 481px,#888888 529px,#7f7f7f 576px,#757575 620px,#696969 661px,#5c5c5c 698px,#4e4e4e 730px,#414141 888px,#414141 969px)"></i>
<i style="top:639px;background:linear-gradient(90deg,#606060 161px,#676767 164px,#6c6c6c 168px,#737373 175px,#787878 183px,#828282 204px,#8a8a8a 232px,#909090 266px,#949494 304px,#969696 346px,#959595 392px,#939393 438px,#8e8e8e 485px,#878787 532px,#7e7e7e 578px,#747474 621px,#686868 661px,#5c5c5c 697px,#4e4e4e 729px,#414141 878px,#414141 969px)"></i>
<i style="top:642px;background:linear-gradient(90deg,#5e5e5e 163px,#646464 165px,#6a6a6a 169px,#717171 175px,#767676 183px,#818181 204px,#898989 231px,#8f8f8f 264px,#939393 302px,#959595 344px,#959595 390px,#929292 436px,#8d8d8d 483px,#868686 530px,#7e7e7e 576px,#737373 620px,#686868 660px,#5b5b5b 695px,#4d4d4d 728px,#414141 868px,#414141 969px)"></i>
<i style="top:645px;background:linear-gradient(90deg,#5a5a5a 165px,#606060 166px,#656565 168px,#686868 170px,#6e6e6e 175px,#747474 182px,#7e7e7e 202px,#878787 228px,#8e8e8e 261px,#929292 299px,#949494 341px,#949494 387px,#919191 433px,#8d8d8d 481px,#868686 528px,#7d7d7d 574px,#737373 618px,#676767 658px,#5b5b5b 693px,#4c4c4c 727px,#414141 858px,#414141 969px)"></i>
<i style="top:648px;background:linear-gradient(90deg,#5e5e5e 168px,#616161 169px,#656565 171px,#6b6b6b 175px,#757575 188px,#7f7f7f 209px,#888888 236px,#8e8e8e 269px,#929292 306px,#939393 347px,#939393 392px,#909090 438px,#8b8b8b 484px,#858585 531px,#7c7c7c 576px,#727272 619px,#666666 659px,#595959 694px,#4c4c4c 725px,#414141 848px,#414141 969px)"></i>
<i style="top:651px;background:linear-gradient(90deg,#5a5a5a 170px,#5f5f5f 171px,#626262 172px,#676767 175px,#6d6d6d 180px,#737373 187px,#7d7d7d 207px,#868686 233px,#8c8c8c 265px,#909090 302px,#929292 344px,#929292 389px,#8f8f8f 435px,#8b8b8b 482px,#848484 529px,#7b7b7b 574px,#717171 617px,#666666 657px,#595959 692px,#4b4b4b 724px,#414141 838px,#414141 969px)"></i>
<i style="top:654px;background:linear-gradient(90deg,#5d5d5d 173px,#626262 175px,#686868 179px,#6f6f6f 185px,#747474 193px,#7e7e7e 213px,#868686 239px,#8c8c8c 271px,#909090 308px,#919191 349px,#919191 392px,#8e8e8e 438px,#8a8a8a 484px,#838383 530px,#7a7a7a 575px,#707070 617px,#656565 656px,#595959 690px,#4a4a4a 723px,#414141 828px,#414141 969px)"></i>
<i style="top:657px;background:linear-gradient(90deg,#575757 175px,#5e5e5e 176px,#646464 179px,#6b6b6b 184px,#707070 190px,#7b7b7b 209px,#838383 234px,#8a8a8a 265px,#8e8e8e 302px,#909090 343px,#909090 387px,#8e8e8e 433px,#898989 480px,#838383 527px,#7a7a7a 572px,#707070 615px,#646464 655px,#575757 690px,#4a4a4a 721px,#414141 818px,#414141 969px)"></i>
<i style="top:660px;background:linear-gradient(90deg,#5b5b5b 178px,#616161 180px,#676767 184px,#6d6d6d 190px,#727272 197px,#7c7c7c 216px,#848484 242px,#8a8a8a 273px,#8e8e8e 309px,#8f8f8f 349px,#8f8f8f 392px,#8d8d8d 437px,#888888 483px,#818181 529px,#797979 573px,#6f6f6f 615px,#636363 654px,#575757 688px,#494949 720px,#414141 807px,#414141 969px)"></i>
<i style="top:663px;background:linear-gradient(90deg,#5c5c5c 181px,#636363 184px,#686868 188px,#737373 201px,#7c7c7c 221px,#838383 246px,#898989 277px,#8d8d8d 312px,#8f8f8f 352px,#8e8e8e 394px,#8c8c8c 439px,#878787 484px,#808080 530px,#787878 574px,#6e6e6e 616px,#626262 654px,#565656 688px,#484848 718px,#414141 797px,#414141 969px)"></i>
<i style="top:666px;background:linear-gradient(90deg,#5c5c5c 184px,#636363 187px,#686868 191px,#727272 204px,#7b7b7b 224px,#838383 249px,#888888 280px,#8c8c8c 315px,#8e8e8e 354px,#8d8d8d 395px,#8a8a8a 440px,#868686 485px,#7f7f7f 530px,#777777 574px,#6d6d6d 615px,#616161 653px,#555555 686px,#474747 717px,#414141 787px,#414141 967px)"></i>
<i style="top:669px;background:linear-gradient(90deg,#575757 186px,#5c5c5c 187px,#5f5f5f 188px,#646464 191px,#696969 196px,#6e6e6e 202px,#787878 220px,#808080 245px,#868686 275px,#8a8a8a 310px,#8c8c8c 349px,#8c8c8c 391px,#8a8a8a 435px,#858585 481px,#7f7f7f 527px,#767676 571px,#6c6c6c 613px,#616161 651px,#545454 685px,#474747 715px,#414141 777px,#414141 957px)"></i>
<i style="top:672px;background:linear-gradient(90deg,#585858 189px,#5f5f5f 191px,#646464 194px,#696969 199px,#6e6e6e 206px,#787878 224px,#808080 249px,#868686 279px,#898989 313px,#8b8b8b 352px,#8b8b8b 393px,#898989 437px,#848484 482px,#7e7e7e 527px,#757575 571px,#6b6b6b 612px,#606060 650px,#545454 683px,#464646 714px,#414141 767px,#414141 947px)"></i>
<i style="top:675px;background:linear-gradient(90deg,#585858 192px,#5e5e5e 194px,#646464 198px,#6f6f6f 210px,#777777 228px,#7f7f7f 252px,#858585 281px,#888888 315px,#8a8a8a 353px,#8a8a8a 394px,#888888 438px,#838383 483px,#7d7d7d 528px,#747474 571px,#6a6a6a 612px,#5f5f5f 649px,#535353 682px,#454545 712px,#414141 757px,#414141 937px)"></i>
<i style="top:678px;background:linear-gradient(90deg,#585858 195px,#5e5e5e 197px,#646464 201px,#6e6e6e 213px,#777777 231px,#7e7e7e 255px,#848484 284px,#888888 318px,#898989 355px,#898989 395px,#878787 439px,#828282 483px,#7c7c7c 528px,#737373 571px,#696969 612px,#5e5e5e 649px,#525252 682px,#454545 710px,#414141 747px,#414141 927px)"></i>
<i style="top:681px;background:linear-gradient(90deg,#575757 198px,#5d5d5d 200px,#626262 203px,#676767 208px,#6d6d6d 215px,#767676 233px,#7d7d7d 257px,#838383 286px,#868686 319px,#888888 356px,#888888 396px,#868686 439px,#818181 483px,#7b7b7b 527px,#727272 570px,#686868 611px,#5d5d5d 648px,#515151 681px,#444444 708px,#414141 737px,#414141 916px)"></i>
<i style="top:684px;background:linear-gradient(90deg,#565656 201px,#5a5a5a 202px,#5c5c5c 203px,#616161 206px,#666666 211px,#6b6b6b 217px,#747474 235px,#7c7c7c 258px,#818181 287px,#858585 320px,#878787 357px,#878787 396px,#858585 439px,#808080 483px,#7a7a7a 527px,#727272 569px,#686868 609px,#5d5d5d 646px,#515151 677px,#434343 707px,#414141 727px,#414141 906px)"></i>
<i style="top:687px;background:linear-gradient(90deg,#535353 204px,#595959 205px,#5f5f5f 208px,#656565 213px,#6a6a6a 219px,#737373 236px,#7a7a7a 258px,#808080 286px,#848484 318px,#868686 355px,#868686 394px,#848484 437px,#7f7f7f 481px,#797979 525px,#717171 567px,#676767 607px,#5c5c5c 644px,#505050 676px,#424242 705px,#414141 717px,#414141 896px)"></i>
<i style="top:690px;background:linear-gradient(90deg,#575757 208px,#5c5c5c 210px,#626262 214px,#6b6b6b 226px,#747474 244px,#7b7b7b 267px,#808080 295px,#838383 327px,#858585 362px,#858585 400px,#828282 442px,#7e7e7e 485px,#777777 528px,#6f6f6f 569px,#666666 608px,#5b5b5b 644px,#4f4f4f 675px,#414141 703px,#414141 886px)"></i>
<i style="top:693px;background:linear-gradient(90deg,#555555 211px,#5b5b5b 213px,#606060 216px,#656565 221px,#6a6a6a 228px,#727272 245px,#797979 268px,#7e7e7e 295px,#828282 327px,#848484 362px,#838383 399px,#818181 441px,#7d7d7d 483px,#777777 526px,#6f6f6f 567px,#656565 606px,#5a5a5a 641px,#4e4e4e 672px,#414141 700px,#414141 876px)"></i>
<i style="top:696px;background:linear-gradient(90deg,#525252 214px,#575757 215px,#5d5d5d 218px,#626262 222px,#676767 228px,#707070 244px,#777777 266px,#7d7d7d 293px,#808080 324px,#828282 359px,#828282 397px,#808080 439px,#7c7c7c 481px,#767676 523px,#6e6e6e 564px,#656565 603px,#5a5a5a 638px,#4e4e4e 670px,#414141 696px,#414141 866px)"></i>
<i style="top:699px;background:linear-gradient(90deg,#555555 218px,#5a5a5a 220px,#606060 224px,#686868 235px,#717171 252px,#777777 274px,#7c7c7c 301px,#808080 331px,#818181 365px,#818181 402px,#7f7f7f 442px,#7b7b7b 483px,#757575 524px,#6d6d6d 564px,#646464 602px,#595959 636px,#4e4e4e 666px,#414141 693px,#414141 856px)"></i>
<i style="top:702px;background:linear-gradient(90deg,#505050 221px,#565656 222px,#5c5c5c 225px,#656565 234px,#6e6e6e 250px,#757575 271px,#7a7a7a 297px,#7e7e7e 327px,#808080 361px,#808080 398px,#7e7e7e 438px,#7a7a7a 479px,#747474 520px,#6c6c6c 560px,#636363 598px,#595959 632px,#4d4d4d 663px,#414141 689px,#414141 846px)"></i>
<i style="top:705px;background:linear-gradient(90deg,#525252 225px,#585858 227px,#5d5d5d 230px,#666666 241px,#6e6e6e 257px,#757575 278px,#7a7a7a 304px,#7d7d7d 333px,#7f7f7f 366px,#7f7f7f 402px,#7c7c7c 441px,#787878 481px,#737373 521px,#6b6b6b 560px,#626262 597px,#585858 630px,#4d4d4d 660px,#414141 685px,#414141 835px)"></i>
<i style="top:708px;background:linear-gradient(90deg,#535353 229px,#585858 231px,#5c5c5c 234px,#666666 245px,#6d6d6d 261px,#747474 282px,#797979 308px,#7c7c7c 337px,#7d7d7d 369px,#7d7d7d 404px,#7b7b7b 442px,#777777 481px,#727272 520px,#6a6a6a 558px,#626262 593px,#585858 626px,#4d4d4d 655px,#414141 682px,#414141 825px)"></i>
<i style="top:711px;background:linear-gradient(90deg,#535353 233px,#585858 235px,#5d5d5d 239px,#656565 250px,#6d6d6d 266px,#737373 286px,#777777 311px,#7b7b7b 340px,#7c7c7c 372px,#7c7c7c 406px,#7a7a7a 444px,#767676 482px,#707070 520px,#696969 557px,#616161 592px,#575757 624px,#4d4d4d 652px,#414141 678px,#414141 815px)"></i>
<i style="top:714px;background:linear-gradient(90deg,#535353 237px,#575757 239px,#5c5c5c 243px,#656565 254px,#6c6c6c 270px,#727272 290px,#767676 315px,#797979 343px,#7b7b7b 374px,#7a7a7a 407px,#787878 444px,#757575 481px,#6f6f6f 519px,#686868 555px,#606060 589px,#575757 621px,#4d4d4d 648px,#414141 674px,#414141 805px)"></i>
<i style="top:717px;background:linear-gradient(90deg,#525252 241px,#565656 243px,#5a5a5a 246px,#636363 257px,#6b6b6b 273px,#707070 293px,#757575 317px,#787878 345px,#797979 375px,#797979 408px,#777777 444px,#737373 481px,#6e6e6e 517px,#676767 553px,#606060 586px,#565656 617px,#4d4d4d 644px,#414141 670px,#414141 795px)"></i>
<i style="top:720px;background:linear-gradient(90deg,#515151 245px,#555555 247px,#595959 250px,#626262 260px,#696969 275px,#6f6f6f 295px,#737373 319px,#767676 346px,#787878 376px,#787878 408px,#767676 443px,#727272 479px,#6d6d6d 515px,#676767 550px,#5f5f5f 583px,#565656 614px,#4c4c4c 642px,#414141 665px,#414141 785px)"></i>
<i style="top:723px;background:linear-gradient(90deg,#4f4f4f 249px,#545454 251px,#585858 254px,#606060 263px,#676767 278px,#6d6d6d 297px,#727272 320px,#757575 347px,#767676 376px,#767676 408px,#717171 478px,#6c6c6c 513px,#666666 548px,#5e5e5e 580px,#555555 610px,#4c4c4c 637px,#414141 661px,#414141 775px)"></i>
<i style="top:726px;background:linear-gradient(90deg,#4c4c4c 253px,#505050 254px,#545454 256px,#595959 260px,#5d5d5d 265px,#656565 278px,#6b6b6b 296px,#707070 318px,#737373 344px,#757575 373px,#757575 405px,#707070 474px,#656565 543px,#5e5e5e 576px,#555555 606px,#4b4b4b 633px,#414141 656px,#414141 765px)"></i>
<i style="top:729px;background:linear-gradient(90deg,#4e4e4e 258px,#535353 260px,#575757 263px,#5e5e5e 272px,#656565 286px,#6b6b6b 304px,#6f6f6f 326px,#727272 351px,#737373 410px,#6f6f6f 476px,#646464 543px,#5d5d5d 574px,#545454 603px,#4b4b4b 628px,#414141 652px,#414141 755px)"></i>
<i style="top:732px;background:linear-gradient(90deg,#4e4e4e 263px,#535353 265px,#565656 268px,#5e5e5e 278px,#646464 292px,#6a6a6a 310px,#6e6e6e 331px,#707070 356px,#727272 413px,#6d6d6d 478px,#626262 542px,#535353 600px,#4b4b4b 625px,#414141 647px,#414141 744px)"></i>
<i style="top:735px;background:linear-gradient(90deg,#4a4a4a 267px,#4e4e4e 268px,#525252 270px,#5a5a5a 278px,#616161 291px,#676767 308px,#6b6b6b 329px,#6e6e6e 353px,#707070 409px,#6c6c6c 473px,#626262 537px,#535353 595px,#4b4b4b 620px,#414141 642px,#414141 734px)"></i>
<i style="top:738px;background:linear-gradient(90deg,#4a4a4a 272px,#4d4d4d 273px,#515151 275px,#595959 283px,#606060 295px,#656565 312px,#6a6a6a 332px,#6d6d6d 356px,#6e6e6e 410px,#6a6a6a 472px,#616161 534px,#535353 591px,#4a4a4a 615px,#414141 637px,#414141 724px)"></i>
<i style="top:741px;background:linear-gradient(90deg,#484848 277px,#4c4c4c 278px,#505050 280px,#575757 287px,#5e5e5e 299px,#646464 315px,#686868 334px,#6b6b6b 357px,#6d6d6d 410px,#696969 470px,#606060 530px,#525252 585px,#4a4a4a 609px,#414141 632px,#414141 714px)"></i>
<i style="top:744px;background:linear-gradient(90deg,#4b4b4b 283px,#4f4f4f 285px,#535353 288px,#595959 296px,#5e5e5e 308px,#636363 324px,#676767 343px,#6a6a6a 365px,#6b6b6b 416px,#676767 473px,#5e5e5e 530px,#515151 583px,#494949 606px,#414141 626px,#414141 704px)"></i>
<i style="top:747px;background:linear-gradient(90deg,#484848 288px,#4b4b4b 289px,#4f4f4f 291px,#565656 299px,#5c5c5c 310px,#616161 325px,#656565 344px,#686868 365px,#696969 414px,#666666 470px,#5d5d5d 526px,#515151 577px,#414141 621px,#414141 694px)"></i>
<i style="top:750px;background:linear-gradient(90deg,#484848 294px,#4d4d4d 296px,#4f4f4f 298px,#565656 306px,#5b5b5b 317px,#606060 332px,#666666 370px,#676767 417px,#646464 470px,#5c5c5c 524px,#505050 573px,#414141 615px,#414141 684px)"></i>
<i style="top:753px;background:linear-gradient(90deg,#484848 300px,#4c4c4c 302px,#4e4e4e 304px,#545454 311px,#595959 322px,#5e5e5e 336px,#646464 373px,#656565 418px,#626262 469px,#5b5b5b 520px,#505050 567px,#414141 609px,#414141 674px)"></i>
<i style="top:756px;background:linear-gradient(90deg,#464646 306px,#4c4c4c 309px,#525252 316px,#575757 326px,#5c5c5c 340px,#626262 375px,#636363 418px,#606060 467px,#595959 517px,#4f4f4f 563px,#414141 602px,#414141 663px)"></i>
<i style="top:759px;background:linear-gradient(90deg,#464646 313px,#4c4c4c 317px,#525252 324px,#575757 335px,#5b5b5b 348px,#606060 381px,#616161 422px,#5e5e5e 468px,#585858 515px,#4e4e4e 558px,#414141 595px,#414141 653px)"></i>
<i style="top:762px;background:linear-gradient(90deg,#424242 319px,#464646 320px,#484848 321px,#4e4e4e 327px,#535353 336px,#575757 348px,#5d5d5d 379px,#5f5f5f 418px,#5d5d5d 462px,#575757 508px,#4d4d4d 551px,#414141 588px,#414141 643px)"></i>
<i style="top:765px;background:linear-gradient(90deg,#444444 327px,#4a4a4a 331px,#4e4e4e 337px,#535353 346px,#565656 358px,#5b5b5b 388px,#5c5c5c 424px,#5a5a5a 465px,#555555 507px,#4c4c4c 546px,#414141 580px,#414141 633px)"></i>
<i style="top:768px;background:linear-gradient(90deg,#414141 334px,#444444 335px,#474747 337px,#4b4b4b 342px,#505050 350px,#535353 361px,#585858 389px,#5a5a5a 423px,#585858 461px,#535353 501px,#4b4b4b 539px,#414141 572px,#414141 623px)"></i>
<i style="top:771px;background:linear-gradient(90deg,#414141 342px,#474747 346px,#4a4a4a 351px,#515151 368px,#565656 393px,#575757 425px,#565656 460px,#515151 497px,#4a4a4a 532px,#414141 563px,#414141 613px)"></i>
<i style="top:774px;background:linear-gradient(90deg,#414141 351px,#464646 356px,#4a4a4a 361px,#4f4f4f 377px,#535353 400px,#555555 429px,#535353 460px,#4f4f4f 493px,#494949 525px,#414141 554px,#414141 603px)"></i>
<i style="top:777px;background:linear-gradient(90deg,#414141 360px,#414141 362px,#454545 366px,#484848 372px,#4d4d4d 387px,#505050 407px,#515151 432px,#505050 460px,#4d4d4d 489px,#484848 517px,#414141 543px,#414141 593px)"></i>
<i style="top:780px;background:linear-gradient(90deg,#414141 371px,#414141 374px,#474747 385px,#4b4b4b 397px,#4d4d4d 415px,#4e4e4e 436px,#4d4d4d 460px,#4b4b4b 484px,#474747 508px,#414141 531px,#414141 582px)"></i>
<i style="top:783px;background:linear-gradient(90deg,#414141 382px,#414141 388px,#464646 398px,#484848 411px,#4a4a4a 441px,#484848 479px,#414141 517px,#414141 571px)"></i>
<i style="top:786px;background:linear-gradient(90deg,#414141 396px,#414141 406px,#454545 427px,#464646 446px,#454545 471px,#414141 498px,#414141 557px)"></i>
<i style="top:789px;background:linear-gradient(90deg,#414141 412px,#414141 541px)"></i>
<i style="top:792px;background:linear-gradient(90deg,#414141 433px,#414141 520px)"></i>
</div>
<svg class="a" style="left:0;top:0" width="969" height="813"><path d="M1513.43 -327.74 L362.93 13.38 A399.5 399.5 0 0 0 93.48 509.97 A399.5 399.5 0 0 0 590.07 779.42 L1740.56 438.30 Z" fill="none" stroke="#000" stroke-width="1"/></svg>
<svg class="a" style="left:858px;top:18px" width="100" height="90" viewBox="0 0 100 90">
<defs><radialGradient id="vs" cx=".5" cy=".5" r=".5"><stop offset="0" stop-color="#000" stop-opacity=".32"/><stop offset="1" stop-color="#000" stop-opacity="0"/></radialGradient></defs>
<ellipse cx="50" cy="69" rx="44" ry="12" fill="url(#vs)"/>
<path d="M15.4 19 L46.7 13.5 L84.6 19 L50 26 Z" fill="#a9abaf" stroke="#85878b" stroke-width=".7" stroke-dasharray="3 1.5"/>
<path d="M15.4 19 L50 26 L50 78 L17.8 63.7 Z" fill="#a3a5a9" stroke="#8a8c90" stroke-width=".7"/>
<path d="M50 26 L84.6 19 L82.6 62.7 L50 78 Z" fill="#a8aaae" stroke="#8a8c90" stroke-width=".7"/>
<rect x="46.5" y="35" width="7.5" height="32" fill="#9c9ea4" opacity=".75"/>
<path d="M50 26V78" stroke="#707276" stroke-width=".8" stroke-dasharray="4 2"/>
<text transform="matrix(1 .2 0 1 20.5 47)" font-family="Liberation Sans,sans-serif" font-weight="bold" font-size="11" fill="#83858b" textLength="25.5" lengthAdjust="spacingAndGlyphs">FRONT</text>
<text transform="matrix(1 -.2 0 1 57.5 52)" font-family="Liberation Sans,sans-serif" font-weight="bold" font-size="11" fill="#83858b" textLength="21.5" lengthAdjust="spacingAndGlyphs">RIGHT</text>
<text transform="matrix(.9 .15 -.6 .35 50 19.5)" font-family="Liberation Sans,sans-serif" font-weight="bold" font-size="8" fill="#909296">TOP</text>
</svg>
</div>
<div class="a" style="left:1236px;top:144px;width:17px;height:813px;background:linear-gradient(90deg,#e9e9e9,#f1f1f1 4px,#f3f3f3 12px,#ececec)"></div>
<div class="a" style="left:1253px;top:142px;width:1px;height:834px;background:#fff"></div>
<svg class="a" style="left:1241px;top:151px;" width="8" height="5" viewBox="0 0 8 5"><path d="M0 4.5l4-4.5 4 4.5z" fill="#404040"/></svg>
<svg class="a" style="left:1241px;top:945px;" width="8" height="5" viewBox="0 0 8 5"><path d="M0 0l4 4.5 4-4.5z" fill="#404040"/></svg>
<div class="a" style="left:1237px;top:543px;width:15px;height:15px;background:linear-gradient(90deg,#f4f4f4,#e4e4e4 45%,#d2d2d2 50%,#dcdcdc);border:1px solid #979797;border-radius:2px"></div>
<div class="a" style="left:265px;top:957px;width:1px;height:18px;background:#a0a0a0"></div>
<div class="a" style="left:266px;top:957px;width:1px;height:18px;background:#696969"></div>
<div class="a" style="left:267px;top:957px;width:224px;height:18px;background:#f0f0f0"></div>
<div class="a t " style="left:297px;top:959px;font-size:11px;line-height:13px;letter-spacing:0.11px;">1 : 1</div>
<svg class="a" style="left:349px;top:958px;" width="12" height="12" viewBox="0 0 12 12"><defs><pattern id="ck" x="1" y="1" width="4" height="4" patternUnits="userSpaceOnUse"><rect width="4" height="4" fill="#fff"/><rect width="2" height="2" fill="#505050"/><rect x="2" y="2" width="2" height="2" fill="#505050"/></pattern></defs><rect x="1" y="1" width="10" height="10" fill="url(#ck)" stroke="#000" stroke-width="1.2"/></svg>
<svg class="a" style="left:367.5px;top:956.5px;" width="16" height="14" viewBox="0 0 16 14"><g transform="scale(.94)"><path d="M1 6l8-4.5 7 2.5v5l-8 4.5-7-3z" fill="#8fd4f4" stroke="#1565c0" stroke-width="1.2"/><path d="M1 6l7 3 8-5M8 9v4.5" fill="none" stroke="#1565c0"/><path d="M1 6l8-4.5 7 2.5-8 5z" fill="#bfe8fb" stroke="#1565c0"/></g></svg>
<svg class="a" style="left:388px;top:957px;" width="16" height="14" viewBox="0 0 16 14"><path d="M2 12.5c0-6 3-10 10-10v7c-3 0-5 1-6 3z" fill="#fafafa" stroke="#8a8a8a"/><path d="M5 12.5l9-2.5" stroke="#b0b0b0" stroke-width="2"/></svg>
<svg class="a" style="left:410px;top:958px;" width="12" height="12" viewBox="0 0 12 12"><g transform="scale(.86)"><path d="M4 0v13M10 0v13M0 4h14M0 10h14" stroke="#0030e0" stroke-width="2"/><path d="M1 13l12-12" stroke="#c00000" stroke-width="1.3"/></g></svg>
<svg class="a" style="left:431px;top:957px;" width="13" height="13" viewBox="0 0 13 13"><g transform="scale(.86)"><path d="M4 2v12M10 6v8M0 6h12M0 12h14" stroke="#0030e0" stroke-width="2"/><circle cx="11" cy="3" r="2.5" fill="#c8c8c8" stroke="#707070"/><rect x="10" y="5" width="2" height="2" fill="#707070"/></g></svg>
<svg class="a" style="left:450px;top:957px;" width="17" height="13" viewBox="0 0 17 13"><path d="M1 3c2-2 3 0 4 3" fill="none" stroke="#000"/><ellipse cx="7.5" cy="8.5" rx="3" ry="2.5" fill="#d8ecf8" stroke="#000"/><ellipse cx="13" cy="5.5" rx="3" ry="2.5" fill="#d8ecf8" stroke="#000"/><path d="M10 7.5l1-1M13 3c0-2-2-2.5-4-1.5" fill="none" stroke="#000"/></svg>
<svg class="a" style="left:475px;top:957px;" width="9" height="15" viewBox="0 0 9 15"><path d="M1 4.5c0-4.5 7-4.5 7 0v4.5h-2v4l-1.5 1.5-1.5-1.5v-4h-2z" fill="#a0a0a0"/><circle cx="4.5" cy="4" r="1.2" fill="#e8e8e8"/></svg>
<div class="a" style="left:491px;top:957px;width:745px;height:18px;background:linear-gradient(180deg,#e9e9e9,#f1f1f1 4px,#f3f3f3 12px,#ececec)"></div>
<svg class="a" style="left:497px;top:961px;" width="5" height="9" viewBox="0 0 5 9"><path d="M4.5 0v8l-4.5-4z" fill="#404040"/></svg>
<svg class="a" style="left:1223px;top:961px;" width="5" height="9" viewBox="0 0 5 9"><path d="M.5 0v8l4.5-4z" fill="#404040"/></svg>
<div class="a" style="left:856px;top:958px;width:15px;height:15px;background:linear-gradient(180deg,#f4f4f4,#e4e4e4 45%,#d2d2d2 50%,#dcdcdc);border:1px solid #979797;border-radius:2px"></div>
<div class="a" style="left:1236px;top:957px;width:17px;height:18px;background:#f0f0f0"></div>
<svg class="a" style="left:1239px;top:960px;" width="13" height="14" viewBox="0 0 13 14"><path d="M9 11h2v2h-2zM5 11h2v2h-2zM1 11h2v2h-2zM9 7h2v2h-2zM5 7h2v2h-2zM9 3h2v2h-2z" fill="#b8b8b8"/></svg>
<div class="a" style="left:3px;top:975px;width:1251px;height:1px;background:#9a9a9a"></div>
<div class="a" style="left:3px;top:976px;width:1251px;height:19px;background:#f0eeed;border-top:1px solid #fff;border-left:1px solid #fff"></div>
<div class="a t " style="left:5px;top:979px;font-size:12px;line-height:14px;letter-spacing:-0.23px;">Click to select, TAB for alternates, CTRL adds, SHIFT unselects.</div>
<div class="a" style="left:1009px;top:977px;width:1px;height:17px;background:#c8c8c8"></div>
<div class="a" style="left:1010px;top:977px;width:1px;height:17px;background:#fff"></div>
<div class="a" style="left:1040px;top:977px;width:1px;height:17px;background:#c8c8c8"></div>
<div class="a" style="left:1041px;top:977px;width:1px;height:17px;background:#fff"></div>
<div class="a" style="left:1076px;top:977px;width:1px;height:17px;background:#c8c8c8"></div>
<div class="a" style="left:1077px;top:977px;width:1px;height:17px;background:#fff"></div>
<div class="a" style="left:1112px;top:977px;width:1px;height:17px;background:#c8c8c8"></div>
<div class="a" style="left:1113px;top:977px;width:1px;height:17px;background:#fff"></div>
<div class="a" style="left:1213px;top:977px;width:1px;height:17px;background:#c8c8c8"></div>
<div class="a" style="left:1214px;top:977px;width:1px;height:17px;background:#fff"></div>
<svg class="a" style="left:1116px;top:978px;" width="16" height="16" viewBox="0 0 16 16"><path d="M1 1h13l-5 6.5v7l-3-1.5v-5.5z" fill="#9ab8e0" stroke="#2a4a8a" stroke-width="1.2"/></svg>
<div class="a t " style="left:1132px;top:979px;font-size:12px;line-height:14px;letter-spacing:0.00px;">:0</div>
<svg class="a" style="left:1215px;top:977px;" width="16" height="17" viewBox="0 0 16 17"><ellipse cx="7" cy="7" rx="5.5" ry="4.5" transform="rotate(-35 7 7)" fill="#c8d4ec" stroke="#2a3a7a" stroke-width="1.3"/><path d="M6 7l6-5" stroke="#2a3a7a" stroke-width="1.3"/><path d="M7 11v3M3 15h8" stroke="#2a3a7a" stroke-width="1.8"/></svg>
<svg class="a" style="left:1241px;top:980px;" width="13" height="14" viewBox="0 0 13 14"><path d="M9 11h2v2h-2zM5 11h2v2h-2zM1 11h2v2h-2zM9 7h2v2h-2zM5 7h2v2h-2zM9 3h2v2h-2z" fill="#b8b8b8"/></svg>
</div>
<div id="outside" class="a"></div>
</body></html>
